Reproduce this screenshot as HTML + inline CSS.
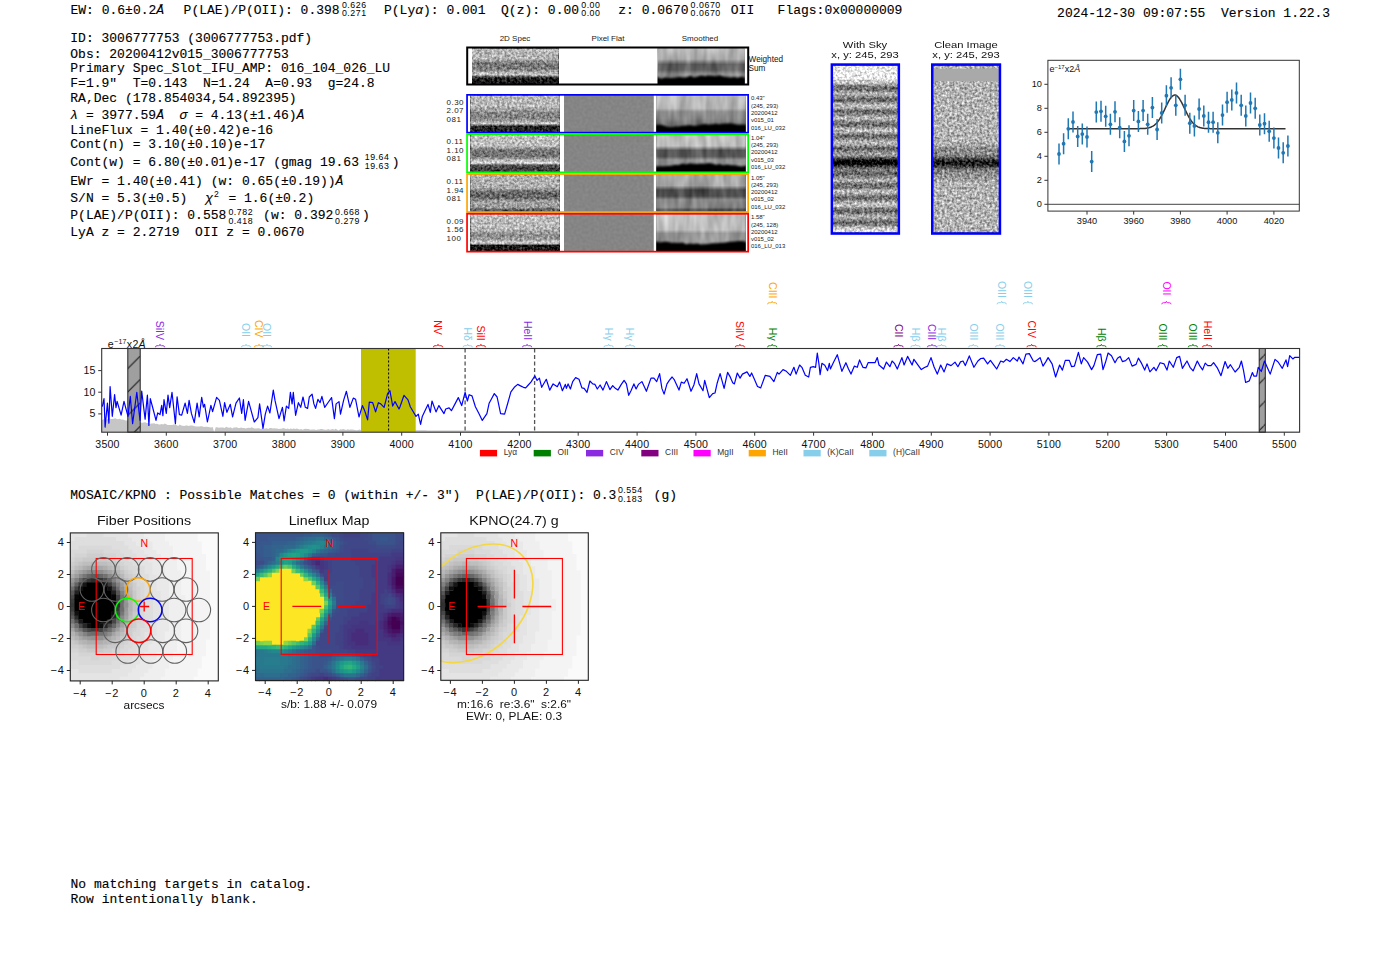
<!DOCTYPE html>
<html><head><meta charset="utf-8"><style>
html,body{margin:0;padding:0;background:#fff;}
body{width:1400px;height:953px;position:relative;overflow:hidden;}
.t{position:absolute;white-space:pre;font-family:'Liberation Mono', monospace;color:#000;-webkit-text-stroke:0.12px #000;}
.s{position:absolute;white-space:pre;font-family:'Liberation Sans', sans-serif;color:#000;}
svg{position:absolute;left:0;top:0;}
</style></head><body>
<svg width="1400" height="953"><defs><filter id="nz1" x="0" y="0" width="100%" height="100%" color-interpolation-filters="sRGB"><feTurbulence type="fractalNoise" baseFrequency="0.4" numOctaves="2" seed="3" result="t"/><feColorMatrix in="t" type="matrix" values="1 0 0 0 0 1 0 0 0 0 1 0 0 0 0 0 0 0 0 1" result="g"/><feComposite in="SourceGraphic" in2="g" operator="arithmetic" k1="0" k2="1" k3="0.72" k4="-0.36"/></filter><filter id="nz2" x="0" y="0" width="100%" height="100%" color-interpolation-filters="sRGB"><feTurbulence type="fractalNoise" baseFrequency="0.4" numOctaves="2" seed="7" result="t"/><feColorMatrix in="t" type="matrix" values="1 0 0 0 0 1 0 0 0 0 1 0 0 0 0 0 0 0 0 1" result="g"/><feComposite in="SourceGraphic" in2="g" operator="arithmetic" k1="0" k2="1" k3="0.72" k4="-0.36"/></filter><filter id="nz3" x="0" y="0" width="100%" height="100%" color-interpolation-filters="sRGB"><feTurbulence type="fractalNoise" baseFrequency="0.4" numOctaves="2" seed="11" result="t"/><feColorMatrix in="t" type="matrix" values="1 0 0 0 0 1 0 0 0 0 1 0 0 0 0 0 0 0 0 1" result="g"/><feComposite in="SourceGraphic" in2="g" operator="arithmetic" k1="0" k2="1" k3="0.72" k4="-0.36"/></filter><filter id="nz4" x="0" y="0" width="100%" height="100%" color-interpolation-filters="sRGB"><feTurbulence type="fractalNoise" baseFrequency="0.4" numOctaves="2" seed="17" result="t"/><feColorMatrix in="t" type="matrix" values="1 0 0 0 0 1 0 0 0 0 1 0 0 0 0 0 0 0 0 1" result="g"/><feComposite in="SourceGraphic" in2="g" operator="arithmetic" k1="0" k2="1" k3="0.72" k4="-0.36"/></filter><filter id="nz5" x="0" y="0" width="100%" height="100%" color-interpolation-filters="sRGB"><feTurbulence type="fractalNoise" baseFrequency="0.4" numOctaves="2" seed="23" result="t"/><feColorMatrix in="t" type="matrix" values="1 0 0 0 0 1 0 0 0 0 1 0 0 0 0 0 0 0 0 1" result="g"/><feComposite in="SourceGraphic" in2="g" operator="arithmetic" k1="0" k2="1" k3="0.72" k4="-0.36"/></filter><filter id="nzs" x="0" y="0" width="100%" height="100%" color-interpolation-filters="sRGB"><feTurbulence type="fractalNoise" baseFrequency="0.4" numOctaves="2" seed="31" result="t"/><feColorMatrix in="t" type="matrix" values="1 0 0 0 0 1 0 0 0 0 1 0 0 0 0 0 0 0 0 1" result="g"/><feComposite in="SourceGraphic" in2="g" operator="arithmetic" k1="0" k2="1" k3="0.85" k4="-0.425"/></filter><filter id="nzc" x="0" y="0" width="100%" height="100%" color-interpolation-filters="sRGB"><feTurbulence type="fractalNoise" baseFrequency="0.4" numOctaves="2" seed="41" result="t"/><feColorMatrix in="t" type="matrix" values="1 0 0 0 0 1 0 0 0 0 1 0 0 0 0 0 0 0 0 1" result="g"/><feComposite in="SourceGraphic" in2="g" operator="arithmetic" k1="0" k2="1" k3="0.85" k4="-0.425"/></filter><filter id="nzp" x="0" y="0" width="100%" height="100%" color-interpolation-filters="sRGB"><feTurbulence type="fractalNoise" baseFrequency="0.35" numOctaves="1" seed="53" result="t"/><feColorMatrix in="t" type="matrix" values="1 0 0 0 0 1 0 0 0 0 1 0 0 0 0 0 0 0 0 1" result="g"/><feComposite in="SourceGraphic" in2="g" operator="arithmetic" k1="0" k2="1" k3="0.07" k4="-0.035"/></filter><filter id="streak" x="0" y="0" width="100%" height="100%" color-interpolation-filters="sRGB"><feTurbulence type="fractalNoise" baseFrequency="0.14 0.035" numOctaves="2" seed="5" result="t"/><feColorMatrix in="t" type="matrix" values="1 0 0 0 0 1 0 0 0 0 1 0 0 0 0 0 0 0 0 1" result="g"/><feComposite in="SourceGraphic" in2="g" operator="arithmetic" k1="0" k2="1" k3="0.32" k4="-0.16"/></filter><filter id="soft" x="-5%" y="-30%" width="110%" height="160%"><feGaussianBlur stdDeviation="1.1"/></filter><linearGradient id="g1" x1="0" y1="0" x2="0" y2="1"><stop offset="0.000" stop-color="#b8b8b8"/><stop offset="0.300" stop-color="#b2b2b2"/><stop offset="0.420" stop-color="#737373"/><stop offset="0.580" stop-color="#7a7a7a"/><stop offset="0.680" stop-color="#b2b2b2"/><stop offset="0.740" stop-color="#c7c7c7"/><stop offset="0.800" stop-color="#4c4c4c"/><stop offset="0.860" stop-color="#1a1a1a"/><stop offset="1.000" stop-color="#141414"/></linearGradient><linearGradient id="g2" x1="0" y1="0" x2="0" y2="1"><stop offset="0.000" stop-color="#b8b8b8"/><stop offset="0.300" stop-color="#a8a8a8"/><stop offset="0.450" stop-color="#5c5c5c"/><stop offset="0.600" stop-color="#616161"/><stop offset="0.720" stop-color="#8c8c8c"/><stop offset="1.000" stop-color="#808080"/></linearGradient><clipPath id="cb1"><rect x="657.7" y="66.9" width="87.2" height="17.1"/></clipPath><linearGradient id="g3" x1="0" y1="0" x2="0" y2="1"><stop offset="0.000" stop-color="#b8b8b8"/><stop offset="0.300" stop-color="#b8b8b8"/><stop offset="0.450" stop-color="#8c8c8c"/><stop offset="0.600" stop-color="#808080"/><stop offset="0.700" stop-color="#9e9e9e"/><stop offset="0.760" stop-color="#cccccc"/><stop offset="0.800" stop-color="#808080"/><stop offset="0.840" stop-color="#262626"/><stop offset="1.000" stop-color="#1f1f1f"/></linearGradient><linearGradient id="g4" x1="0" y1="0" x2="0" y2="1"><stop offset="0.000" stop-color="#bdbdbd"/><stop offset="0.350" stop-color="#b8b8b8"/><stop offset="0.450" stop-color="#8f8f8f"/><stop offset="0.620" stop-color="#858585"/><stop offset="0.750" stop-color="#757575"/><stop offset="1.000" stop-color="#666666"/></linearGradient><clipPath id="cb2"><rect x="656.3" y="114.9" width="89.4" height="17.4"/></clipPath><linearGradient id="g5" x1="0" y1="0" x2="0" y2="1"><stop offset="0.000" stop-color="#c2c2c2"/><stop offset="0.300" stop-color="#bdbdbd"/><stop offset="0.420" stop-color="#737373"/><stop offset="0.580" stop-color="#737373"/><stop offset="0.680" stop-color="#b8b8b8"/><stop offset="0.760" stop-color="#d9d9d9"/><stop offset="0.820" stop-color="#4c4c4c"/><stop offset="1.000" stop-color="#383838"/></linearGradient><linearGradient id="g6" x1="0" y1="0" x2="0" y2="1"><stop offset="0.000" stop-color="#c2c2c2"/><stop offset="0.300" stop-color="#bdbdbd"/><stop offset="0.420" stop-color="#545454"/><stop offset="0.580" stop-color="#595959"/><stop offset="0.680" stop-color="#949494"/><stop offset="0.780" stop-color="#949494"/><stop offset="1.000" stop-color="#808080"/></linearGradient><clipPath id="cb3"><rect x="656.3" y="154.9" width="89.4" height="17.1"/></clipPath><linearGradient id="g7" x1="0" y1="0" x2="0" y2="1"><stop offset="0.000" stop-color="#b2b2b2"/><stop offset="0.350" stop-color="#adadad"/><stop offset="0.500" stop-color="#616161"/><stop offset="0.620" stop-color="#666666"/><stop offset="0.720" stop-color="#9e9e9e"/><stop offset="0.880" stop-color="#9e9e9e"/><stop offset="0.950" stop-color="#595959"/><stop offset="1.000" stop-color="#4c4c4c"/></linearGradient><linearGradient id="g8" x1="0" y1="0" x2="0" y2="1"><stop offset="0.000" stop-color="#adadad"/><stop offset="0.300" stop-color="#a3a3a3"/><stop offset="0.420" stop-color="#474747"/><stop offset="0.580" stop-color="#4c4c4c"/><stop offset="0.680" stop-color="#878787"/><stop offset="0.880" stop-color="#858585"/><stop offset="0.950" stop-color="#545454"/><stop offset="1.000" stop-color="#545454"/></linearGradient><linearGradient id="g9" x1="0" y1="0" x2="0" y2="1"><stop offset="0.000" stop-color="#bdbdbd"/><stop offset="0.400" stop-color="#b8b8b8"/><stop offset="0.550" stop-color="#8c8c8c"/><stop offset="0.680" stop-color="#999999"/><stop offset="0.750" stop-color="#cccccc"/><stop offset="0.800" stop-color="#b2b2b2"/><stop offset="0.840" stop-color="#1a1a1a"/><stop offset="1.000" stop-color="#141414"/></linearGradient><linearGradient id="g10" x1="0" y1="0" x2="0" y2="1"><stop offset="0.000" stop-color="#c2c2c2"/><stop offset="0.420" stop-color="#bdbdbd"/><stop offset="0.520" stop-color="#949494"/><stop offset="0.700" stop-color="#949494"/><stop offset="1.000" stop-color="#808080"/></linearGradient><clipPath id="cb4"><rect x="656.3" y="232.7" width="89.4" height="18.6"/></clipPath><linearGradient id="g11" x1="0" y1="0" x2="0" y2="1"><stop offset="0.000" stop-color="#ebebeb"/><stop offset="0.006" stop-color="#ebebeb"/><stop offset="0.013" stop-color="#ebebeb"/><stop offset="0.019" stop-color="#ebebeb"/><stop offset="0.025" stop-color="#ebebeb"/><stop offset="0.031" stop-color="#ebebeb"/><stop offset="0.038" stop-color="#ebebeb"/><stop offset="0.044" stop-color="#ebebeb"/><stop offset="0.050" stop-color="#ebebeb"/><stop offset="0.057" stop-color="#ebebeb"/><stop offset="0.063" stop-color="#ebebeb"/><stop offset="0.069" stop-color="#eaeaea"/><stop offset="0.075" stop-color="#eaeaea"/><stop offset="0.082" stop-color="#e9e9e9"/><stop offset="0.088" stop-color="#d8d8d8"/><stop offset="0.094" stop-color="#d3d3d3"/><stop offset="0.101" stop-color="#cbcbcb"/><stop offset="0.107" stop-color="#bdbdbd"/><stop offset="0.113" stop-color="#a9a9a9"/><stop offset="0.119" stop-color="#929292"/><stop offset="0.126" stop-color="#7b7b7b"/><stop offset="0.132" stop-color="#6b6b6b"/><stop offset="0.138" stop-color="#666666"/><stop offset="0.145" stop-color="#6e6e6e"/><stop offset="0.151" stop-color="#808080"/><stop offset="0.157" stop-color="#959595"/><stop offset="0.164" stop-color="#a7a7a7"/><stop offset="0.170" stop-color="#b0b0b0"/><stop offset="0.176" stop-color="#adadad"/><stop offset="0.182" stop-color="#9f9f9f"/><stop offset="0.189" stop-color="#8b8b8b"/><stop offset="0.195" stop-color="#777777"/><stop offset="0.201" stop-color="#696969"/><stop offset="0.208" stop-color="#676767"/><stop offset="0.214" stop-color="#717171"/><stop offset="0.220" stop-color="#858585"/><stop offset="0.226" stop-color="#9b9b9b"/><stop offset="0.233" stop-color="#aeaeae"/><stop offset="0.239" stop-color="#b9b9b9"/><stop offset="0.245" stop-color="#b9b9b9"/><stop offset="0.252" stop-color="#afafaf"/><stop offset="0.258" stop-color="#9c9c9c"/><stop offset="0.264" stop-color="#858585"/><stop offset="0.270" stop-color="#727272"/><stop offset="0.277" stop-color="#676767"/><stop offset="0.283" stop-color="#696969"/><stop offset="0.289" stop-color="#777777"/><stop offset="0.296" stop-color="#8c8c8c"/><stop offset="0.302" stop-color="#a2a2a2"/><stop offset="0.308" stop-color="#b2b2b2"/><stop offset="0.314" stop-color="#b9b9b9"/><stop offset="0.321" stop-color="#b5b5b5"/><stop offset="0.327" stop-color="#a7a7a7"/><stop offset="0.333" stop-color="#939393"/><stop offset="0.340" stop-color="#7c7c7c"/><stop offset="0.346" stop-color="#6c6c6c"/><stop offset="0.352" stop-color="#666666"/><stop offset="0.358" stop-color="#6d6d6d"/><stop offset="0.365" stop-color="#7f7f7f"/><stop offset="0.371" stop-color="#959595"/><stop offset="0.377" stop-color="#aaaaaa"/><stop offset="0.384" stop-color="#b7b7b7"/><stop offset="0.390" stop-color="#bababa"/><stop offset="0.396" stop-color="#b3b3b3"/><stop offset="0.403" stop-color="#a2a2a2"/><stop offset="0.409" stop-color="#8b8b8b"/><stop offset="0.415" stop-color="#767676"/><stop offset="0.421" stop-color="#696969"/><stop offset="0.428" stop-color="#676767"/><stop offset="0.434" stop-color="#727272"/><stop offset="0.440" stop-color="#868686"/><stop offset="0.447" stop-color="#9c9c9c"/><stop offset="0.453" stop-color="#afafaf"/><stop offset="0.459" stop-color="#b9b9b9"/><stop offset="0.465" stop-color="#b9b9b9"/><stop offset="0.472" stop-color="#aeaeae"/><stop offset="0.478" stop-color="#9b9b9b"/><stop offset="0.484" stop-color="#848484"/><stop offset="0.491" stop-color="#707070"/><stop offset="0.497" stop-color="#656565"/><stop offset="0.503" stop-color="#676767"/><stop offset="0.509" stop-color="#737373"/><stop offset="0.516" stop-color="#858585"/><stop offset="0.522" stop-color="#959595"/><stop offset="0.528" stop-color="#9e9e9e"/><stop offset="0.535" stop-color="#9b9b9b"/><stop offset="0.541" stop-color="#8d8d8d"/><stop offset="0.547" stop-color="#757575"/><stop offset="0.553" stop-color="#575757"/><stop offset="0.560" stop-color="#363636"/><stop offset="0.566" stop-color="#181818"/><stop offset="0.572" stop-color="#010101"/><stop offset="0.579" stop-color="#000000"/><stop offset="0.585" stop-color="#000000"/><stop offset="0.591" stop-color="#080808"/><stop offset="0.597" stop-color="#202020"/><stop offset="0.604" stop-color="#3e3e3e"/><stop offset="0.610" stop-color="#5a5a5a"/><stop offset="0.616" stop-color="#707070"/><stop offset="0.623" stop-color="#7b7b7b"/><stop offset="0.629" stop-color="#7b7b7b"/><stop offset="0.635" stop-color="#727272"/><stop offset="0.642" stop-color="#676767"/><stop offset="0.648" stop-color="#606060"/><stop offset="0.654" stop-color="#636363"/><stop offset="0.660" stop-color="#717171"/><stop offset="0.667" stop-color="#868686"/><stop offset="0.673" stop-color="#9b9b9b"/><stop offset="0.679" stop-color="#aaaaaa"/><stop offset="0.686" stop-color="#afafaf"/><stop offset="0.692" stop-color="#a8a8a8"/><stop offset="0.698" stop-color="#979797"/><stop offset="0.704" stop-color="#828282"/><stop offset="0.711" stop-color="#707070"/><stop offset="0.717" stop-color="#666666"/><stop offset="0.723" stop-color="#696969"/><stop offset="0.730" stop-color="#787878"/><stop offset="0.736" stop-color="#8e8e8e"/><stop offset="0.742" stop-color="#a4a4a4"/><stop offset="0.748" stop-color="#b4b4b4"/><stop offset="0.755" stop-color="#bababa"/><stop offset="0.761" stop-color="#b6b6b6"/><stop offset="0.767" stop-color="#a8a8a8"/><stop offset="0.774" stop-color="#939393"/><stop offset="0.780" stop-color="#7d7d7d"/><stop offset="0.786" stop-color="#6c6c6c"/><stop offset="0.792" stop-color="#666666"/><stop offset="0.799" stop-color="#6d6d6d"/><stop offset="0.805" stop-color="#7f7f7f"/><stop offset="0.811" stop-color="#969696"/><stop offset="0.818" stop-color="#acacac"/><stop offset="0.824" stop-color="#bcbcbc"/><stop offset="0.830" stop-color="#c3c3c3"/><stop offset="0.836" stop-color="#c0c0c0"/><stop offset="0.843" stop-color="#b4b4b4"/><stop offset="0.849" stop-color="#a0a0a0"/><stop offset="0.855" stop-color="#898989"/><stop offset="0.862" stop-color="#747474"/><stop offset="0.868" stop-color="#676767"/><stop offset="0.874" stop-color="#676767"/><stop offset="0.881" stop-color="#747474"/><stop offset="0.887" stop-color="#878787"/><stop offset="0.893" stop-color="#9c9c9c"/><stop offset="0.899" stop-color="#aaaaaa"/><stop offset="0.906" stop-color="#afafaf"/><stop offset="0.912" stop-color="#a7a7a7"/><stop offset="0.918" stop-color="#969696"/><stop offset="0.925" stop-color="#818181"/><stop offset="0.931" stop-color="#6f6f6f"/><stop offset="0.937" stop-color="#666666"/><stop offset="0.943" stop-color="#6a6a6a"/><stop offset="0.950" stop-color="#7a7a7a"/><stop offset="0.956" stop-color="#909090"/><stop offset="0.962" stop-color="#a8a8a8"/><stop offset="0.969" stop-color="#bcbcbc"/><stop offset="0.975" stop-color="#cacaca"/><stop offset="0.981" stop-color="#d3d3d3"/><stop offset="0.987" stop-color="#d8d8d8"/><stop offset="0.994" stop-color="#dadada"/><stop offset="1.000" stop-color="#dbdbdb"/></linearGradient><linearGradient id="g12" x1="0" y1="0" x2="0" y2="1"><stop offset="0.000" stop-color="#b2b2b2"/><stop offset="0.006" stop-color="#b2b2b2"/><stop offset="0.013" stop-color="#b2b2b2"/><stop offset="0.019" stop-color="#b2b2b2"/><stop offset="0.025" stop-color="#b2b2b2"/><stop offset="0.031" stop-color="#b2b2b2"/><stop offset="0.038" stop-color="#b2b2b2"/><stop offset="0.044" stop-color="#b2b2b2"/><stop offset="0.050" stop-color="#b2b2b2"/><stop offset="0.057" stop-color="#b2b2b2"/><stop offset="0.063" stop-color="#b2b2b2"/><stop offset="0.069" stop-color="#b2b2b2"/><stop offset="0.075" stop-color="#b2b2b2"/><stop offset="0.082" stop-color="#b2b2b2"/><stop offset="0.088" stop-color="#b2b2b2"/><stop offset="0.094" stop-color="#b2b2b2"/><stop offset="0.101" stop-color="#b2b2b2"/><stop offset="0.107" stop-color="#b2b2b2"/><stop offset="0.113" stop-color="#b2b2b2"/><stop offset="0.119" stop-color="#b2b2b2"/><stop offset="0.126" stop-color="#b2b2b2"/><stop offset="0.132" stop-color="#b2b2b2"/><stop offset="0.138" stop-color="#b2b2b2"/><stop offset="0.145" stop-color="#b2b2b2"/><stop offset="0.151" stop-color="#b2b2b2"/><stop offset="0.157" stop-color="#b2b2b2"/><stop offset="0.164" stop-color="#b2b2b2"/><stop offset="0.170" stop-color="#b2b2b2"/><stop offset="0.176" stop-color="#b2b2b2"/><stop offset="0.182" stop-color="#b2b2b2"/><stop offset="0.189" stop-color="#b2b2b2"/><stop offset="0.195" stop-color="#b2b2b2"/><stop offset="0.201" stop-color="#b2b2b2"/><stop offset="0.208" stop-color="#b2b2b2"/><stop offset="0.214" stop-color="#b2b2b2"/><stop offset="0.220" stop-color="#b2b2b2"/><stop offset="0.226" stop-color="#b2b2b2"/><stop offset="0.233" stop-color="#b2b2b2"/><stop offset="0.239" stop-color="#b2b2b2"/><stop offset="0.245" stop-color="#b2b2b2"/><stop offset="0.252" stop-color="#b2b2b2"/><stop offset="0.258" stop-color="#b2b2b2"/><stop offset="0.264" stop-color="#b2b2b2"/><stop offset="0.270" stop-color="#b2b2b2"/><stop offset="0.277" stop-color="#b2b2b2"/><stop offset="0.283" stop-color="#b2b2b2"/><stop offset="0.289" stop-color="#b2b2b2"/><stop offset="0.296" stop-color="#b2b2b2"/><stop offset="0.302" stop-color="#b2b2b2"/><stop offset="0.308" stop-color="#b2b2b2"/><stop offset="0.314" stop-color="#b2b2b2"/><stop offset="0.321" stop-color="#b2b2b2"/><stop offset="0.327" stop-color="#b2b2b2"/><stop offset="0.333" stop-color="#b2b2b2"/><stop offset="0.340" stop-color="#b2b2b2"/><stop offset="0.346" stop-color="#b2b2b2"/><stop offset="0.352" stop-color="#b2b2b2"/><stop offset="0.358" stop-color="#b2b2b2"/><stop offset="0.365" stop-color="#b2b2b2"/><stop offset="0.371" stop-color="#b2b2b2"/><stop offset="0.377" stop-color="#b2b2b2"/><stop offset="0.384" stop-color="#b2b2b2"/><stop offset="0.390" stop-color="#b2b2b2"/><stop offset="0.396" stop-color="#b2b2b2"/><stop offset="0.403" stop-color="#b2b2b2"/><stop offset="0.409" stop-color="#b2b2b2"/><stop offset="0.415" stop-color="#b2b2b2"/><stop offset="0.421" stop-color="#b2b2b2"/><stop offset="0.428" stop-color="#b2b2b2"/><stop offset="0.434" stop-color="#b2b2b2"/><stop offset="0.440" stop-color="#b2b2b2"/><stop offset="0.447" stop-color="#b2b2b2"/><stop offset="0.453" stop-color="#b2b2b2"/><stop offset="0.459" stop-color="#b1b1b1"/><stop offset="0.465" stop-color="#afafaf"/><stop offset="0.472" stop-color="#acacac"/><stop offset="0.478" stop-color="#a6a6a6"/><stop offset="0.484" stop-color="#9f9f9f"/><stop offset="0.491" stop-color="#969696"/><stop offset="0.497" stop-color="#8e8e8e"/><stop offset="0.503" stop-color="#898989"/><stop offset="0.509" stop-color="#878787"/><stop offset="0.516" stop-color="#898989"/><stop offset="0.522" stop-color="#8c8c8c"/><stop offset="0.528" stop-color="#8d8d8d"/><stop offset="0.535" stop-color="#898989"/><stop offset="0.541" stop-color="#7f7f7f"/><stop offset="0.547" stop-color="#6f6f6f"/><stop offset="0.553" stop-color="#5b5b5b"/><stop offset="0.560" stop-color="#454545"/><stop offset="0.566" stop-color="#303030"/><stop offset="0.572" stop-color="#202020"/><stop offset="0.579" stop-color="#161616"/><stop offset="0.585" stop-color="#151515"/><stop offset="0.591" stop-color="#1c1c1c"/><stop offset="0.597" stop-color="#2b2b2b"/><stop offset="0.604" stop-color="#3e3e3e"/><stop offset="0.610" stop-color="#525252"/><stop offset="0.616" stop-color="#666666"/><stop offset="0.623" stop-color="#757575"/><stop offset="0.629" stop-color="#818181"/><stop offset="0.635" stop-color="#888888"/><stop offset="0.642" stop-color="#8c8c8c"/><stop offset="0.648" stop-color="#8e8e8e"/><stop offset="0.654" stop-color="#909090"/><stop offset="0.660" stop-color="#939393"/><stop offset="0.667" stop-color="#969696"/><stop offset="0.673" stop-color="#9b9b9b"/><stop offset="0.679" stop-color="#a0a0a0"/><stop offset="0.686" stop-color="#a5a5a5"/><stop offset="0.692" stop-color="#a9a9a9"/><stop offset="0.698" stop-color="#acacac"/><stop offset="0.704" stop-color="#afafaf"/><stop offset="0.711" stop-color="#b0b0b0"/><stop offset="0.717" stop-color="#b1b1b1"/><stop offset="0.723" stop-color="#b2b2b2"/><stop offset="0.730" stop-color="#b2b2b2"/><stop offset="0.736" stop-color="#b2b2b2"/><stop offset="0.742" stop-color="#b2b2b2"/><stop offset="0.748" stop-color="#b2b2b2"/><stop offset="0.755" stop-color="#b2b2b2"/><stop offset="0.761" stop-color="#b2b2b2"/><stop offset="0.767" stop-color="#b2b2b2"/><stop offset="0.774" stop-color="#b2b2b2"/><stop offset="0.780" stop-color="#b2b2b2"/><stop offset="0.786" stop-color="#b2b2b2"/><stop offset="0.792" stop-color="#b2b2b2"/><stop offset="0.799" stop-color="#b2b2b2"/><stop offset="0.805" stop-color="#b2b2b2"/><stop offset="0.811" stop-color="#b2b2b2"/><stop offset="0.818" stop-color="#b2b2b2"/><stop offset="0.824" stop-color="#b2b2b2"/><stop offset="0.830" stop-color="#b2b2b2"/><stop offset="0.836" stop-color="#b2b2b2"/><stop offset="0.843" stop-color="#b2b2b2"/><stop offset="0.849" stop-color="#b2b2b2"/><stop offset="0.855" stop-color="#b2b2b2"/><stop offset="0.862" stop-color="#b2b2b2"/><stop offset="0.868" stop-color="#b2b2b2"/><stop offset="0.874" stop-color="#b2b2b2"/><stop offset="0.881" stop-color="#b2b2b2"/><stop offset="0.887" stop-color="#b2b2b2"/><stop offset="0.893" stop-color="#b2b2b2"/><stop offset="0.899" stop-color="#b2b2b2"/><stop offset="0.906" stop-color="#b2b2b2"/><stop offset="0.912" stop-color="#b2b2b2"/><stop offset="0.918" stop-color="#b2b2b2"/><stop offset="0.925" stop-color="#b2b2b2"/><stop offset="0.931" stop-color="#b2b2b2"/><stop offset="0.937" stop-color="#b2b2b2"/><stop offset="0.943" stop-color="#b2b2b2"/><stop offset="0.950" stop-color="#b2b2b2"/><stop offset="0.956" stop-color="#b2b2b2"/><stop offset="0.962" stop-color="#b2b2b2"/><stop offset="0.969" stop-color="#b2b2b2"/><stop offset="0.975" stop-color="#b2b2b2"/><stop offset="0.981" stop-color="#b2b2b2"/><stop offset="0.987" stop-color="#b2b2b2"/><stop offset="0.994" stop-color="#b2b2b2"/><stop offset="1.000" stop-color="#b2b2b2"/></linearGradient><pattern id="hatch" patternUnits="userSpaceOnUse" width="23.4" height="23.4" patternTransform="translate(0,4.9)"><rect width="23.4" height="23.4" fill="#9f9f9f"/><path d="M-1,24.4 L24.4,-1" stroke="#111" stroke-width="1"/></pattern></defs><rect x="472" y="48.4" width="86.6" height="35.6" fill="url(#g1)" filter="url(#nz5)"/>
<rect x="657.7" y="48.4" width="87.2" height="35.6" fill="url(#g2)" filter="url(#streak)"/>
<g clip-path="url(#cb1)"><polygon filter="url(#soft)" fill="#000" points="654.7,87.0 654.7,76.9 657.7,77.2 661.3,78.7 665.0,77.6 668.6,77.9 672.2,77.9 675.9,77.4 679.5,76.9 683.1,77.6 686.8,77.2 690.4,75.7 694.0,77.5 697.7,76.6 701.3,75.5 704.9,76.2 708.6,75.5 712.2,75.7 715.8,76.2 719.5,75.3 723.1,76.5 726.7,77.1 730.4,77.4 734.0,76.9 737.6,77.8 741.3,76.8 744.9,77.8 747.9,76.9 747.9,87.0"/></g>
<rect x="744.9" y="48" width="2.3" height="36" fill="#fff"/>
<rect x="467.2" y="47.5" width="281" height="37" fill="none" stroke="#000" stroke-width="2"/>
<rect x="470.5" y="95.2" width="89.3" height="37.1" fill="url(#g3)" filter="url(#nz1)"/>
<rect x="564" y="95.0" width="89.7" height="37.5" fill="#858585" filter="url(#nzp)"/>
<rect x="656.3" y="95.2" width="89.4" height="37.1" fill="url(#g4)" filter="url(#streak)"/>
<g clip-path="url(#cb2)"><polygon filter="url(#soft)" fill="#000" points="653.3,135.3 653.3,124.9 656.3,125.1 660.0,124.5 663.8,125.5 667.5,126.7 671.2,127.3 674.9,126.5 678.6,126.6 682.4,125.7 686.1,125.4 689.8,125.1 693.5,125.8 697.3,125.6 701.0,124.6 704.7,124.0 708.4,124.4 712.2,124.2 715.9,123.7 719.6,124.3 723.3,123.5 727.1,123.6 730.8,123.2 734.5,124.0 738.2,124.8 742.0,124.5 745.7,124.8 748.7,124.9 748.7,135.3"/></g>
<rect x="470.5" y="134.7" width="89.3" height="37.3" fill="url(#g5)" filter="url(#nz2)"/>
<rect x="564" y="134.5" width="89.7" height="37.7" fill="#858585" filter="url(#nzp)"/>
<rect x="656.3" y="134.7" width="89.4" height="37.3" fill="url(#g6)" filter="url(#streak)"/>
<g clip-path="url(#cb3)"><polygon filter="url(#soft)" fill="#000" points="653.3,175.0 653.3,164.9 656.3,166.4 660.0,166.3 663.8,166.2 667.5,166.0 671.2,165.7 674.9,164.7 678.6,164.9 682.4,163.6 686.1,164.3 689.8,163.3 693.5,163.7 697.3,163.9 701.0,163.4 704.7,163.7 708.4,163.0 712.2,163.6 715.9,164.7 719.6,164.1 723.3,165.3 727.1,164.6 730.8,165.2 734.5,165.3 738.2,166.1 742.0,166.5 745.7,165.7 748.7,164.9 748.7,175.0"/></g>
<rect x="470.5" y="174.4" width="89.3" height="37.3" fill="url(#g7)" filter="url(#nz3)"/>
<rect x="564" y="174.2" width="89.7" height="37.7" fill="#858585" filter="url(#nzp)"/>
<rect x="656.3" y="174.4" width="89.4" height="37.3" fill="url(#g8)" filter="url(#streak)"/>
<rect x="470.5" y="214.1" width="89.3" height="37.2" fill="url(#g9)" filter="url(#nz4)"/>
<rect x="564" y="213.9" width="89.7" height="37.6" fill="#858585" filter="url(#nzp)"/>
<rect x="656.3" y="214.1" width="89.4" height="37.2" fill="url(#g10)" filter="url(#streak)"/>
<g clip-path="url(#cb4)"><polygon filter="url(#soft)" fill="#000" points="653.3,254.3 653.3,242.7 656.3,241.4 660.0,242.5 663.8,241.8 667.5,241.8 671.2,242.7 674.9,242.8 678.6,242.9 682.4,242.6 686.1,244.2 689.8,243.6 693.5,244.0 697.3,243.5 701.0,244.6 704.7,244.2 708.4,244.1 712.2,243.3 715.9,243.2 719.6,243.1 723.3,242.8 727.1,242.2 730.8,241.7 734.5,241.4 738.2,241.1 742.0,241.0 745.7,241.7 748.7,242.7 748.7,254.3"/></g>
<rect x="467.05" y="94.85" width="281.1" height="37.80" fill="none" stroke="#0000ff" stroke-width="1.7"/>
<rect x="467.05" y="134.35" width="281.1" height="38.00" fill="none" stroke="#00ff00" stroke-width="1.7"/>
<rect x="467.05" y="174.05" width="281.1" height="38.00" fill="none" stroke="#ffa500" stroke-width="1.7"/>
<rect x="467.05" y="213.75" width="281.1" height="37.90" fill="none" stroke="#ff0000" stroke-width="1.7"/>
<rect x="832.6" y="65.3" width="65.5" height="167.4" fill="url(#g11)" filter="url(#nzs)"/>
<rect x="933.0" y="65.3" width="66.2" height="167.4" fill="url(#g12)" filter="url(#nzc)"/>
<rect x="933.0" y="68.6" width="66.2" height="12.6" fill="#a9a9a9"/>
<rect x="831.85" y="64.55" width="67" height="169" fill="none" stroke="#0000ff" stroke-width="2.5"/>
<rect x="932.25" y="64.55" width="67.7" height="169" fill="none" stroke="#0000ff" stroke-width="2.5"/>
<rect x="1047.9" y="60.3" width="251.4" height="150.8" fill="#fff" stroke="#333" stroke-width="1"/>
<line x1="1047.9" y1="204.3" x2="1299.3" y2="204.3" stroke="#444" stroke-width="1"/>
<polyline fill="none" stroke="#333" stroke-width="1.5" points="1068.3,128.7 1068.9,128.7 1069.5,128.7 1070.1,128.7 1070.7,128.7 1071.2,128.7 1071.8,128.7 1072.4,128.7 1073.0,128.7 1073.6,128.7 1074.2,128.7 1074.7,128.7 1075.3,128.7 1075.9,128.7 1076.5,128.7 1077.1,128.7 1077.7,128.7 1078.2,128.7 1078.8,128.7 1079.4,128.7 1080.0,128.7 1080.6,128.7 1081.2,128.7 1081.7,128.7 1082.3,128.7 1082.9,128.7 1083.5,128.7 1084.1,128.7 1084.7,128.7 1085.2,128.7 1085.8,128.7 1086.4,128.7 1087.0,128.7 1087.6,128.7 1088.2,128.7 1088.8,128.7 1089.3,128.7 1089.9,128.7 1090.5,128.7 1091.1,128.7 1091.7,128.7 1092.3,128.7 1092.8,128.7 1093.4,128.7 1094.0,128.7 1094.6,128.7 1095.2,128.7 1095.8,128.7 1096.3,128.7 1096.9,128.7 1097.5,128.7 1098.1,128.7 1098.7,128.7 1099.3,128.7 1099.8,128.7 1100.4,128.7 1101.0,128.7 1101.6,128.7 1102.2,128.7 1102.8,128.7 1103.3,128.7 1103.9,128.7 1104.5,128.7 1105.1,128.7 1105.7,128.7 1106.3,128.7 1106.9,128.7 1107.4,128.7 1108.0,128.7 1108.6,128.7 1109.2,128.7 1109.8,128.7 1110.4,128.7 1110.9,128.7 1111.5,128.7 1112.1,128.7 1112.7,128.7 1113.3,128.7 1113.9,128.7 1114.4,128.7 1115.0,128.7 1115.6,128.7 1116.2,128.7 1116.8,128.7 1117.4,128.7 1117.9,128.7 1118.5,128.7 1119.1,128.7 1119.7,128.7 1120.3,128.7 1120.9,128.7 1121.5,128.7 1122.0,128.7 1122.6,128.7 1123.2,128.7 1123.8,128.7 1124.4,128.7 1125.0,128.7 1125.5,128.7 1126.1,128.7 1126.7,128.7 1127.3,128.7 1127.9,128.7 1128.5,128.7 1129.0,128.7 1129.6,128.7 1130.2,128.7 1130.8,128.7 1131.4,128.7 1132.0,128.7 1132.5,128.7 1133.1,128.7 1133.7,128.7 1134.3,128.7 1134.9,128.7 1135.5,128.7 1136.0,128.7 1136.6,128.7 1137.2,128.7 1137.8,128.7 1138.4,128.7 1139.0,128.7 1139.6,128.7 1140.1,128.6 1140.7,128.6 1141.3,128.6 1141.9,128.6 1142.5,128.6 1143.1,128.6 1143.6,128.5 1144.2,128.5 1144.8,128.4 1145.4,128.4 1146.0,128.3 1146.6,128.2 1147.1,128.2 1147.7,128.0 1148.3,127.9 1148.9,127.8 1149.5,127.6 1150.1,127.5 1150.6,127.2 1151.2,127.0 1151.8,126.7 1152.4,126.4 1153.0,126.1 1153.6,125.7 1154.2,125.3 1154.7,124.9 1155.3,124.3 1155.9,123.8 1156.5,123.2 1157.1,122.5 1157.7,121.8 1158.2,121.0 1158.8,120.2 1159.4,119.3 1160.0,118.4 1160.6,117.4 1161.2,116.4 1161.7,115.3 1162.3,114.2 1162.9,113.0 1163.5,111.8 1164.1,110.6 1164.7,109.4 1165.2,108.2 1165.8,106.9 1166.4,105.7 1167.0,104.5 1167.6,103.3 1168.2,102.2 1168.7,101.1 1169.3,100.1 1169.9,99.2 1170.5,98.3 1171.1,97.5 1171.7,96.8 1172.3,96.3 1172.8,95.8 1173.4,95.5 1174.0,95.2 1174.6,95.1 1175.2,95.1 1175.8,95.3 1176.3,95.5 1176.9,95.9 1177.5,96.4 1178.1,97.0 1178.7,97.7 1179.3,98.5 1179.8,99.4 1180.4,100.3 1181.0,101.4 1181.6,102.4 1182.2,103.6 1182.8,104.8 1183.3,106.0 1183.9,107.2 1184.5,108.4 1185.1,109.7 1185.7,110.9 1186.3,112.1 1186.9,113.3 1187.4,114.4 1188.0,115.5 1188.6,116.6 1189.2,117.6 1189.8,118.6 1190.4,119.5 1190.9,120.4 1191.5,121.2 1192.1,122.0 1192.7,122.7 1193.3,123.3 1193.9,123.9 1194.4,124.5 1195.0,125.0 1195.6,125.4 1196.2,125.8 1196.8,126.2 1197.4,126.5 1197.9,126.8 1198.5,127.1 1199.1,127.3 1199.7,127.5 1200.3,127.7 1200.9,127.8 1201.4,128.0 1202.0,128.1 1202.6,128.2 1203.2,128.3 1203.8,128.3 1204.4,128.4 1205.0,128.4 1205.5,128.5 1206.1,128.5 1206.7,128.6 1207.3,128.6 1207.9,128.6 1208.5,128.6 1209.0,128.6 1209.6,128.6 1210.2,128.7 1210.8,128.7 1211.4,128.7 1212.0,128.7 1212.5,128.7 1213.1,128.7 1213.7,128.7 1214.3,128.7 1214.9,128.7 1215.5,128.7 1216.0,128.7 1216.6,128.7 1217.2,128.7 1217.8,128.7 1218.4,128.7 1219.0,128.7 1219.6,128.7 1220.1,128.7 1220.7,128.7 1221.3,128.7 1221.9,128.7 1222.5,128.7 1223.1,128.7 1223.6,128.7 1224.2,128.7 1224.8,128.7 1225.4,128.7 1226.0,128.7 1226.6,128.7 1227.1,128.7 1227.7,128.7 1228.3,128.7 1228.9,128.7 1229.5,128.7 1230.1,128.7 1230.6,128.7 1231.2,128.7 1231.8,128.7 1232.4,128.7 1233.0,128.7 1233.6,128.7 1234.1,128.7 1234.7,128.7 1235.3,128.7 1235.9,128.7 1236.5,128.7 1237.1,128.7 1237.7,128.7 1238.2,128.7 1238.8,128.7 1239.4,128.7 1240.0,128.7 1240.6,128.7 1241.2,128.7 1241.7,128.7 1242.3,128.7 1242.9,128.7 1243.5,128.7 1244.1,128.7 1244.7,128.7 1245.2,128.7 1245.8,128.7 1246.4,128.7 1247.0,128.7 1247.6,128.7 1248.2,128.7 1248.7,128.7 1249.3,128.7 1249.9,128.7 1250.5,128.7 1251.1,128.7 1251.7,128.7 1252.3,128.7 1252.8,128.7 1253.4,128.7 1254.0,128.7 1254.6,128.7 1255.2,128.7 1255.8,128.7 1256.3,128.7 1256.9,128.7 1257.5,128.7 1258.1,128.7 1258.7,128.7 1259.3,128.7 1259.8,128.7 1260.4,128.7 1261.0,128.7 1261.6,128.7 1262.2,128.7 1262.8,128.7 1263.3,128.7 1263.9,128.7 1264.5,128.7 1265.1,128.7 1265.7,128.7 1266.3,128.7 1266.8,128.7 1267.4,128.7 1268.0,128.7 1268.6,128.7 1269.2,128.7 1269.8,128.7 1270.4,128.7 1270.9,128.7 1271.5,128.7 1272.1,128.7 1272.7,128.7 1273.3,128.7 1273.9,128.7 1274.4,128.7 1275.0,128.7 1275.6,128.7 1276.2,128.7 1276.8,128.7 1277.4,128.7 1277.9,128.7 1278.5,128.7 1279.1,128.7 1279.7,128.7 1280.3,128.7 1280.9,128.7 1281.4,128.7 1282.0,128.7 1282.6,128.7 1283.2,128.7 1283.8,128.7 1284.4,128.7 1285.0,128.7 1285.5,128.7"/>
<path d="M1059.0 143.5V164.5M1063.6 133.2V154.2M1068.3 118.3V139.3M1073.0 111.5V132.5M1077.7 125.9V146.9M1082.3 123.6V144.6M1087.0 126.4V147.4M1091.7 151.1V172.1M1096.3 101.6V122.6M1101.0 100.8V121.8M1105.7 105.8V126.8M1110.4 113.8V134.8M1115.0 101.3V122.3M1119.7 117.2V138.2M1124.4 130.9V151.9M1129.0 125.3V146.3M1133.7 100.1V121.1M1138.4 110.9V131.9M1143.1 100.1V121.1M1147.7 113.8V134.8M1152.4 97.1V118.1M1157.1 119.0V140.0M1161.7 102.4V123.4M1166.4 85.2V106.2M1171.1 77.3V98.3M1175.8 94.8V115.8M1180.4 68.8V89.8M1185.1 94.8V115.8M1189.8 112.7V133.7M1194.4 115.4V136.4M1199.1 98.5V119.5M1203.8 105.4V126.4M1208.5 111.7V132.7M1213.1 111.7V132.7M1217.8 122.3V143.3M1222.5 104.6V125.6M1227.1 91.7V112.7M1231.8 89.4V110.4M1236.5 82.4V103.4M1241.2 94.8V115.8M1245.8 105.4V126.4M1250.5 92.5V113.5M1255.2 97.8V118.8M1259.8 114.5V135.5M1264.5 113.2V134.2M1269.2 120.8V141.8M1273.9 127.6V148.6M1278.5 137.4V158.4M1283.2 142.3V163.3M1287.9 135.5V156.5" stroke="#1f77b4" stroke-width="1.5" fill="none"/>
<circle cx="1059.0" cy="154.0" r="1.9" fill="#1f77b4"/>
<circle cx="1063.6" cy="143.7" r="1.9" fill="#1f77b4"/>
<circle cx="1068.3" cy="128.8" r="1.9" fill="#1f77b4"/>
<circle cx="1073.0" cy="122.0" r="1.9" fill="#1f77b4"/>
<circle cx="1077.7" cy="136.4" r="1.9" fill="#1f77b4"/>
<circle cx="1082.3" cy="134.1" r="1.9" fill="#1f77b4"/>
<circle cx="1087.0" cy="136.9" r="1.9" fill="#1f77b4"/>
<circle cx="1091.7" cy="161.6" r="1.9" fill="#1f77b4"/>
<circle cx="1096.3" cy="112.1" r="1.9" fill="#1f77b4"/>
<circle cx="1101.0" cy="111.3" r="1.9" fill="#1f77b4"/>
<circle cx="1105.7" cy="116.3" r="1.9" fill="#1f77b4"/>
<circle cx="1110.4" cy="124.3" r="1.9" fill="#1f77b4"/>
<circle cx="1115.0" cy="111.8" r="1.9" fill="#1f77b4"/>
<circle cx="1119.7" cy="127.7" r="1.9" fill="#1f77b4"/>
<circle cx="1124.4" cy="141.4" r="1.9" fill="#1f77b4"/>
<circle cx="1129.0" cy="135.8" r="1.9" fill="#1f77b4"/>
<circle cx="1133.7" cy="110.6" r="1.9" fill="#1f77b4"/>
<circle cx="1138.4" cy="121.4" r="1.9" fill="#1f77b4"/>
<circle cx="1143.1" cy="110.6" r="1.9" fill="#1f77b4"/>
<circle cx="1147.7" cy="124.3" r="1.9" fill="#1f77b4"/>
<circle cx="1152.4" cy="107.6" r="1.9" fill="#1f77b4"/>
<circle cx="1157.1" cy="129.5" r="1.9" fill="#1f77b4"/>
<circle cx="1161.7" cy="112.9" r="1.9" fill="#1f77b4"/>
<circle cx="1166.4" cy="95.7" r="1.9" fill="#1f77b4"/>
<circle cx="1171.1" cy="87.8" r="1.9" fill="#1f77b4"/>
<circle cx="1175.8" cy="105.3" r="1.9" fill="#1f77b4"/>
<circle cx="1180.4" cy="79.3" r="1.9" fill="#1f77b4"/>
<circle cx="1185.1" cy="105.3" r="1.9" fill="#1f77b4"/>
<circle cx="1189.8" cy="123.2" r="1.9" fill="#1f77b4"/>
<circle cx="1194.4" cy="125.9" r="1.9" fill="#1f77b4"/>
<circle cx="1199.1" cy="109.0" r="1.9" fill="#1f77b4"/>
<circle cx="1203.8" cy="115.9" r="1.9" fill="#1f77b4"/>
<circle cx="1208.5" cy="122.2" r="1.9" fill="#1f77b4"/>
<circle cx="1213.1" cy="122.2" r="1.9" fill="#1f77b4"/>
<circle cx="1217.8" cy="132.8" r="1.9" fill="#1f77b4"/>
<circle cx="1222.5" cy="115.1" r="1.9" fill="#1f77b4"/>
<circle cx="1227.1" cy="102.2" r="1.9" fill="#1f77b4"/>
<circle cx="1231.8" cy="99.9" r="1.9" fill="#1f77b4"/>
<circle cx="1236.5" cy="92.9" r="1.9" fill="#1f77b4"/>
<circle cx="1241.2" cy="105.3" r="1.9" fill="#1f77b4"/>
<circle cx="1245.8" cy="115.9" r="1.9" fill="#1f77b4"/>
<circle cx="1250.5" cy="103.0" r="1.9" fill="#1f77b4"/>
<circle cx="1255.2" cy="108.3" r="1.9" fill="#1f77b4"/>
<circle cx="1259.8" cy="125.0" r="1.9" fill="#1f77b4"/>
<circle cx="1264.5" cy="123.7" r="1.9" fill="#1f77b4"/>
<circle cx="1269.2" cy="131.3" r="1.9" fill="#1f77b4"/>
<circle cx="1273.9" cy="138.1" r="1.9" fill="#1f77b4"/>
<circle cx="1278.5" cy="147.9" r="1.9" fill="#1f77b4"/>
<circle cx="1283.2" cy="152.8" r="1.9" fill="#1f77b4"/>
<circle cx="1287.9" cy="146.0" r="1.9" fill="#1f77b4"/>
<line x1="1044.4" y1="204.3" x2="1047.9" y2="204.3" stroke="#333" stroke-width="1"/>
<line x1="1044.4" y1="180.3" x2="1047.9" y2="180.3" stroke="#333" stroke-width="1"/>
<line x1="1044.4" y1="156.3" x2="1047.9" y2="156.3" stroke="#333" stroke-width="1"/>
<line x1="1044.4" y1="132.3" x2="1047.9" y2="132.3" stroke="#333" stroke-width="1"/>
<line x1="1044.4" y1="108.3" x2="1047.9" y2="108.3" stroke="#333" stroke-width="1"/>
<line x1="1044.4" y1="84.3" x2="1047.9" y2="84.3" stroke="#333" stroke-width="1"/>
<line x1="1087.0" y1="211.1" x2="1087.0" y2="214.6" stroke="#333" stroke-width="1"/>
<line x1="1133.7" y1="211.1" x2="1133.7" y2="214.6" stroke="#333" stroke-width="1"/>
<line x1="1180.4" y1="211.1" x2="1180.4" y2="214.6" stroke="#333" stroke-width="1"/>
<line x1="1227.1" y1="211.1" x2="1227.1" y2="214.6" stroke="#333" stroke-width="1"/>
<line x1="1273.9" y1="211.1" x2="1273.9" y2="214.6" stroke="#333" stroke-width="1"/>
<rect x="101.7" y="348.5" width="1197.9" height="83.7" fill="#fff"/>
<polygon fill="#c6c6c6" points="101.7,432.2 101.7,420.4 103.2,419.3 104.7,419.5 106.2,419.8 107.7,419.1 109.2,418.4 110.7,418.9 112.2,419.1 113.7,418.7 115.2,418.3 116.7,419.0 118.2,419.2 119.7,418.8 121.2,419.4 122.7,419.6 124.2,420.0 125.7,420.5 127.2,420.6 128.7,420.6 130.2,420.6 131.7,420.8 133.2,421.3 134.7,421.9 136.2,421.8 137.7,421.9 139.2,422.2 140.7,422.4 142.2,422.8 143.7,422.4 145.2,422.3 146.7,423.0 148.2,422.9 149.7,423.9 151.2,423.4 152.7,423.5 154.2,423.2 155.7,424.0 157.2,423.8 158.7,424.5 160.2,424.5 161.7,424.0 163.2,424.5 164.7,423.5 166.2,424.3 167.7,425.1 169.2,425.0 170.7,424.9 172.2,424.9 173.7,424.5 175.2,424.6 176.7,425.2 178.2,425.9 179.7,424.6 181.2,425.6 182.7,425.7 184.2,425.9 185.7,425.4 187.2,425.6 188.7,425.9 190.2,425.6 191.7,425.6 193.2,425.8 194.7,426.2 196.2,426.4 197.7,426.4 199.2,426.5 200.7,426.3 202.2,426.3 203.7,427.0 205.2,426.7 206.7,426.7 208.2,427.1 209.7,427.3 211.2,427.4 212.7,427.1 214.2,432.2 215.7,427.3 217.2,427.3 218.7,427.8 220.2,427.4 221.7,427.6 223.2,427.4 224.7,427.9 226.2,426.7 227.7,427.6 229.2,427.8 230.7,427.2 232.2,428.4 233.7,427.6 235.2,427.6 236.7,427.3 238.2,428.1 239.7,427.9 241.2,427.6 242.7,427.9 244.2,428.1 245.7,428.4 247.2,428.1 248.7,427.7 250.2,427.9 251.7,427.3 253.2,427.9 254.7,428.4 256.2,428.4 257.7,428.2 259.2,428.2 260.7,428.9 262.2,428.4 263.7,428.7 265.2,428.5 266.7,428.2 268.2,429.0 269.7,428.0 271.2,428.1 272.7,428.4 274.2,428.3 275.7,428.4 277.2,428.4 278.7,429.0 280.2,428.7 281.7,428.8 283.2,428.1 284.7,428.4 286.2,429.1 287.7,428.4 289.2,429.2 290.7,428.5 292.2,429.0 293.7,428.6 295.2,429.0 296.7,428.6 298.2,428.9 299.7,429.6 301.2,428.9 302.7,429.7 304.2,428.9 305.7,428.7 307.2,429.1 308.7,429.0 310.2,429.8 311.7,429.5 313.2,429.6 314.7,429.5 316.2,430.1 317.7,429.6 319.2,429.5 320.7,429.1 322.2,429.0 323.7,429.5 325.2,429.8 326.7,429.8 328.2,429.1 329.7,429.7 331.2,429.6 332.7,429.1 334.2,429.7 335.7,428.8 337.2,429.7 338.7,430.4 340.2,429.2 341.7,429.6 343.2,429.0 344.7,429.4 346.2,429.9 347.7,429.3 349.2,429.7 350.7,429.6 352.2,429.6 353.7,429.8 355.2,429.9 356.7,430.2 358.2,430.0 359.7,429.6 361.2,430.3 362.7,430.2 364.2,429.3 365.7,430.1 367.2,430.1 368.7,430.2 370.2,430.0 371.7,429.4 373.2,429.8 374.7,429.2 376.2,429.9 377.7,430.6 379.2,430.2 380.7,430.2 382.2,429.8 383.7,429.6 385.2,429.6 386.7,430.0 388.2,429.7 389.7,429.8 391.2,430.4 392.7,429.5 394.2,429.6 395.7,429.9 397.2,430.1 398.7,430.1 400.2,430.1 401.7,430.1 403.2,430.2 404.7,430.2 406.2,430.2 407.7,430.2 409.2,430.2 410.7,430.2 412.2,430.2 413.7,430.2 415.2,430.3 416.7,430.3 418.2,430.3 419.7,430.3 421.2,430.3 422.7,430.3 424.2,430.3 425.7,430.3 427.2,430.4 428.7,430.4 430.2,430.4 431.7,430.4 433.2,430.4 434.7,430.4 436.2,430.4 437.7,430.4 439.2,430.4 440.7,430.4 442.2,430.5 443.7,430.5 445.2,430.5 446.7,430.5 448.2,430.5 449.7,430.5 451.2,430.5 452.7,430.5 454.2,430.5 455.7,430.5 457.2,430.6 458.7,430.6 460.2,430.6 461.7,430.6 463.2,430.6 464.7,430.6 466.2,430.6 467.7,430.6 469.2,430.6 470.7,430.7 472.2,430.7 473.7,430.7 475.2,430.7 476.7,430.7 478.2,430.7 479.7,430.7 481.2,430.7 482.7,430.7 484.2,430.7 485.7,430.8 487.2,430.8 488.7,430.8 490.2,430.8 491.7,430.8 493.2,430.8 494.7,430.8 496.2,430.8 497.7,430.8 499.2,430.9 500.7,430.9 502.2,430.9 503.7,430.9 505.2,430.9 506.7,430.9 508.2,430.9 509.7,430.9 511.2,430.9 512.7,430.9 514.2,431.0 515.7,431.0 517.2,431.0 518.7,431.0 520.2,431.0 521.7,431.0 523.2,431.0 524.7,431.0 526.2,431.0 527.7,431.0 529.2,431.0 530.7,431.0 532.2,431.0 533.7,431.0 535.2,431.0 536.7,431.0 538.2,431.1 539.7,431.1 541.2,431.1 542.7,431.1 544.2,431.1 545.7,431.1 547.2,431.1 548.7,431.1 550.2,431.1 551.7,431.1 553.2,431.1 554.7,431.1 556.2,431.1 557.7,431.1 559.2,431.1 560.7,431.1 562.2,431.1 563.7,431.1 565.2,431.1 566.7,431.1 568.2,431.1 569.7,431.1 571.2,431.1 572.7,431.1 574.2,431.2 575.7,431.2 577.2,431.2 578.7,431.2 580.2,431.2 581.7,431.2 583.2,431.2 584.7,431.2 586.2,431.2 587.7,431.2 589.2,431.2 590.7,431.2 592.2,431.2 593.7,431.2 595.2,431.2 596.7,431.2 598.2,431.2 599.7,431.2 601.2,431.2 602.7,431.2 604.2,431.2 605.7,431.2 607.2,431.2 608.7,431.2 610.2,431.3 611.7,431.3 613.2,431.3 614.7,431.3 616.2,431.3 617.7,431.3 619.2,431.3 620.7,431.3 622.2,431.3 623.7,431.3 625.2,431.3 626.7,431.3 628.2,431.3 629.7,431.3 631.2,431.3 632.7,431.3 634.2,431.3 635.7,431.3 637.2,431.3 638.7,431.3 640.2,431.3 641.7,431.3 643.2,431.3 644.7,431.3 646.2,431.4 647.7,431.4 649.2,431.4 650.7,431.4 652.2,431.4 653.7,431.4 655.2,431.4 656.7,431.4 658.2,431.4 659.7,431.4 661.2,431.4 662.7,431.4 664.2,431.4 665.7,431.4 667.2,431.4 668.7,431.4 670.2,431.4 671.7,431.4 673.2,431.4 674.7,431.4 676.2,431.4 677.7,431.4 679.2,431.4 680.7,431.4 682.2,431.5 683.7,431.5 685.2,431.5 686.7,431.5 688.2,431.5 689.7,431.5 691.2,431.5 692.7,431.5 694.2,431.5 695.7,431.5 697.2,431.5 698.7,431.5 700.2,431.5 701.7,431.5 703.2,431.5 704.7,431.5 706.2,431.5 707.7,431.5 709.2,431.5 710.7,431.5 712.2,431.5 713.7,431.5 715.2,431.5 716.7,431.5 718.2,431.5 719.7,431.5 721.2,431.5 722.7,431.5 724.2,431.5 725.7,431.5 727.2,431.5 728.7,431.5 730.2,431.5 731.7,431.5 733.2,431.5 734.7,431.5 736.2,431.5 737.7,431.5 739.2,431.5 740.7,431.5 742.2,431.5 743.7,431.5 745.2,431.5 746.7,431.5 748.2,431.5 749.7,431.5 751.2,431.5 752.7,431.5 754.2,431.5 755.7,431.5 757.2,431.5 758.7,431.5 760.2,431.5 761.7,431.5 763.2,431.5 764.7,431.5 766.2,431.5 767.7,431.5 769.2,431.5 770.7,431.5 772.2,431.5 773.7,431.5 775.2,431.5 776.7,431.5 778.2,431.5 779.7,431.5 781.2,431.5 782.7,431.5 784.2,431.5 785.7,431.5 787.2,431.5 788.7,431.5 790.2,431.5 791.7,431.5 793.2,431.5 794.7,431.5 796.2,431.5 797.7,431.5 799.2,431.5 800.7,431.6 802.2,431.6 803.7,431.6 805.2,431.6 806.7,431.6 808.2,431.6 809.7,431.6 811.2,431.6 812.7,431.6 814.2,431.6 815.7,431.6 817.2,431.6 818.7,431.6 820.2,431.6 821.7,431.6 823.2,431.6 824.7,431.6 826.2,431.6 827.7,431.6 829.2,431.6 830.7,431.6 832.2,431.6 833.7,431.6 835.2,431.6 836.7,431.6 838.2,431.6 839.7,431.6 841.2,431.6 842.7,431.6 844.2,431.6 845.7,431.6 847.2,431.6 848.7,431.6 850.2,431.6 851.7,431.6 853.2,431.6 854.7,431.6 856.2,431.6 857.7,431.6 859.2,431.6 860.7,431.6 862.2,431.6 863.7,431.6 865.2,431.6 866.7,431.6 868.2,431.6 869.7,431.6 871.2,431.6 872.7,431.6 874.2,431.6 875.7,431.6 877.2,431.6 878.7,431.6 880.2,431.6 881.7,431.6 883.2,431.6 884.7,431.6 886.2,431.6 887.7,431.6 889.2,431.6 890.7,431.6 892.2,431.6 893.7,431.6 895.2,431.6 896.7,431.6 898.2,431.6 899.7,431.6 901.2,431.6 902.7,431.6 904.2,431.6 905.7,431.6 907.2,431.6 908.7,431.6 910.2,431.6 911.7,431.6 913.2,431.6 914.7,431.6 916.2,431.6 917.7,431.6 919.2,431.6 920.7,431.6 922.2,431.6 923.7,431.6 925.2,431.6 926.7,431.6 928.2,431.6 929.7,431.6 931.2,431.6 932.7,431.6 934.2,431.6 935.7,431.6 937.2,431.6 938.7,431.6 940.2,431.6 941.7,431.6 943.2,431.6 944.7,431.6 946.2,431.6 947.7,431.6 949.2,431.6 950.7,431.6 952.2,431.6 953.7,431.6 955.2,431.6 956.7,431.6 958.2,431.6 959.7,431.6 961.2,431.6 962.7,431.6 964.2,431.6 965.7,431.6 967.2,431.6 968.7,431.6 970.2,431.6 971.7,431.6 973.2,431.6 974.7,431.6 976.2,431.6 977.7,431.6 979.2,431.6 980.7,431.6 982.2,431.6 983.7,431.6 985.2,431.6 986.7,431.6 988.2,431.6 989.7,431.6 991.2,431.6 992.7,431.6 994.2,431.6 995.7,431.6 997.2,431.6 998.7,431.6 1000.2,431.7 1001.7,431.7 1003.2,431.7 1004.7,431.7 1006.2,431.7 1007.7,431.7 1009.2,431.7 1010.7,431.7 1012.2,431.7 1013.7,431.7 1015.2,431.7 1016.7,431.7 1018.2,431.7 1019.7,431.7 1021.2,431.7 1022.7,431.7 1024.2,431.7 1025.7,431.7 1027.2,431.7 1028.7,431.7 1030.2,431.7 1031.7,431.7 1033.2,431.7 1034.7,431.7 1036.2,431.7 1037.7,431.7 1039.2,431.7 1040.7,431.7 1042.2,431.7 1043.7,431.7 1045.2,431.7 1046.7,431.7 1048.2,431.7 1049.7,431.7 1051.2,431.7 1052.7,431.7 1054.2,431.7 1055.7,431.7 1057.2,431.7 1058.7,431.7 1060.2,431.7 1061.7,431.7 1063.2,431.7 1064.7,431.7 1066.2,431.7 1067.7,431.7 1069.2,431.7 1070.7,431.7 1072.2,431.7 1073.7,431.7 1075.2,431.7 1076.7,431.7 1078.2,431.7 1079.7,431.7 1081.2,431.7 1082.7,431.7 1084.2,431.7 1085.7,431.7 1087.2,431.7 1088.7,431.7 1090.2,431.7 1091.7,431.7 1093.2,431.7 1094.7,431.7 1096.2,431.7 1097.7,431.7 1099.2,431.7 1100.7,431.7 1102.2,431.7 1103.7,431.7 1105.2,431.7 1106.7,431.7 1108.2,431.7 1109.7,431.7 1111.2,431.7 1112.7,431.7 1114.2,431.7 1115.7,431.7 1117.2,431.7 1118.7,431.7 1120.2,431.7 1121.7,431.7 1123.2,431.7 1124.7,431.7 1126.2,431.7 1127.7,431.7 1129.2,431.7 1130.7,431.7 1132.2,431.7 1133.7,431.7 1135.2,431.7 1136.7,431.7 1138.2,431.7 1139.7,431.7 1141.2,431.7 1142.7,431.7 1144.2,431.7 1145.7,431.7 1147.2,431.7 1148.7,431.7 1150.2,431.7 1151.7,431.7 1153.2,431.7 1154.7,431.7 1156.2,431.7 1157.7,431.7 1159.2,431.7 1160.7,431.7 1162.2,431.7 1163.7,431.7 1165.2,431.7 1166.7,431.7 1168.2,431.7 1169.7,431.7 1171.2,431.7 1172.7,431.7 1174.2,431.7 1175.7,431.7 1177.2,431.7 1178.7,431.7 1180.2,431.7 1181.7,431.7 1183.2,431.7 1184.7,431.7 1186.2,431.7 1187.7,431.7 1189.2,431.7 1190.7,431.7 1192.2,431.7 1193.7,431.7 1195.2,431.7 1196.7,431.7 1198.2,431.7 1199.7,431.8 1201.2,431.8 1202.7,431.8 1204.2,431.8 1205.7,431.8 1207.2,431.8 1208.7,431.8 1210.2,431.8 1211.7,431.8 1213.2,431.8 1214.7,431.8 1216.2,431.8 1217.7,431.8 1219.2,431.8 1220.7,431.8 1222.2,431.8 1223.7,431.8 1225.2,431.8 1226.7,431.8 1228.2,431.8 1229.7,431.8 1231.2,431.8 1232.7,431.8 1234.2,431.8 1235.7,431.8 1237.2,431.8 1238.7,431.8 1240.2,431.8 1241.7,431.8 1243.2,431.8 1244.7,431.8 1246.2,431.8 1247.7,431.8 1249.2,431.8 1250.7,431.8 1252.2,431.8 1253.7,431.8 1255.2,431.8 1256.7,431.8 1258.2,431.8 1259.7,431.8 1261.2,431.8 1262.7,431.8 1264.2,431.8 1265.7,431.8 1267.2,431.8 1268.7,431.8 1270.2,431.8 1271.7,431.8 1273.2,431.8 1274.7,431.8 1276.2,431.8 1277.7,431.8 1279.2,431.8 1280.7,431.8 1282.2,431.8 1283.7,431.8 1285.2,431.8 1286.7,431.8 1288.2,431.8 1289.7,431.8 1291.2,431.8 1292.7,431.8 1294.2,431.8 1295.7,431.8 1297.2,431.8 1298.7,431.8 1299.6,432.2"/>
<rect x="361" y="348.5" width="54.7" height="83.7" fill="#bfbf00"/>
<rect x="127.8" y="348.5" width="12.4" height="83.7" fill="url(#hatch)" stroke="#222" stroke-width="1"/>
<rect x="1259.2" y="348.5" width="6.1" height="83.7" fill="url(#hatch)" stroke="#222" stroke-width="1"/>
<line x1="388.6" y1="348.5" x2="388.6" y2="432.2" stroke="#000" stroke-width="1" stroke-dasharray="2,2"/>
<line x1="465.1" y1="348.5" x2="465.1" y2="432.2" stroke="#555" stroke-width="1.3" stroke-dasharray="4,2.5"/>
<line x1="534.6" y1="348.5" x2="534.6" y2="432.2" stroke="#555" stroke-width="1.3" stroke-dasharray="4,2.5"/>
<polyline fill="none" stroke="#0000ff" stroke-width="1.2" stroke-linejoin="round" points="102.3,406.6 104.0,398.6 105.1,427.1 107.4,403.1 108.9,423.1 110.1,386.6 112.3,416.3 114.6,394.6 116.0,407.7 117.1,401.4 121.1,415.1 124.0,401.4 128.0,416.3 130.3,396.3 132.6,423.7 136.8,392.3 140.0,420.3 141.7,391.1 145.1,419.1 147.4,395.1 148.9,425.4 150.3,398.6 153.2,409.5 156.0,420.3 157.7,412.9 160.0,414.6 161.7,405.4 162.9,415.7 164.0,399.7 166.3,413.4 168.0,395.1 169.7,407.7 172.0,392.3 175.4,423.7 177.1,396.9 179.4,414.6 181.7,415.1 185.1,403.1 187.4,413.4 189.1,400.3 191.4,413.4 194.3,422.6 197.1,403.1 199.2,416.9 201.7,397.4 203.4,407.1 204.6,404.3 207.4,422.0 210.9,405.4 212.6,411.6 216.6,397.4 219.4,400.3 222.9,416.3 224.6,402.6 226.9,412.3 230.3,404.3 232.6,416.9 236.0,403.1 239.4,398.0 241.7,413.4 243.4,399.7 245.1,420.3 248.6,401.4 251.4,411.7 254.3,422.0 257.9,417.6 259.6,403.9 263.0,428.4 265.3,414.1 267.6,406.1 269.9,413.0 273.3,390.1 275.0,400.4 279.0,418.7 282.4,407.3 284.1,421.0 286.4,406.1 288.7,408.4 290.4,392.4 292.1,403.9 293.3,392.4 295.6,415.3 298.4,402.7 300.7,407.3 303.0,397.0 305.3,407.3 307.6,408.4 309.3,397.0 312.1,394.1 313.9,403.9 315.6,408.4 317.9,399.3 320.1,402.7 321.9,396.4 324.7,407.3 328.1,402.5 331.6,397.6 334.4,418.6 336.1,403.9 339.0,401.6 340.5,414.1 343.6,400.4 346.4,391.3 349.9,407.3 353.3,398.1 355.6,399.3 359.0,417.0 362.4,405.6 364.7,410.7 367.6,419.9 369.3,402.1 372.7,402.7 375.6,411.9 378.4,402.7 380.7,403.9 384.1,407.3 387.6,393.6 389.9,390.7 392.7,406.1 395.0,401.6 399.0,409.0 400.0,406.7 404.0,395.3 408.0,399.9 410.3,406.7 413.1,411.5 416.0,416.4 418.3,414.1 420.6,424.4 422.3,416.4 425.1,410.4 428.0,404.4 430.3,412.4 432.0,401.0 436.0,411.9 438.9,405.6 441.4,409.6 444.0,413.6 445.7,409.0 449.1,407.9 451.4,410.7 454.9,404.1 458.3,397.6 461.7,405.6 465.1,392.4 467.4,401.0 469.1,394.7 472.0,395.9 475.4,406.7 478.9,413.5 482.3,420.4 486.9,413.6 489.1,403.3 491.7,398.5 494.3,393.6 497.1,397.0 500.6,413.6 504.6,414.1 507.8,403.0 510.9,391.9 514.3,387.3 517.7,384.4 520.5,385.9 523.4,387.3 525.7,387.9 528.3,385.0 530.9,382.1 534.9,375.9 537.1,380.4 539.4,378.1 541.7,387.3 546.3,379.3 549.7,390.1 553.1,383.9 557.3,386.7 559.6,382.1 562.4,390.7 565.3,384.4 566.4,388.4 568.1,383.9 570.4,389.0 572.7,381.6 575.6,377.6 579.0,379.3 581.9,387.9 584.1,388.4 587.0,392.4 589.9,381.0 592.7,383.9 595.0,384.4 597.3,389.0 600.1,385.0 603.0,390.1 606.4,381.6 609.9,389.6 612.7,385.6 615.3,388.3 617.9,390.1 621.3,384.4 624.1,380.4 626.4,383.9 628.7,395.3 631.0,390.7 633.9,383.9 636.1,389.0 638.4,384.4 641.9,381.6 646.4,391.3 651.0,378.1 653.9,378.1 656.7,381.6 659.6,373.6 661.9,388.4 664.1,394.1 667.0,383.9 669.3,380.4 672.1,377.0 674.4,379.9 679.0,390.1 681.3,382.1 684.1,383.3 687.0,378.7 691.0,391.3 693.9,385.0 696.7,373.6 699.0,383.9 703.0,390.7 704.7,380.4 709.3,397.6 712.7,393.6 715.0,393.0 717.3,382.7 720.1,373.6 724.1,388.4 727.6,372.4 730.2,376.9 732.7,382.7 734.4,383.9 737.3,373.0 740.1,378.1 742.4,374.1 747.0,371.9 749.9,376.4 751.6,373.0 754.4,379.3 757.5,386.5 760.7,387.9 765.3,375.3 769.9,376.4 773.9,381.6 777.3,372.4 779.0,374.1 783.0,369.6 786.4,371.3 790.4,375.3 793.9,367.3 796.1,374.1 799.6,365.0 801.9,367.3 805.3,375.3 808.7,377.0 810.4,367.3 813.3,366.7 815.6,367.3 817.3,353.0 819.0,364.4 820.1,374.7 821.9,363.3 824.8,365.2 827.6,370.7 829.3,363.3 830.4,369.0 833.3,362.7 837.3,354.7 841.9,371.3 845.9,362.7 848.5,369.1 851.0,374.1 854.4,366.1 857.3,367.3 859.6,359.9 862.9,367.3 865.9,367.9 868.1,362.7 871.5,362.5 875.0,362.7 877.3,357.6 879.0,365.0 883.6,369.0 886.4,362.1 889.9,366.7 892.1,361.0 894.4,363.3 897.3,369.0 901.9,357.6 904.1,365.0 907.6,356.4 912.1,365.0 913.9,359.3 918.4,365.6 921.3,369.6 924.5,367.5 927.6,366.1 931.0,357.6 934.1,367.0 937.3,374.1 940.7,365.0 944.1,371.9 947.0,363.9 951.0,365.6 955.0,362.1 957.9,366.7 960.5,361.9 963.0,361.0 965.3,365.6 969.3,355.9 973.9,367.3 977.9,361.0 980.8,358.5 983.6,358.1 987.6,363.9 990.4,360.4 993.5,364.6 996.7,369.0 1000.7,361.0 1003.5,362.1 1006.4,359.3 1009.9,361.6 1013.3,357.6 1017.3,361.0 1019.0,357.0 1023.0,363.9 1025.9,354.1 1029.3,353.6 1033.3,361.0 1035.0,361.6 1037.5,359.7 1040.1,357.6 1043.0,366.1 1045.9,361.6 1048.1,357.6 1052.1,363.9 1055.6,377.0 1059.6,365.0 1062.4,370.1 1065.3,360.4 1069.3,360.4 1071.6,366.7 1074.4,366.1 1078.4,352.4 1081.3,363.9 1083.6,357.6 1087.6,362.1 1091.6,369.6 1093.9,365.6 1097.3,354.7 1100.7,354.1 1103.0,369.6 1105.5,362.3 1108.1,353.0 1111.5,355.8 1115.0,362.7 1117.5,358.2 1120.1,356.4 1122.4,361.6 1125.6,360.7 1128.7,357.6 1132.1,366.1 1136.1,364.4 1138.4,358.1 1141.6,363.4 1144.7,370.1 1147.0,363.9 1149.9,371.9 1153.9,367.3 1156.1,370.7 1160.1,362.7 1164.1,363.9 1167.0,370.1 1169.3,361.0 1173.3,367.3 1176.7,357.6 1179.6,356.4 1182.4,368.4 1187.0,361.0 1190.0,367.3 1193.1,370.9 1197.3,361.0 1200.0,366.2 1202.6,369.9 1205.2,363.1 1207.8,365.7 1211.0,365.7 1213.6,362.6 1217.3,367.8 1221.0,375.7 1225.1,361.5 1227.8,368.3 1230.4,364.7 1235.1,372.0 1239.3,367.3 1241.4,361.0 1243.5,370.4 1245.6,382.5 1249.3,380.9 1252.4,372.5 1254.0,376.2 1256.6,376.2 1258.2,367.3 1261.3,371.5 1264.5,361.0 1267.3,367.5 1270.2,374.1 1275.0,359.4 1278.1,362.0 1282.3,368.3 1286.0,359.9 1287.6,366.7 1289.7,355.7 1292.8,358.9 1294.9,357.3 1299.6,357.3"/>
<rect x="101.7" y="348.5" width="1197.9" height="83.7" fill="none" stroke="#333" stroke-width="1.1"/>
<line x1="98.2" y1="413.9" x2="101.7" y2="413.9" stroke="#333" stroke-width="1"/>
<line x1="98.2" y1="392.2" x2="101.7" y2="392.2" stroke="#333" stroke-width="1"/>
<line x1="98.2" y1="370.6" x2="101.7" y2="370.6" stroke="#333" stroke-width="1"/>
<line x1="107.5" y1="432.2" x2="107.5" y2="435.7" stroke="#333" stroke-width="1"/>
<line x1="166.3" y1="432.2" x2="166.3" y2="435.7" stroke="#333" stroke-width="1"/>
<line x1="225.2" y1="432.2" x2="225.2" y2="435.7" stroke="#333" stroke-width="1"/>
<line x1="284.0" y1="432.2" x2="284.0" y2="435.7" stroke="#333" stroke-width="1"/>
<line x1="342.9" y1="432.2" x2="342.9" y2="435.7" stroke="#333" stroke-width="1"/>
<line x1="401.7" y1="432.2" x2="401.7" y2="435.7" stroke="#333" stroke-width="1"/>
<line x1="460.5" y1="432.2" x2="460.5" y2="435.7" stroke="#333" stroke-width="1"/>
<line x1="519.4" y1="432.2" x2="519.4" y2="435.7" stroke="#333" stroke-width="1"/>
<line x1="578.2" y1="432.2" x2="578.2" y2="435.7" stroke="#333" stroke-width="1"/>
<line x1="637.1" y1="432.2" x2="637.1" y2="435.7" stroke="#333" stroke-width="1"/>
<line x1="695.9" y1="432.2" x2="695.9" y2="435.7" stroke="#333" stroke-width="1"/>
<line x1="754.7" y1="432.2" x2="754.7" y2="435.7" stroke="#333" stroke-width="1"/>
<line x1="813.6" y1="432.2" x2="813.6" y2="435.7" stroke="#333" stroke-width="1"/>
<line x1="872.4" y1="432.2" x2="872.4" y2="435.7" stroke="#333" stroke-width="1"/>
<line x1="931.3" y1="432.2" x2="931.3" y2="435.7" stroke="#333" stroke-width="1"/>
<line x1="990.1" y1="432.2" x2="990.1" y2="435.7" stroke="#333" stroke-width="1"/>
<line x1="1048.9" y1="432.2" x2="1048.9" y2="435.7" stroke="#333" stroke-width="1"/>
<line x1="1107.8" y1="432.2" x2="1107.8" y2="435.7" stroke="#333" stroke-width="1"/>
<line x1="1166.6" y1="432.2" x2="1166.6" y2="435.7" stroke="#333" stroke-width="1"/>
<line x1="1225.5" y1="432.2" x2="1225.5" y2="435.7" stroke="#333" stroke-width="1"/>
<line x1="1284.3" y1="432.2" x2="1284.3" y2="435.7" stroke="#333" stroke-width="1"/>
<rect x="479.9" y="449.9" width="17.2" height="6.5" fill="#ff0000"/>
<rect x="533.7" y="449.9" width="17.2" height="6.5" fill="#008000"/>
<rect x="586.0" y="449.9" width="17.2" height="6.5" fill="#8a2be2"/>
<rect x="641.3" y="449.9" width="17.2" height="6.5" fill="#800080"/>
<rect x="693.5" y="449.9" width="17.2" height="6.5" fill="#ff00ff"/>
<rect x="748.7" y="449.9" width="17.2" height="6.5" fill="#ffa500"/>
<rect x="803.5" y="449.9" width="17.2" height="6.5" fill="#87ceeb"/>
<rect x="869.3" y="449.9" width="17.2" height="6.5" fill="#87ceeb"/>
<text x="320.7" y="-156.4" transform="rotate(90)" font-family="Liberation Sans" font-size="10.5" fill="#8a2be2">SiIV</text>
<path d="M155.4 347.3q0 -1.6 1.6 -1.6h1.6q1.4 0 1.4 -1.4q0 1.4 1.4 1.4h1.6q1.6 0 1.6 1.6" fill="none" stroke="#8a2be2" stroke-width="0.9"/>
<text x="323.0" y="-242.4" transform="rotate(90)" font-family="Liberation Sans" font-size="10.5" fill="#87ceeb">OII</text>
<path d="M241.4 347.3q0 -1.6 1.6 -1.6h1.6q1.4 0 1.4 -1.4q0 1.4 1.4 1.4h1.6q1.6 0 1.6 1.6" fill="none" stroke="#87ceeb" stroke-width="0.9"/>
<text x="320.0" y="-255.4" transform="rotate(90)" font-family="Liberation Sans" font-size="10.5" fill="#ffa500">CIV</text>
<path d="M254.4 347.3q0 -1.6 1.6 -1.6h1.6q1.4 0 1.4 -1.4q0 1.4 1.4 1.4h1.6q1.6 0 1.6 1.6" fill="none" stroke="#ffa500" stroke-width="0.9"/>
<text x="323.0" y="-263.4" transform="rotate(90)" font-family="Liberation Sans" font-size="10.5" fill="#87ceeb">OII</text>
<path d="M262.4 347.3q0 -1.6 1.6 -1.6h1.6q1.4 0 1.4 -1.4q0 1.4 1.4 1.4h1.6q1.6 0 1.6 1.6" fill="none" stroke="#87ceeb" stroke-width="0.9"/>
<text x="320.2" y="-434.4" transform="rotate(90)" font-family="Liberation Sans" font-size="10.5" fill="#ff0000">NV</text>
<path d="M433.4 347.3q0 -1.6 1.6 -1.6h1.6q1.4 0 1.4 -1.4q0 1.4 1.4 1.4h1.6q1.6 0 1.6 1.6" fill="none" stroke="#ff0000" stroke-width="0.9"/>
<text x="327.4" y="-464.1" transform="rotate(90)" font-family="Liberation Sans" font-size="10.5" fill="#87ceeb">Hδ</text>
<path d="M463.1 347.3q0 -1.6 1.6 -1.6h1.6q1.4 0 1.4 -1.4q0 1.4 1.4 1.4h1.6q1.6 0 1.6 1.6" fill="none" stroke="#87ceeb" stroke-width="0.9"/>
<text x="325.4" y="-477.3" transform="rotate(90)" font-family="Liberation Sans" font-size="10.5" fill="#ff0000">SiII</text>
<path d="M476.3 347.3q0 -1.6 1.6 -1.6h1.6q1.4 0 1.4 -1.4q0 1.4 1.4 1.4h1.6q1.6 0 1.6 1.6" fill="none" stroke="#ff0000" stroke-width="0.9"/>
<text x="320.9" y="-523.5" transform="rotate(90)" font-family="Liberation Sans" font-size="10.5" fill="#8a2be2">HeII</text>
<path d="M522.5 347.3q0 -1.6 1.6 -1.6h1.6q1.4 0 1.4 -1.4q0 1.4 1.4 1.4h1.6q1.6 0 1.6 1.6" fill="none" stroke="#8a2be2" stroke-width="0.9"/>
<text x="327.8" y="-605.0" transform="rotate(90)" font-family="Liberation Sans" font-size="10.5" fill="#87ceeb">Hγ</text>
<path d="M604.0 347.3q0 -1.6 1.6 -1.6h1.6q1.4 0 1.4 -1.4q0 1.4 1.4 1.4h1.6q1.6 0 1.6 1.6" fill="none" stroke="#87ceeb" stroke-width="0.9"/>
<text x="327.8" y="-626.4" transform="rotate(90)" font-family="Liberation Sans" font-size="10.5" fill="#87ceeb">Hγ</text>
<path d="M625.4 347.3q0 -1.6 1.6 -1.6h1.6q1.4 0 1.4 -1.4q0 1.4 1.4 1.4h1.6q1.6 0 1.6 1.6" fill="none" stroke="#87ceeb" stroke-width="0.9"/>
<text x="321.0" y="-736.3" transform="rotate(90)" font-family="Liberation Sans" font-size="10.5" fill="#ff0000">SiIV</text>
<path d="M735.3 347.3q0 -1.6 1.6 -1.6h1.6q1.4 0 1.4 -1.4q0 1.4 1.4 1.4h1.6q1.6 0 1.6 1.6" fill="none" stroke="#ff0000" stroke-width="0.9"/>
<text x="282.1" y="-768.6" transform="rotate(90)" font-family="Liberation Sans" font-size="10.5" fill="#ffa500">CIII</text>
<path d="M767.6 304.3q0 -1.6 1.6 -1.6h1.6q1.4 0 1.4 -1.4q0 1.4 1.4 1.4h1.6q1.6 0 1.6 1.6" fill="none" stroke="#ffa500" stroke-width="0.9"/>
<text x="327.8" y="-768.6" transform="rotate(90)" font-family="Liberation Sans" font-size="10.5" fill="#008000">Hγ</text>
<path d="M767.6 347.3q0 -1.6 1.6 -1.6h1.6q1.4 0 1.4 -1.4q0 1.4 1.4 1.4h1.6q1.6 0 1.6 1.6" fill="none" stroke="#008000" stroke-width="0.9"/>
<text x="324.0" y="-894.9" transform="rotate(90)" font-family="Liberation Sans" font-size="10.5" fill="#800080">CII</text>
<path d="M893.9 347.3q0 -1.6 1.6 -1.6h1.6q1.4 0 1.4 -1.4q0 1.4 1.4 1.4h1.6q1.6 0 1.6 1.6" fill="none" stroke="#800080" stroke-width="0.9"/>
<text x="327.8" y="-911.9" transform="rotate(90)" font-family="Liberation Sans" font-size="10.5" fill="#87ceeb">Hβ</text>
<path d="M910.9 347.3q0 -1.6 1.6 -1.6h1.6q1.4 0 1.4 -1.4q0 1.4 1.4 1.4h1.6q1.6 0 1.6 1.6" fill="none" stroke="#87ceeb" stroke-width="0.9"/>
<text x="323.9" y="-928.4" transform="rotate(90)" font-family="Liberation Sans" font-size="10.5" fill="#8a2be2">CIII</text>
<path d="M927.4 347.3q0 -1.6 1.6 -1.6h1.6q1.4 0 1.4 -1.4q0 1.4 1.4 1.4h1.6q1.6 0 1.6 1.6" fill="none" stroke="#8a2be2" stroke-width="0.9"/>
<text x="327.8" y="-937.9" transform="rotate(90)" font-family="Liberation Sans" font-size="10.5" fill="#87ceeb">Hβ</text>
<path d="M936.9 347.3q0 -1.6 1.6 -1.6h1.6q1.4 0 1.4 -1.4q0 1.4 1.4 1.4h1.6q1.6 0 1.6 1.6" fill="none" stroke="#87ceeb" stroke-width="0.9"/>
<text x="323.4" y="-969.7" transform="rotate(90)" font-family="Liberation Sans" font-size="10.5" fill="#87ceeb">OIII</text>
<path d="M968.7 347.3q0 -1.6 1.6 -1.6h1.6q1.4 0 1.4 -1.4q0 1.4 1.4 1.4h1.6q1.6 0 1.6 1.6" fill="none" stroke="#87ceeb" stroke-width="0.9"/>
<text x="281.0" y="-998.1" transform="rotate(90)" font-family="Liberation Sans" font-size="10.5" fill="#87ceeb">OIII</text>
<path d="M997.1 304.3q0 -1.6 1.6 -1.6h1.6q1.4 0 1.4 -1.4q0 1.4 1.4 1.4h1.6q1.6 0 1.6 1.6" fill="none" stroke="#87ceeb" stroke-width="0.9"/>
<text x="323.4" y="-996.4" transform="rotate(90)" font-family="Liberation Sans" font-size="10.5" fill="#87ceeb">OIII</text>
<path d="M995.4 347.3q0 -1.6 1.6 -1.6h1.6q1.4 0 1.4 -1.4q0 1.4 1.4 1.4h1.6q1.6 0 1.6 1.6" fill="none" stroke="#87ceeb" stroke-width="0.9"/>
<text x="281.0" y="-1024.3" transform="rotate(90)" font-family="Liberation Sans" font-size="10.5" fill="#87ceeb">OIII</text>
<path d="M1023.3 304.3q0 -1.6 1.6 -1.6h1.6q1.4 0 1.4 -1.4q0 1.4 1.4 1.4h1.6q1.6 0 1.6 1.6" fill="none" stroke="#87ceeb" stroke-width="0.9"/>
<text x="320.5" y="-1028.0" transform="rotate(90)" font-family="Liberation Sans" font-size="10.5" fill="#ff0000">CIV</text>
<path d="M1027.0 347.3q0 -1.6 1.6 -1.6h1.6q1.4 0 1.4 -1.4q0 1.4 1.4 1.4h1.6q1.6 0 1.6 1.6" fill="none" stroke="#ff0000" stroke-width="0.9"/>
<text x="327.9" y="-1097.8" transform="rotate(90)" font-family="Liberation Sans" font-size="10.5" fill="#008000">Hβ</text>
<path d="M1096.8 347.3q0 -1.6 1.6 -1.6h1.6q1.4 0 1.4 -1.4q0 1.4 1.4 1.4h1.6q1.6 0 1.6 1.6" fill="none" stroke="#008000" stroke-width="0.9"/>
<text x="281.4" y="-1162.8" transform="rotate(90)" font-family="Liberation Sans" font-size="10.5" fill="#ff00ff">OII</text>
<path d="M1161.8 304.3q0 -1.6 1.6 -1.6h1.6q1.4 0 1.4 -1.4q0 1.4 1.4 1.4h1.6q1.6 0 1.6 1.6" fill="none" stroke="#ff00ff" stroke-width="0.9"/>
<text x="323.6" y="-1159.0" transform="rotate(90)" font-family="Liberation Sans" font-size="10.5" fill="#008000">OIII</text>
<path d="M1158.0 347.3q0 -1.6 1.6 -1.6h1.6q1.4 0 1.4 -1.4q0 1.4 1.4 1.4h1.6q1.6 0 1.6 1.6" fill="none" stroke="#008000" stroke-width="0.9"/>
<text x="323.6" y="-1189.3" transform="rotate(90)" font-family="Liberation Sans" font-size="10.5" fill="#008000">OIII</text>
<path d="M1188.3 347.3q0 -1.6 1.6 -1.6h1.6q1.4 0 1.4 -1.4q0 1.4 1.4 1.4h1.6q1.6 0 1.6 1.6" fill="none" stroke="#008000" stroke-width="0.9"/>
<text x="320.7" y="-1203.5" transform="rotate(90)" font-family="Liberation Sans" font-size="10.5" fill="#ff0000">HeII</text>
<path d="M1202.5 347.3q0 -1.6 1.6 -1.6h1.6q1.4 0 1.4 -1.4q0 1.4 1.4 1.4h1.6q1.6 0 1.6 1.6" fill="none" stroke="#ff0000" stroke-width="0.9"/>
<path fill="#e4e4e4" d="M70.3 532.9h16.94v4.611h-16.94zM103.2 532.9h25.17v4.611h-25.17zM70.3 537h4.611v4.611h-4.611zM115.5 537h16.94v4.611h-16.94zM123.7 541.1h12.83v4.611h-12.83zM127.9 545.2h12.83v4.611h-12.83zM132 549.3h12.83v4.611h-12.83zM136.1 553.5h12.83v4.611h-12.83zM140.2 557.6h8.722v4.611h-8.722zM140.2 561.7h12.83v4.611h-12.83zM144.3 565.8h8.722v4.611h-8.722zM144.3 569.9h8.722v4.611h-8.722zM148.4 574h8.722v4.611h-8.722zM148.4 578.1h8.722v4.611h-8.722zM148.4 582.2h8.722v4.611h-8.722zM148.4 586.3h8.722v4.611h-8.722zM152.5 590.5h8.722v4.611h-8.722zM152.5 594.6h8.722v4.611h-8.722zM152.5 598.7h8.722v4.611h-8.722zM152.5 602.8h8.722v4.611h-8.722zM152.5 606.9h8.722v4.611h-8.722zM152.5 611h8.722v4.611h-8.722zM152.5 615.1h8.722v4.611h-8.722zM148.4 619.2h8.722v4.611h-8.722zM148.4 623.3h8.722v4.611h-8.722zM148.4 627.5h8.722v4.611h-8.722zM144.3 631.6h12.83v4.611h-12.83zM144.3 635.7h8.722v4.611h-8.722zM144.3 639.8h8.722v4.611h-8.722zM140.2 643.9h8.722v4.611h-8.722zM136.1 648h12.83v4.611h-12.83zM136.1 652.1h8.722v4.611h-8.722zM132 656.2h12.83v4.611h-12.83zM127.9 660.3h12.83v4.611h-12.83zM119.6 664.5h16.94v4.611h-16.94zM70.3 668.6h8.722v4.611h-8.722zM111.4 668.6h21.06v4.611h-21.06zM70.3 672.7h58.06v4.611h-58.06zM70.3 676.8h49.83v4.611h-49.83z"/>
<path fill="#dedede" d="M86.74 532.9h16.94v4.611h-16.94zM74.41 537h41.61v4.611h-41.61zM70.3 541.1h53.94v4.611h-53.94zM70.3 545.2h8.722v4.611h-8.722zM111.4 545.2h16.94v4.611h-16.94zM119.6 549.3h12.83v4.611h-12.83zM123.7 553.5h12.83v4.611h-12.83zM127.9 557.6h12.83v4.611h-12.83zM132 561.7h8.722v4.611h-8.722zM136.1 565.8h8.722v4.611h-8.722zM136.1 569.9h8.722v4.611h-8.722zM140.2 574h8.722v4.611h-8.722zM140.2 578.1h8.722v4.611h-8.722zM144.3 582.2h4.611v4.611h-4.611zM144.3 586.3h4.611v4.611h-4.611zM144.3 590.5h8.722v4.611h-8.722zM144.3 594.6h8.722v4.611h-8.722zM144.3 598.7h8.722v4.611h-8.722zM144.3 602.8h8.722v4.611h-8.722zM144.3 606.9h8.722v4.611h-8.722zM144.3 611h8.722v4.611h-8.722zM144.3 615.1h8.722v4.611h-8.722zM144.3 619.2h4.611v4.611h-4.611zM144.3 623.3h4.611v4.611h-4.611zM140.2 627.5h8.722v4.611h-8.722zM140.2 631.6h4.611v4.611h-4.611zM136.1 635.7h8.722v4.611h-8.722zM136.1 639.8h8.722v4.611h-8.722zM132 643.9h8.722v4.611h-8.722zM127.9 648h8.722v4.611h-8.722zM123.7 652.1h12.83v4.611h-12.83zM119.6 656.2h12.83v4.611h-12.83zM70.3 660.3h8.722v4.611h-8.722zM111.4 660.3h16.94v4.611h-16.94zM70.3 664.5h49.83v4.611h-49.83zM78.52 668.6h33.39v4.611h-33.39z"/>
<path fill="#e9e9e9" d="M127.9 532.9h16.94v4.611h-16.94zM132 537h16.94v4.611h-16.94zM136.1 541.1h16.94v4.611h-16.94zM140.2 545.2h12.83v4.611h-12.83zM144.3 549.3h12.83v4.611h-12.83zM148.4 553.5h12.83v4.611h-12.83zM148.4 557.6h12.83v4.611h-12.83zM152.5 561.7h8.722v4.611h-8.722zM152.5 565.8h12.83v4.611h-12.83zM152.5 569.9h12.83v4.611h-12.83zM156.6 574h8.722v4.611h-8.722zM156.6 578.1h12.83v4.611h-12.83zM156.6 582.2h12.83v4.611h-12.83zM156.6 586.3h12.83v4.611h-12.83zM160.7 590.5h8.722v4.611h-8.722zM160.7 594.6h8.722v4.611h-8.722zM160.7 598.7h8.722v4.611h-8.722zM160.7 602.8h8.722v4.611h-8.722zM160.7 606.9h8.722v4.611h-8.722zM160.7 611h8.722v4.611h-8.722zM160.7 615.1h8.722v4.611h-8.722zM156.6 619.2h12.83v4.611h-12.83zM156.6 623.3h12.83v4.611h-12.83zM156.6 627.5h12.83v4.611h-12.83zM156.6 631.6h8.722v4.611h-8.722zM152.5 635.7h12.83v4.611h-12.83zM152.5 639.8h12.83v4.611h-12.83zM148.4 643.9h12.83v4.611h-12.83zM148.4 648h12.83v4.611h-12.83zM144.3 652.1h12.83v4.611h-12.83zM144.3 656.2h12.83v4.611h-12.83zM140.2 660.3h12.83v4.611h-12.83zM136.1 664.5h16.94v4.611h-16.94zM132 668.6h16.94v4.611h-16.94zM127.9 672.7h16.94v4.611h-16.94zM119.6 676.8h21.06v4.611h-21.06z"/>
<path fill="#efefef" d="M144.3 532.9h21.06v4.611h-21.06zM148.4 537h16.94v4.611h-16.94zM152.5 541.1h16.94v4.611h-16.94zM152.5 545.2h21.06v4.611h-21.06zM156.6 549.3h16.94v4.611h-16.94zM160.7 553.5h12.83v4.611h-12.83zM160.7 557.6h16.94v4.611h-16.94zM160.7 561.7h16.94v4.611h-16.94zM164.9 565.8h12.83v4.611h-12.83zM164.9 569.9h16.94v4.611h-16.94zM164.9 574h16.94v4.611h-16.94zM169 578.1h12.83v4.611h-12.83zM169 582.2h12.83v4.611h-12.83zM169 586.3h12.83v4.611h-12.83zM169 590.5h12.83v4.611h-12.83zM169 594.6h16.94v4.611h-16.94zM169 598.7h16.94v4.611h-16.94zM169 602.8h16.94v4.611h-16.94zM169 606.9h16.94v4.611h-16.94zM169 611h16.94v4.611h-16.94zM169 615.1h12.83v4.611h-12.83zM169 619.2h12.83v4.611h-12.83zM169 623.3h12.83v4.611h-12.83zM169 627.5h12.83v4.611h-12.83zM164.9 631.6h16.94v4.611h-16.94zM164.9 635.7h16.94v4.611h-16.94zM164.9 639.8h12.83v4.611h-12.83zM160.7 643.9h16.94v4.611h-16.94zM160.7 648h16.94v4.611h-16.94zM156.6 652.1h16.94v4.611h-16.94zM156.6 656.2h16.94v4.611h-16.94zM152.5 660.3h16.94v4.611h-16.94zM152.5 664.5h16.94v4.611h-16.94zM148.4 668.6h16.94v4.611h-16.94zM144.3 672.7h21.06v4.611h-21.06zM140.2 676.8h21.06v4.611h-21.06z"/>
<path fill="#f4f4f4" d="M164.9 532.9h33.39v4.611h-33.39zM164.9 537h33.39v4.611h-33.39zM169 541.1h33.39v4.611h-33.39zM173.1 545.2h29.28v4.611h-29.28zM173.1 549.3h29.28v4.611h-29.28zM173.1 553.5h33.39v4.611h-33.39zM177.2 557.6h29.28v4.611h-29.28zM177.2 561.7h29.28v4.611h-29.28zM177.2 565.8h29.28v4.611h-29.28zM181.3 569.9h29.28v4.611h-29.28zM181.3 574h29.28v4.611h-29.28zM181.3 578.1h29.28v4.611h-29.28zM181.3 582.2h29.28v4.611h-29.28zM181.3 586.3h29.28v4.611h-29.28zM181.3 590.5h29.28v4.611h-29.28zM185.4 594.6h25.17v4.611h-25.17zM185.4 598.7h25.17v4.611h-25.17zM185.4 602.8h25.17v4.611h-25.17zM185.4 606.9h25.17v4.611h-25.17zM185.4 611h25.17v4.611h-25.17zM181.3 615.1h29.28v4.611h-29.28zM181.3 619.2h29.28v4.611h-29.28zM181.3 623.3h29.28v4.611h-29.28zM181.3 627.5h29.28v4.611h-29.28zM181.3 631.6h29.28v4.611h-29.28zM181.3 635.7h29.28v4.611h-29.28zM177.2 639.8h29.28v4.611h-29.28zM177.2 643.9h29.28v4.611h-29.28zM177.2 648h29.28v4.611h-29.28zM173.1 652.1h33.39v4.611h-33.39zM173.1 656.2h29.28v4.611h-29.28zM169 660.3h33.39v4.611h-33.39zM169 664.5h33.39v4.611h-33.39zM164.9 668.6h33.39v4.611h-33.39zM164.9 672.7h33.39v4.611h-33.39zM160.7 676.8h33.39v4.611h-33.39z"/>
<path fill="#fafafa" d="M197.7 532.9h21.06v4.611h-21.06zM197.7 537h21.06v4.611h-21.06zM201.9 541.1h16.94v4.611h-16.94zM201.9 545.2h16.94v4.611h-16.94zM201.9 549.3h16.94v4.611h-16.94zM206 553.5h12.83v4.611h-12.83zM206 557.6h12.83v4.611h-12.83zM206 561.7h12.83v4.611h-12.83zM206 565.8h12.83v4.611h-12.83zM210.1 569.9h8.722v4.611h-8.722zM210.1 574h8.722v4.611h-8.722zM210.1 578.1h8.722v4.611h-8.722zM210.1 582.2h8.722v4.611h-8.722zM210.1 586.3h8.722v4.611h-8.722zM210.1 590.5h8.722v4.611h-8.722zM210.1 594.6h8.722v4.611h-8.722zM210.1 598.7h8.722v4.611h-8.722zM210.1 602.8h8.722v4.611h-8.722zM210.1 606.9h8.722v4.611h-8.722zM210.1 611h8.722v4.611h-8.722zM210.1 615.1h8.722v4.611h-8.722zM210.1 619.2h8.722v4.611h-8.722zM210.1 623.3h8.722v4.611h-8.722zM210.1 627.5h8.722v4.611h-8.722zM210.1 631.6h8.722v4.611h-8.722zM210.1 635.7h8.722v4.611h-8.722zM206 639.8h12.83v4.611h-12.83zM206 643.9h12.83v4.611h-12.83zM206 648h12.83v4.611h-12.83zM206 652.1h12.83v4.611h-12.83zM201.9 656.2h16.94v4.611h-16.94zM201.9 660.3h16.94v4.611h-16.94zM201.9 664.5h16.94v4.611h-16.94zM197.7 668.6h21.06v4.611h-21.06zM197.7 672.7h21.06v4.611h-21.06zM193.6 676.8h25.17v4.611h-25.17z"/>
<path fill="#d9d9d9" d="M78.52 545.2h33.39v4.611h-33.39zM70.3 549.3h16.94v4.611h-16.94zM103.2 549.3h16.94v4.611h-16.94zM70.3 553.5h4.611v4.611h-4.611zM115.5 553.5h8.722v4.611h-8.722zM119.6 557.6h8.722v4.611h-8.722zM123.7 561.7h8.722v4.611h-8.722zM127.9 565.8h8.722v4.611h-8.722zM132 569.9h4.611v4.611h-4.611zM136.1 574h4.611v4.611h-4.611zM136.1 578.1h4.611v4.611h-4.611zM136.1 582.2h8.722v4.611h-8.722zM140.2 586.3h4.611v4.611h-4.611zM140.2 590.5h4.611v4.611h-4.611zM140.2 594.6h4.611v4.611h-4.611zM140.2 598.7h4.611v4.611h-4.611zM140.2 602.8h4.611v4.611h-4.611zM140.2 606.9h4.611v4.611h-4.611zM140.2 611h4.611v4.611h-4.611zM140.2 615.1h4.611v4.611h-4.611zM140.2 619.2h4.611v4.611h-4.611zM136.1 623.3h8.722v4.611h-8.722zM136.1 627.5h4.611v4.611h-4.611zM132 631.6h8.722v4.611h-8.722zM132 635.7h4.611v4.611h-4.611zM127.9 639.8h8.722v4.611h-8.722zM123.7 643.9h8.722v4.611h-8.722zM119.6 648h8.722v4.611h-8.722zM70.3 652.1h8.722v4.611h-8.722zM111.4 652.1h12.83v4.611h-12.83zM70.3 656.2h21.06v4.611h-21.06zM99.08 656.2h21.06v4.611h-21.06zM78.52 660.3h33.39v4.611h-33.39z"/>
<path fill="#d4d4d4" d="M86.74 549.3h16.94v4.611h-16.94zM74.41 553.5h12.83v4.611h-12.83zM103.2 553.5h12.83v4.611h-12.83zM70.3 557.6h4.611v4.611h-4.611zM115.5 557.6h4.611v4.611h-4.611zM119.6 561.7h4.611v4.611h-4.611zM123.7 565.8h4.611v4.611h-4.611zM127.9 569.9h4.611v4.611h-4.611zM132 574h4.611v4.611h-4.611zM132 578.1h4.611v4.611h-4.611zM136.1 586.3h4.611v4.611h-4.611zM136.1 590.5h4.611v4.611h-4.611zM136.1 594.6h4.611v4.611h-4.611zM136.1 611h4.611v4.611h-4.611zM136.1 615.1h4.611v4.611h-4.611zM136.1 619.2h4.611v4.611h-4.611zM132 627.5h4.611v4.611h-4.611zM127.9 635.7h4.611v4.611h-4.611zM123.7 639.8h4.611v4.611h-4.611zM119.6 643.9h4.611v4.611h-4.611zM70.3 648h8.722v4.611h-8.722zM111.4 648h8.722v4.611h-8.722zM78.52 652.1h33.39v4.611h-33.39zM90.86 656.2h8.722v4.611h-8.722z"/>
<path fill="#cecece" d="M86.74 553.5h16.94v4.611h-16.94zM74.41 557.6h8.722v4.611h-8.722zM107.3 557.6h8.722v4.611h-8.722zM70.3 561.7h4.611v4.611h-4.611zM115.5 561.7h4.611v4.611h-4.611zM119.6 565.8h4.611v4.611h-4.611zM123.7 569.9h4.611v4.611h-4.611zM127.9 574h4.611v4.611h-4.611zM132 582.2h4.611v4.611h-4.611zM132 586.3h4.611v4.611h-4.611zM136.1 598.7h4.611v4.611h-4.611zM136.1 602.8h4.611v4.611h-4.611zM136.1 606.9h4.611v4.611h-4.611zM132 619.2h4.611v4.611h-4.611zM132 623.3h4.611v4.611h-4.611zM127.9 627.5h4.611v4.611h-4.611zM127.9 631.6h4.611v4.611h-4.611zM123.7 635.7h4.611v4.611h-4.611zM119.6 639.8h4.611v4.611h-4.611zM70.3 643.9h8.722v4.611h-8.722zM115.5 643.9h4.611v4.611h-4.611zM78.52 648h8.722v4.611h-8.722zM103.2 648h8.722v4.611h-8.722z"/>
<path fill="#c9c9c9" d="M82.63 557.6h25.17v4.611h-25.17zM74.41 561.7h4.611v4.611h-4.611zM111.4 561.7h4.611v4.611h-4.611zM70.3 565.8h4.611v4.611h-4.611zM123.7 574h4.611v4.611h-4.611zM127.9 578.1h4.611v4.611h-4.611zM132 590.5h4.611v4.611h-4.611zM132 594.6h4.611v4.611h-4.611zM132 611h4.611v4.611h-4.611zM132 615.1h4.611v4.611h-4.611zM127.9 623.3h4.611v4.611h-4.611zM123.7 631.6h4.611v4.611h-4.611zM119.6 635.7h4.611v4.611h-4.611zM70.3 639.8h4.611v4.611h-4.611zM115.5 639.8h4.611v4.611h-4.611zM78.52 643.9h4.611v4.611h-4.611zM107.3 643.9h8.722v4.611h-8.722zM86.74 648h16.94v4.611h-16.94z"/>
<path fill="#c3c3c3" d="M78.52 561.7h4.611v4.611h-4.611zM107.3 561.7h4.611v4.611h-4.611zM115.5 565.8h4.611v4.611h-4.611zM119.6 569.9h4.611v4.611h-4.611zM127.9 582.2h4.611v4.611h-4.611zM132 598.7h4.611v4.611h-4.611zM132 602.8h4.611v4.611h-4.611zM132 606.9h4.611v4.611h-4.611zM127.9 619.2h4.611v4.611h-4.611zM123.7 627.5h4.611v4.611h-4.611zM74.41 639.8h4.611v4.611h-4.611zM111.4 639.8h4.611v4.611h-4.611zM82.63 643.9h4.611v4.611h-4.611zM103.2 643.9h4.611v4.611h-4.611z"/>
<path fill="#bebebe" d="M82.63 561.7h8.722v4.611h-8.722zM99.08 561.7h8.722v4.611h-8.722zM74.41 565.8h4.611v4.611h-4.611zM111.4 565.8h4.611v4.611h-4.611zM70.3 569.9h4.611v4.611h-4.611zM123.7 578.1h4.611v4.611h-4.611zM127.9 586.3h4.611v4.611h-4.611zM127.9 615.1h4.611v4.611h-4.611zM119.6 631.6h4.611v4.611h-4.611zM70.3 635.7h4.611v4.611h-4.611zM115.5 635.7h4.611v4.611h-4.611zM86.74 643.9h16.94v4.611h-16.94z"/>
<path fill="#b8b8b8" d="M90.86 561.7h8.722v4.611h-8.722zM78.52 565.8h4.611v4.611h-4.611zM107.3 565.8h4.611v4.611h-4.611zM115.5 569.9h4.611v4.611h-4.611zM119.6 574h4.611v4.611h-4.611zM127.9 590.5h4.611v4.611h-4.611zM127.9 611h4.611v4.611h-4.611zM123.7 623.3h4.611v4.611h-4.611zM78.52 639.8h4.611v4.611h-4.611zM107.3 639.8h4.611v4.611h-4.611z"/>
<path fill="#aeaeae" d="M82.63 565.8h4.611v4.611h-4.611zM103.2 565.8h4.611v4.611h-4.611zM74.41 569.9h4.611v4.611h-4.611zM111.4 569.9h4.611v4.611h-4.611zM70.3 574h4.611v4.611h-4.611zM115.5 574h4.611v4.611h-4.611zM119.6 578.1h4.611v4.611h-4.611zM123.7 586.3h4.611v4.611h-4.611zM123.7 619.2h4.611v4.611h-4.611zM86.74 639.8h16.94v4.611h-16.94z"/>
<path fill="#a8a8a8" d="M86.74 565.8h4.611v4.611h-4.611zM99.08 565.8h4.611v4.611h-4.611zM78.52 635.7h4.611v4.611h-4.611zM107.3 635.7h4.611v4.611h-4.611z"/>
<path fill="#a3a3a3" d="M90.86 565.8h8.722v4.611h-8.722zM78.52 569.9h4.611v4.611h-4.611zM107.3 569.9h4.611v4.611h-4.611zM123.7 590.5h4.611v4.611h-4.611zM123.7 615.1h4.611v4.611h-4.611zM119.6 623.3h4.611v4.611h-4.611zM70.3 627.5h4.611v4.611h-4.611zM74.41 631.6h4.611v4.611h-4.611zM111.4 631.6h4.611v4.611h-4.611z"/>
<path fill="#989898" d="M82.63 569.9h4.611v4.611h-4.611zM103.2 569.9h4.611v4.611h-4.611zM111.4 574h4.611v4.611h-4.611zM70.3 578.1h4.611v4.611h-4.611zM115.5 578.1h4.611v4.611h-4.611zM123.7 598.7h4.611v4.611h-4.611zM123.7 606.9h4.611v4.611h-4.611zM86.74 635.7h4.611v4.611h-4.611z"/>
<path fill="#8d8d8d" d="M86.74 569.9h4.611v4.611h-4.611zM99.08 569.9h4.611v4.611h-4.611zM70.3 623.3h4.611v4.611h-4.611zM107.3 631.6h4.611v4.611h-4.611z"/>
<path fill="#888888" d="M90.86 569.9h8.722v4.611h-8.722zM78.52 574h4.611v4.611h-4.611zM107.3 574h4.611v4.611h-4.611zM70.3 582.2h4.611v4.611h-4.611zM119.6 615.1h4.611v4.611h-4.611zM115.5 623.3h4.611v4.611h-4.611zM74.41 627.5h4.611v4.611h-4.611zM111.4 627.5h4.611v4.611h-4.611z"/>
<path fill="#9d9d9d" d="M74.41 574h4.611v4.611h-4.611zM119.6 582.2h4.611v4.611h-4.611zM123.7 594.6h4.611v4.611h-4.611zM123.7 611h4.611v4.611h-4.611zM115.5 627.5h4.611v4.611h-4.611zM82.63 635.7h4.611v4.611h-4.611zM103.2 635.7h4.611v4.611h-4.611z"/>
<path fill="#777777" d="M82.63 574h4.611v4.611h-4.611zM119.6 594.6h4.611v4.611h-4.611zM119.6 611h4.611v4.611h-4.611z"/>
<path fill="#676767" d="M86.74 574h4.611v4.611h-4.611zM99.08 574h4.611v4.611h-4.611zM78.52 578.1h4.611v4.611h-4.611zM111.4 623.3h4.611v4.611h-4.611z"/>
<path fill="#5c5c5c" d="M90.86 574h8.722v4.611h-8.722zM70.3 615.1h4.611v4.611h-4.611zM115.5 615.1h4.611v4.611h-4.611z"/>
<path fill="#727272" d="M103.2 574h4.611v4.611h-4.611zM70.3 619.2h4.611v4.611h-4.611zM115.5 619.2h4.611v4.611h-4.611zM78.52 627.5h4.611v4.611h-4.611zM86.74 631.6h4.611v4.611h-4.611zM99.08 631.6h4.611v4.611h-4.611z"/>
<path fill="#828282" d="M74.41 578.1h4.611v4.611h-4.611zM111.4 578.1h4.611v4.611h-4.611zM115.5 582.2h4.611v4.611h-4.611zM119.6 590.5h4.611v4.611h-4.611zM82.63 631.6h4.611v4.611h-4.611z"/>
<path fill="#4c4c4c" d="M82.63 578.1h4.611v4.611h-4.611zM70.3 611h4.611v4.611h-4.611zM74.41 619.2h4.611v4.611h-4.611z"/>
<path fill="#363636" d="M86.74 578.1h4.611v4.611h-4.611zM99.08 578.1h4.611v4.611h-4.611zM115.5 598.7h4.611v4.611h-4.611zM70.3 602.8h4.611v4.611h-4.611zM115.5 606.9h4.611v4.611h-4.611z"/>
<path fill="#2b2b2b" d="M90.86 578.1h8.722v4.611h-8.722zM74.41 615.1h4.611v4.611h-4.611z"/>
<path fill="#474747" d="M103.2 578.1h4.611v4.611h-4.611zM70.3 594.6h4.611v4.611h-4.611zM115.5 611h4.611v4.611h-4.611zM111.4 619.2h4.611v4.611h-4.611zM78.52 623.3h4.611v4.611h-4.611zM107.3 623.3h4.611v4.611h-4.611zM86.74 627.5h4.611v4.611h-4.611z"/>
<path fill="#626262" d="M107.3 578.1h4.611v4.611h-4.611zM74.41 582.2h4.611v4.611h-4.611zM111.4 582.2h4.611v4.611h-4.611z"/>
<path fill="#3c3c3c" d="M78.52 582.2h4.611v4.611h-4.611zM107.3 582.2h4.611v4.611h-4.611zM70.3 598.7h4.611v4.611h-4.611zM70.3 606.9h4.611v4.611h-4.611zM90.86 627.5h8.722v4.611h-8.722z"/>
<path fill="#161616" d="M82.63 582.2h4.611v4.611h-4.611zM103.2 582.2h4.611v4.611h-4.611z"/>
<path fill="#000000" d="M86.74 582.2h16.94v4.611h-16.94zM82.63 586.3h25.17v4.611h-25.17zM78.52 590.5h33.39v4.611h-33.39zM78.52 594.6h33.39v4.611h-33.39zM74.41 598.7h41.61v4.611h-41.61zM74.41 602.8h41.61v4.611h-41.61zM74.41 606.9h41.61v4.611h-41.61zM78.52 611h33.39v4.611h-33.39zM78.52 615.1h33.39v4.611h-33.39zM82.63 619.2h25.17v4.611h-25.17zM90.86 623.3h8.722v4.611h-8.722z"/>
<path fill="#b3b3b3" d="M123.7 582.2h4.611v4.611h-4.611zM127.9 594.6h4.611v4.611h-4.611zM127.9 598.7h4.611v4.611h-4.611zM127.9 602.8h4.611v4.611h-4.611zM127.9 606.9h4.611v4.611h-4.611zM119.6 627.5h4.611v4.611h-4.611zM70.3 631.6h4.611v4.611h-4.611zM115.5 631.6h4.611v4.611h-4.611zM74.41 635.7h4.611v4.611h-4.611zM111.4 635.7h4.611v4.611h-4.611zM82.63 639.8h4.611v4.611h-4.611zM103.2 639.8h4.611v4.611h-4.611z"/>
<path fill="#6d6d6d" d="M70.3 586.3h4.611v4.611h-4.611zM115.5 586.3h4.611v4.611h-4.611zM119.6 598.7h4.611v4.611h-4.611zM119.6 602.8h4.611v4.611h-4.611zM119.6 606.9h4.611v4.611h-4.611zM74.41 623.3h4.611v4.611h-4.611zM107.3 627.5h4.611v4.611h-4.611zM90.86 631.6h8.722v4.611h-8.722z"/>
<path fill="#414141" d="M74.41 586.3h4.611v4.611h-4.611zM111.4 586.3h4.611v4.611h-4.611zM115.5 594.6h4.611v4.611h-4.611zM99.08 627.5h4.611v4.611h-4.611z"/>
<path fill="#101010" d="M78.52 586.3h4.611v4.611h-4.611zM107.3 586.3h4.611v4.611h-4.611zM74.41 611h4.611v4.611h-4.611z"/>
<path fill="#929292" d="M119.6 586.3h4.611v4.611h-4.611zM123.7 602.8h4.611v4.611h-4.611zM119.6 619.2h4.611v4.611h-4.611zM78.52 631.6h4.611v4.611h-4.611zM90.86 635.7h12.83v4.611h-12.83z"/>
<path fill="#575757" d="M70.3 590.5h4.611v4.611h-4.611zM115.5 590.5h4.611v4.611h-4.611zM82.63 627.5h4.611v4.611h-4.611zM103.2 627.5h4.611v4.611h-4.611z"/>
<path fill="#212121" d="M74.41 590.5h4.611v4.611h-4.611zM111.4 590.5h4.611v4.611h-4.611z"/>
<path fill="#050505" d="M74.41 594.6h4.611v4.611h-4.611zM111.4 594.6h4.611v4.611h-4.611z"/>
<path fill="#313131" d="M115.5 602.8h4.611v4.611h-4.611z"/>
<path fill="#0b0b0b" d="M111.4 611h4.611v4.611h-4.611zM86.74 623.3h4.611v4.611h-4.611zM99.08 623.3h4.611v4.611h-4.611z"/>
<path fill="#262626" d="M111.4 615.1h4.611v4.611h-4.611zM82.63 623.3h4.611v4.611h-4.611zM103.2 623.3h4.611v4.611h-4.611z"/>
<path fill="#1b1b1b" d="M78.52 619.2h4.611v4.611h-4.611zM107.3 619.2h4.611v4.611h-4.611z"/>
<path fill="#7d7d7d" d="M103.2 631.6h4.611v4.611h-4.611z"/>
<rect x="96.2" y="558.5" width="96" height="96" fill="none" stroke="#ff0000" stroke-width="1.1"/>
<circle cx="103.4" cy="569.4" r="11.8" fill="none" stroke="#606060" stroke-width="1.1"/>
<circle cx="127.2" cy="569.4" r="11.8" fill="none" stroke="#606060" stroke-width="1.1"/>
<circle cx="150.1" cy="569.4" r="11.8" fill="none" stroke="#606060" stroke-width="1.1"/>
<circle cx="174.1" cy="569.4" r="11.8" fill="none" stroke="#606060" stroke-width="1.1"/>
<circle cx="91.9" cy="589.5" r="11.8" fill="none" stroke="#606060" stroke-width="1.1"/>
<circle cx="115.9" cy="589.5" r="11.8" fill="none" stroke="#606060" stroke-width="1.1"/>
<circle cx="162.1" cy="589.5" r="11.8" fill="none" stroke="#606060" stroke-width="1.1"/>
<circle cx="186.0" cy="589.5" r="11.8" fill="none" stroke="#606060" stroke-width="1.1"/>
<circle cx="103.4" cy="610.0" r="11.8" fill="none" stroke="#606060" stroke-width="1.1"/>
<circle cx="174.1" cy="610.0" r="11.8" fill="none" stroke="#606060" stroke-width="1.1"/>
<circle cx="198.8" cy="610.0" r="11.8" fill="none" stroke="#606060" stroke-width="1.1"/>
<circle cx="115.1" cy="630.8" r="11.8" fill="none" stroke="#606060" stroke-width="1.1"/>
<circle cx="162.8" cy="630.8" r="11.8" fill="none" stroke="#606060" stroke-width="1.1"/>
<circle cx="186.0" cy="630.8" r="11.8" fill="none" stroke="#606060" stroke-width="1.1"/>
<circle cx="127.7" cy="651.5" r="11.8" fill="none" stroke="#606060" stroke-width="1.1"/>
<circle cx="150.9" cy="651.5" r="11.8" fill="none" stroke="#606060" stroke-width="1.1"/>
<circle cx="174.8" cy="651.5" r="11.8" fill="none" stroke="#606060" stroke-width="1.1"/>
<circle cx="138.1" cy="589.5" r="11.8" fill="none" stroke="#ffa500" stroke-width="1.5"/>
<circle cx="127.2" cy="610.0" r="11.8" fill="none" stroke="#00ff00" stroke-width="1.5"/>
<circle cx="150.1" cy="610.0" r="11.8" fill="none" stroke="#0000ff" stroke-width="1.5"/>
<circle cx="138.9" cy="630.8" r="11.8" fill="none" stroke="#ff0000" stroke-width="1.5"/>
<path d="M139.2 606.5h10M144.2 601.5v10" stroke="#ff0000" stroke-width="1.3"/>
<rect x="70.3" y="532.9" width="148.0" height="148.0" fill="none" stroke="#222" stroke-width="1.1"/>
<line x1="80.2" y1="680.9" x2="80.2" y2="684.4" stroke="#222" stroke-width="1"/>
<line x1="66.8" y1="670.5" x2="70.3" y2="670.5" stroke="#222" stroke-width="1"/>
<line x1="112.2" y1="680.9" x2="112.2" y2="684.4" stroke="#222" stroke-width="1"/>
<line x1="66.8" y1="638.5" x2="70.3" y2="638.5" stroke="#222" stroke-width="1"/>
<line x1="144.2" y1="680.9" x2="144.2" y2="684.4" stroke="#222" stroke-width="1"/>
<line x1="66.8" y1="606.5" x2="70.3" y2="606.5" stroke="#222" stroke-width="1"/>
<line x1="176.2" y1="680.9" x2="176.2" y2="684.4" stroke="#222" stroke-width="1"/>
<line x1="66.8" y1="574.5" x2="70.3" y2="574.5" stroke="#222" stroke-width="1"/>
<line x1="208.2" y1="680.9" x2="208.2" y2="684.4" stroke="#222" stroke-width="1"/>
<line x1="66.8" y1="542.5" x2="70.3" y2="542.5" stroke="#222" stroke-width="1"/>
<path fill="#3a538b" d="M255.5 532.7h48.53v4.503h-48.53zM327.5 532.7h4.503v4.503h-4.503zM371.6 532.7h24.52v4.503h-24.52zM255.5 536.7h12.51v4.503h-12.51zM335.6 536.7h4.503v4.503h-4.503zM371.6 536.7h8.505v4.503h-8.505zM387.6 536.7h8.505v4.503h-8.505zM255.5 540.7h4.503v4.503h-4.503zM339.6 540.7h4.503v4.503h-4.503zM375.6 540.7h20.51v4.503h-20.51zM335.6 548.7h4.503v4.503h-4.503zM255.5 552.7h4.503v4.503h-4.503zM319.5 552.7h8.505v4.503h-8.505zM255.5 556.7h8.505v4.503h-8.505zM315.5 568.7h4.503v4.503h-4.503zM331.6 592.7h4.503v4.503h-4.503zM331.6 608.8h4.503v4.503h-4.503zM327.5 616.8h4.503v4.503h-4.503zM311.5 644.8h4.503v4.503h-4.503zM307.5 648.8h8.505v4.503h-8.505zM311.5 652.8h8.505v4.503h-8.505zM331.6 652.8h8.505v4.503h-8.505zM351.6 652.8h4.503v4.503h-4.503zM311.5 656.8h16.51v4.503h-16.51zM363.6 656.8h4.503v4.503h-4.503zM311.5 660.8h12.51v4.503h-12.51zM367.6 660.8h4.503v4.503h-4.503zM311.5 664.8h12.51v4.503h-12.51zM307.5 668.8h8.505v4.503h-8.505zM319.5 668.8h8.505v4.503h-8.505zM367.6 668.8h4.503v4.503h-4.503zM303.5 672.8h4.503v4.503h-4.503zM331.6 672.8h4.503v4.503h-4.503zM363.6 672.8h4.503v4.503h-4.503zM295.5 676.8h4.503v4.503h-4.503zM347.6 676.8h8.505v4.503h-8.505z"/>
<path fill="#37588c" d="M303.5 532.7h8.505v4.503h-8.505zM323.5 532.7h4.503v4.503h-4.503zM267.5 536.7h28.52v4.503h-28.52zM331.6 536.7h4.503v4.503h-4.503zM379.6 536.7h8.505v4.503h-8.505zM259.5 540.7h12.51v4.503h-12.51zM335.6 540.7h4.503v4.503h-4.503zM255.5 544.7h8.505v4.503h-8.505zM335.6 544.7h4.503v4.503h-4.503zM255.5 548.7h8.505v4.503h-8.505zM331.6 548.7h4.503v4.503h-4.503zM259.5 552.7h4.503v4.503h-4.503zM315.5 552.7h4.503v4.503h-4.503zM263.5 556.7h8.505v4.503h-8.505zM303.5 556.7h4.503v4.503h-4.503zM263.5 560.7h4.503v4.503h-4.503zM255.5 564.7h4.503v4.503h-4.503zM307.5 564.7h4.503v4.503h-4.503zM303.5 648.8h4.503v4.503h-4.503zM307.5 652.8h4.503v4.503h-4.503zM339.6 652.8h12.51v4.503h-12.51zM307.5 656.8h4.503v4.503h-4.503zM327.5 656.8h4.503v4.503h-4.503zM307.5 660.8h4.503v4.503h-4.503zM323.5 660.8h4.503v4.503h-4.503zM307.5 664.8h4.503v4.503h-4.503zM367.6 664.8h4.503v4.503h-4.503zM303.5 668.8h4.503v4.503h-4.503zM299.5 672.8h4.503v4.503h-4.503zM291.5 676.8h4.503v4.503h-4.503z"/>
<path fill="#345e8d" d="M311.5 532.7h12.51v4.503h-12.51zM295.5 536.7h4.503v4.503h-4.503zM271.5 540.7h16.51v4.503h-16.51zM263.5 544.7h8.505v4.503h-8.505zM331.6 544.7h4.503v4.503h-4.503zM263.5 548.7h8.505v4.503h-8.505zM327.5 548.7h4.503v4.503h-4.503zM263.5 552.7h8.505v4.503h-8.505zM311.5 552.7h4.503v4.503h-4.503zM271.5 556.7h4.503v4.503h-4.503zM299.5 560.7h4.503v4.503h-4.503zM311.5 568.7h4.503v4.503h-4.503zM323.5 580.7h4.503v4.503h-4.503zM319.5 628.8h4.503v4.503h-4.503zM315.5 636.8h4.503v4.503h-4.503zM299.5 648.8h4.503v4.503h-4.503zM303.5 652.8h4.503v4.503h-4.503zM303.5 656.8h4.503v4.503h-4.503zM359.6 656.8h4.503v4.503h-4.503zM303.5 660.8h4.503v4.503h-4.503zM303.5 664.8h4.503v4.503h-4.503zM323.5 664.8h4.503v4.503h-4.503zM299.5 668.8h4.503v4.503h-4.503zM327.5 668.8h4.503v4.503h-4.503zM295.5 672.8h4.503v4.503h-4.503zM335.6 672.8h4.503v4.503h-4.503zM359.6 672.8h4.503v4.503h-4.503zM255.5 676.8h4.503v4.503h-4.503zM283.5 676.8h8.505v4.503h-8.505z"/>
<path fill="#3d4c89" d="M331.6 532.7h8.505v4.503h-8.505zM367.6 532.7h4.503v4.503h-4.503zM395.6 532.7h8.505v4.503h-8.505zM339.6 536.7h4.503v4.503h-4.503zM363.6 536.7h8.505v4.503h-8.505zM395.6 536.7h8.505v4.503h-8.505zM343.6 540.7h4.503v4.503h-4.503zM367.6 540.7h8.505v4.503h-8.505zM395.6 540.7h4.503v4.503h-4.503zM339.6 544.7h4.503v4.503h-4.503zM375.6 544.7h20.51v4.503h-20.51zM339.6 548.7h4.503v4.503h-4.503zM327.5 552.7h8.505v4.503h-8.505zM255.5 560.7h8.505v4.503h-8.505zM303.5 560.7h4.503v4.503h-4.503zM311.5 564.7h4.503v4.503h-4.503zM319.5 572.7h4.503v4.503h-4.503zM335.6 580.7h8.505v4.503h-8.505zM327.5 584.7h16.51v4.503h-16.51zM331.6 588.7h12.51v4.503h-12.51zM335.6 592.7h8.505v4.503h-8.505zM335.6 596.7h8.505v4.503h-8.505zM387.6 596.7h4.503v4.503h-4.503zM335.6 600.7h8.505v4.503h-8.505zM387.6 600.7h4.503v4.503h-4.503zM335.6 604.7h4.503v4.503h-4.503zM335.6 608.8h4.503v4.503h-4.503zM331.6 612.8h4.503v4.503h-4.503zM323.5 624.8h4.503v4.503h-4.503zM315.5 644.8h4.503v4.503h-4.503zM315.5 648.8h16.51v4.503h-16.51zM319.5 652.8h12.51v4.503h-12.51zM355.6 652.8h4.503v4.503h-4.503zM367.6 656.8h4.503v4.503h-4.503zM371.6 664.8h4.503v4.503h-4.503zM315.5 668.8h4.503v4.503h-4.503zM307.5 672.8h4.503v4.503h-4.503zM327.5 672.8h4.503v4.503h-4.503zM299.5 676.8h4.503v4.503h-4.503zM343.6 676.8h4.503v4.503h-4.503zM355.6 676.8h4.503v4.503h-4.503z"/>
<path fill="#3f4788" d="M339.6 532.7h4.503v4.503h-4.503zM359.6 532.7h8.505v4.503h-8.505zM343.6 536.7h20.51v4.503h-20.51zM347.6 540.7h20.51v4.503h-20.51zM399.6 540.7h4.503v4.503h-4.503zM343.6 544.7h32.52v4.503h-32.52zM395.6 544.7h8.505v4.503h-8.505zM343.6 548.7h8.505v4.503h-8.505zM367.6 548.7h24.52v4.503h-24.52zM335.6 552.7h16.51v4.503h-16.51zM323.5 556.7h28.52v4.503h-28.52zM331.6 560.7h24.52v4.503h-24.52zM331.6 564.7h28.52v4.503h-28.52zM331.6 568.7h28.52v4.503h-28.52zM327.5 572.7h32.52v4.503h-32.52zM327.5 576.7h36.52v4.503h-36.52zM327.5 580.7h8.505v4.503h-8.505zM343.6 580.7h20.51v4.503h-20.51zM343.6 584.7h20.51v4.503h-20.51zM343.6 588.7h16.51v4.503h-16.51zM343.6 592.7h16.51v4.503h-16.51zM387.6 592.7h4.503v4.503h-4.503zM343.6 596.7h16.51v4.503h-16.51zM383.6 596.7h4.503v4.503h-4.503zM391.6 596.7h4.503v4.503h-4.503zM343.6 600.7h12.51v4.503h-12.51zM383.6 600.7h4.503v4.503h-4.503zM391.6 600.7h4.503v4.503h-4.503zM339.6 604.7h12.51v4.503h-12.51zM339.6 608.8h8.505v4.503h-8.505zM335.6 612.8h12.51v4.503h-12.51zM331.6 616.8h12.51v4.503h-12.51zM327.5 620.8h16.51v4.503h-16.51zM327.5 624.8h12.51v4.503h-12.51zM323.5 628.8h16.51v4.503h-16.51zM319.5 632.8h16.51v4.503h-16.51zM319.5 636.8h16.51v4.503h-16.51zM315.5 640.8h20.51v4.503h-20.51zM319.5 644.8h20.51v4.503h-20.51zM331.6 648.8h16.51v4.503h-16.51zM359.6 652.8h4.503v4.503h-4.503zM371.6 660.8h4.503v4.503h-4.503zM371.6 668.8h4.503v4.503h-4.503zM311.5 672.8h8.505v4.503h-8.505zM323.5 672.8h4.503v4.503h-4.503zM367.6 672.8h4.503v4.503h-4.503zM303.5 676.8h4.503v4.503h-4.503zM339.6 676.8h4.503v4.503h-4.503zM359.6 676.8h8.505v4.503h-8.505z"/>
<path fill="#414186" d="M343.6 532.7h16.51v4.503h-16.51zM351.6 548.7h16.51v4.503h-16.51zM391.6 548.7h12.51v4.503h-12.51zM351.6 552.7h40.53v4.503h-40.53zM307.5 556.7h4.503v4.503h-4.503zM319.5 556.7h4.503v4.503h-4.503zM351.6 556.7h28.52v4.503h-28.52zM307.5 560.7h4.503v4.503h-4.503zM327.5 560.7h4.503v4.503h-4.503zM355.6 560.7h20.51v4.503h-20.51zM327.5 564.7h4.503v4.503h-4.503zM359.6 564.7h12.51v4.503h-12.51zM323.5 568.7h8.505v4.503h-8.505zM359.6 568.7h12.51v4.503h-12.51zM323.5 572.7h4.503v4.503h-4.503zM359.6 572.7h12.51v4.503h-12.51zM323.5 576.7h4.503v4.503h-4.503zM363.6 576.7h12.51v4.503h-12.51zM363.6 580.7h12.51v4.503h-12.51zM363.6 584.7h12.51v4.503h-12.51zM359.6 588.7h16.51v4.503h-16.51zM383.6 588.7h4.503v4.503h-4.503zM359.6 592.7h12.51v4.503h-12.51zM379.6 592.7h8.505v4.503h-8.505zM359.6 596.7h12.51v4.503h-12.51zM379.6 596.7h4.503v4.503h-4.503zM355.6 600.7h16.51v4.503h-16.51zM379.6 600.7h4.503v4.503h-4.503zM351.6 604.7h16.51v4.503h-16.51zM383.6 604.7h12.51v4.503h-12.51zM347.6 608.8h20.51v4.503h-20.51zM347.6 612.8h12.51v4.503h-12.51zM343.6 616.8h8.505v4.503h-8.505zM343.6 620.8h4.503v4.503h-4.503zM339.6 624.8h4.503v4.503h-4.503zM339.6 628.8h4.503v4.503h-4.503zM335.6 632.8h8.505v4.503h-8.505zM335.6 636.8h8.505v4.503h-8.505zM335.6 640.8h8.505v4.503h-8.505zM339.6 644.8h4.503v4.503h-4.503zM347.6 648.8h8.505v4.503h-8.505zM363.6 652.8h8.505v4.503h-8.505zM371.6 656.8h8.505v4.503h-8.505zM375.6 660.8h4.503v4.503h-4.503zM375.6 664.8h8.505v4.503h-8.505zM375.6 668.8h4.503v4.503h-4.503zM319.5 672.8h4.503v4.503h-4.503zM371.6 672.8h8.505v4.503h-8.505zM307.5 676.8h4.503v4.503h-4.503zM335.6 676.8h4.503v4.503h-4.503zM367.6 676.8h8.505v4.503h-8.505z"/>
<path fill="#32638d" d="M299.5 536.7h4.503v4.503h-4.503zM327.5 536.7h4.503v4.503h-4.503zM287.5 540.7h8.505v4.503h-8.505zM331.6 540.7h4.503v4.503h-4.503zM271.5 544.7h12.51v4.503h-12.51zM271.5 548.7h4.503v4.503h-4.503zM323.5 548.7h4.503v4.503h-4.503zM271.5 552.7h4.503v4.503h-4.503zM267.5 560.7h4.503v4.503h-4.503zM259.5 564.7h4.503v4.503h-4.503zM303.5 564.7h4.503v4.503h-4.503zM327.5 588.7h4.503v4.503h-4.503zM323.5 620.8h4.503v4.503h-4.503zM295.5 648.8h4.503v4.503h-4.503zM299.5 652.8h4.503v4.503h-4.503zM299.5 656.8h4.503v4.503h-4.503zM331.6 656.8h4.503v4.503h-4.503zM299.5 660.8h4.503v4.503h-4.503zM327.5 660.8h4.503v4.503h-4.503zM363.6 660.8h4.503v4.503h-4.503zM299.5 664.8h4.503v4.503h-4.503zM295.5 668.8h4.503v4.503h-4.503zM363.6 668.8h4.503v4.503h-4.503zM287.5 672.8h8.505v4.503h-8.505zM259.5 676.8h24.52v4.503h-24.52z"/>
<path fill="#2f698d" d="M303.5 536.7h4.503v4.503h-4.503zM323.5 536.7h4.503v4.503h-4.503zM295.5 540.7h4.503v4.503h-4.503zM327.5 540.7h4.503v4.503h-4.503zM283.5 544.7h12.51v4.503h-12.51zM327.5 544.7h4.503v4.503h-4.503zM275.5 548.7h8.505v4.503h-8.505zM319.5 548.7h4.503v4.503h-4.503zM295.5 560.7h4.503v4.503h-4.503zM315.5 572.7h4.503v4.503h-4.503zM327.5 612.8h4.503v4.503h-4.503zM295.5 652.8h4.503v4.503h-4.503zM295.5 656.8h4.503v4.503h-4.503zM295.5 660.8h4.503v4.503h-4.503zM295.5 664.8h4.503v4.503h-4.503zM327.5 664.8h4.503v4.503h-4.503zM291.5 668.8h4.503v4.503h-4.503zM255.5 672.8h8.505v4.503h-8.505zM279.5 672.8h8.505v4.503h-8.505zM339.6 672.8h4.503v4.503h-4.503zM355.6 672.8h4.503v4.503h-4.503z"/>
<path fill="#2d6e8e" d="M307.5 536.7h8.505v4.503h-8.505zM299.5 540.7h4.503v4.503h-4.503zM275.5 552.7h4.503v4.503h-4.503zM271.5 560.7h4.503v4.503h-4.503zM319.5 576.7h4.503v4.503h-4.503zM331.6 596.7h4.503v4.503h-4.503zM331.6 604.7h4.503v4.503h-4.503zM311.5 640.8h4.503v4.503h-4.503zM307.5 644.8h4.503v4.503h-4.503zM291.5 648.8h4.503v4.503h-4.503zM287.5 652.8h8.505v4.503h-8.505zM291.5 656.8h4.503v4.503h-4.503zM335.6 656.8h4.503v4.503h-4.503zM355.6 656.8h4.503v4.503h-4.503zM291.5 660.8h4.503v4.503h-4.503zM287.5 664.8h8.505v4.503h-8.505zM363.6 664.8h4.503v4.503h-4.503zM255.5 668.8h4.503v4.503h-4.503zM283.5 668.8h8.505v4.503h-8.505zM331.6 668.8h4.503v4.503h-4.503zM263.5 672.8h16.51v4.503h-16.51z"/>
<path fill="#2b748e" d="M315.5 536.7h8.505v4.503h-8.505zM303.5 540.7h4.503v4.503h-4.503zM295.5 544.7h4.503v4.503h-4.503zM323.5 544.7h4.503v4.503h-4.503zM283.5 548.7h4.503v4.503h-4.503zM315.5 548.7h4.503v4.503h-4.503zM307.5 552.7h4.503v4.503h-4.503zM299.5 556.7h4.503v4.503h-4.503zM263.5 564.7h4.503v4.503h-4.503zM307.5 568.7h4.503v4.503h-4.503zM315.5 632.8h4.503v4.503h-4.503zM255.5 648.8h4.503v4.503h-4.503zM255.5 652.8h4.503v4.503h-4.503zM283.5 652.8h4.503v4.503h-4.503zM287.5 656.8h4.503v4.503h-4.503zM339.6 656.8h4.503v4.503h-4.503zM287.5 660.8h4.503v4.503h-4.503zM331.6 660.8h4.503v4.503h-4.503zM255.5 664.8h4.503v4.503h-4.503zM283.5 664.8h4.503v4.503h-4.503zM259.5 668.8h24.52v4.503h-24.52zM343.6 672.8h12.51v4.503h-12.51z"/>
<path fill="#29798e" d="M307.5 540.7h4.503v4.503h-4.503zM299.5 564.7h4.503v4.503h-4.503zM255.5 568.7h4.503v4.503h-4.503zM323.5 584.7h4.503v4.503h-4.503zM331.6 600.7h4.503v4.503h-4.503zM319.5 624.8h4.503v4.503h-4.503zM259.5 648.8h4.503v4.503h-4.503zM287.5 648.8h4.503v4.503h-4.503zM259.5 652.8h24.52v4.503h-24.52zM255.5 656.8h8.505v4.503h-8.505zM279.5 656.8h8.505v4.503h-8.505zM351.6 656.8h4.503v4.503h-4.503zM255.5 660.8h8.505v4.503h-8.505zM279.5 660.8h8.505v4.503h-8.505zM359.6 660.8h4.503v4.503h-4.503zM259.5 664.8h24.52v4.503h-24.52zM331.6 664.8h4.503v4.503h-4.503zM359.6 668.8h4.503v4.503h-4.503z"/>
<path fill="#277d8e" d="M311.5 540.7h4.503v4.503h-4.503zM299.5 544.7h4.503v4.503h-4.503zM275.5 560.7h4.503v4.503h-4.503zM327.5 592.7h4.503v4.503h-4.503zM323.5 616.8h4.503v4.503h-4.503zM303.5 644.8h4.503v4.503h-4.503zM263.5 648.8h4.503v4.503h-4.503zM263.5 656.8h16.51v4.503h-16.51zM343.6 656.8h8.505v4.503h-8.505zM263.5 660.8h16.51v4.503h-16.51z"/>
<path fill="#25838d" d="M315.5 540.7h4.503v4.503h-4.503zM323.5 540.7h4.503v4.503h-4.503zM319.5 544.7h4.503v4.503h-4.503zM287.5 548.7h4.503v4.503h-4.503zM275.5 556.7h4.503v4.503h-4.503zM291.5 560.7h4.503v4.503h-4.503zM311.5 572.7h4.503v4.503h-4.503zM327.5 608.8h4.503v4.503h-4.503zM267.5 648.8h4.503v4.503h-4.503zM283.5 648.8h4.503v4.503h-4.503zM359.6 664.8h4.503v4.503h-4.503zM335.6 668.8h4.503v4.503h-4.503z"/>
<path fill="#23888d" d="M319.5 540.7h4.503v4.503h-4.503zM303.5 544.7h4.503v4.503h-4.503zM311.5 548.7h4.503v4.503h-4.503zM279.5 552.7h4.503v4.503h-4.503zM303.5 552.7h4.503v4.503h-4.503zM295.5 556.7h4.503v4.503h-4.503zM267.5 564.7h4.503v4.503h-4.503zM319.5 580.7h4.503v4.503h-4.503zM311.5 636.8h4.503v4.503h-4.503zM299.5 644.8h4.503v4.503h-4.503zM271.5 648.8h8.505v4.503h-8.505zM335.6 660.8h4.503v4.503h-4.503zM355.6 668.8h4.503v4.503h-4.503z"/>
<path fill="#218d8c" d="M307.5 544.7h4.503v4.503h-4.503zM315.5 544.7h4.503v4.503h-4.503zM291.5 548.7h4.503v4.503h-4.503zM259.5 568.7h4.503v4.503h-4.503zM303.5 568.7h4.503v4.503h-4.503zM315.5 628.8h4.503v4.503h-4.503zM279.5 648.8h4.503v4.503h-4.503zM355.6 660.8h4.503v4.503h-4.503zM335.6 664.8h4.503v4.503h-4.503z"/>
<path fill="#1f928c" d="M311.5 544.7h4.503v4.503h-4.503zM307.5 548.7h4.503v4.503h-4.503zM279.5 560.7h4.503v4.503h-4.503zM295.5 564.7h4.503v4.503h-4.503zM315.5 576.7h4.503v4.503h-4.503zM323.5 588.7h4.503v4.503h-4.503zM323.5 612.8h4.503v4.503h-4.503zM319.5 620.8h4.503v4.503h-4.503zM295.5 644.8h4.503v4.503h-4.503zM339.6 668.8h4.503v4.503h-4.503z"/>
<path fill="#1e988a" d="M295.5 548.7h4.503v4.503h-4.503zM283.5 552.7h4.503v4.503h-4.503zM299.5 552.7h4.503v4.503h-4.503zM291.5 556.7h4.503v4.503h-4.503zM271.5 564.7h4.503v4.503h-4.503zM327.5 596.7h4.503v4.503h-4.503zM327.5 604.7h4.503v4.503h-4.503zM307.5 640.8h4.503v4.503h-4.503zM339.6 660.8h4.503v4.503h-4.503zM351.6 668.8h4.503v4.503h-4.503z"/>
<path fill="#1e9c89" d="M299.5 548.7h8.505v4.503h-8.505zM279.5 556.7h4.503v4.503h-4.503zM287.5 560.7h4.503v4.503h-4.503zM307.5 572.7h4.503v4.503h-4.503zM311.5 632.8h4.503v4.503h-4.503zM291.5 644.8h4.503v4.503h-4.503zM351.6 660.8h4.503v4.503h-4.503zM355.6 664.8h4.503v4.503h-4.503zM343.6 668.8h4.503v4.503h-4.503z"/>
<path fill="#1fa286" d="M287.5 552.7h4.503v4.503h-4.503zM295.5 552.7h4.503v4.503h-4.503zM283.5 556.7h8.505v4.503h-8.505zM283.5 560.7h4.503v4.503h-4.503zM263.5 568.7h4.503v4.503h-4.503zM319.5 584.7h4.503v4.503h-4.503zM315.5 624.8h4.503v4.503h-4.503zM343.6 660.8h4.503v4.503h-4.503zM339.6 664.8h4.503v4.503h-4.503zM347.6 668.8h4.503v4.503h-4.503z"/>
<path fill="#21a784" d="M291.5 552.7h4.503v4.503h-4.503zM299.5 568.7h4.503v4.503h-4.503zM255.5 572.7h4.503v4.503h-4.503zM323.5 592.7h4.503v4.503h-4.503zM327.5 600.7h4.503v4.503h-4.503zM319.5 616.8h4.503v4.503h-4.503zM255.5 644.8h4.503v4.503h-4.503zM287.5 644.8h4.503v4.503h-4.503zM347.6 660.8h4.503v4.503h-4.503z"/>
<path fill="#433a83" d="M391.6 552.7h12.51v4.503h-12.51zM311.5 556.7h8.505v4.503h-8.505zM379.6 556.7h16.51v4.503h-16.51zM323.5 560.7h4.503v4.503h-4.503zM375.6 560.7h16.51v4.503h-16.51zM315.5 564.7h4.503v4.503h-4.503zM323.5 564.7h4.503v4.503h-4.503zM371.6 564.7h16.51v4.503h-16.51zM319.5 568.7h4.503v4.503h-4.503zM371.6 568.7h16.51v4.503h-16.51zM371.6 572.7h16.51v4.503h-16.51zM375.6 576.7h12.51v4.503h-12.51zM375.6 580.7h12.51v4.503h-12.51zM375.6 584.7h12.51v4.503h-12.51zM375.6 588.7h8.505v4.503h-8.505zM387.6 588.7h4.503v4.503h-4.503zM371.6 592.7h8.505v4.503h-8.505zM391.6 592.7h4.503v4.503h-4.503zM371.6 596.7h8.505v4.503h-8.505zM395.6 596.7h4.503v4.503h-4.503zM371.6 600.7h8.505v4.503h-8.505zM395.6 600.7h4.503v4.503h-4.503zM367.6 604.7h16.51v4.503h-16.51zM395.6 604.7h4.503v4.503h-4.503zM367.6 608.8h20.51v4.503h-20.51zM359.6 612.8h20.51v4.503h-20.51zM351.6 616.8h28.52v4.503h-28.52zM347.6 620.8h12.51v4.503h-12.51zM367.6 620.8h8.505v4.503h-8.505zM343.6 624.8h8.505v4.503h-8.505zM343.6 628.8h4.503v4.503h-4.503zM343.6 632.8h4.503v4.503h-4.503zM343.6 636.8h4.503v4.503h-4.503zM343.6 640.8h4.503v4.503h-4.503zM375.6 640.8h12.51v4.503h-12.51zM399.6 640.8h4.503v4.503h-4.503zM343.6 644.8h8.505v4.503h-8.505zM375.6 644.8h28.52v4.503h-28.52zM355.6 648.8h48.53v4.503h-48.53zM371.6 652.8h32.52v4.503h-32.52zM379.6 656.8h24.52v4.503h-24.52zM379.6 660.8h24.52v4.503h-24.52zM383.6 664.8h20.51v4.503h-20.51zM379.6 668.8h24.52v4.503h-24.52zM379.6 672.8h24.52v4.503h-24.52zM311.5 676.8h4.503v4.503h-4.503zM331.6 676.8h4.503v4.503h-4.503zM375.6 676.8h28.52v4.503h-28.52z"/>
<path fill="#45347f" d="M395.6 556.7h8.505v4.503h-8.505zM311.5 560.7h4.503v4.503h-4.503zM319.5 560.7h4.503v4.503h-4.503zM391.6 560.7h4.503v4.503h-4.503zM319.5 564.7h4.503v4.503h-4.503zM387.6 564.7h4.503v4.503h-4.503zM387.6 568.7h4.503v4.503h-4.503zM387.6 584.7h4.503v4.503h-4.503zM399.6 600.7h4.503v4.503h-4.503zM399.6 604.7h4.503v4.503h-4.503zM387.6 608.8h4.503v4.503h-4.503zM379.6 612.8h4.503v4.503h-4.503zM379.6 616.8h4.503v4.503h-4.503zM359.6 620.8h8.505v4.503h-8.505zM375.6 620.8h4.503v4.503h-4.503zM351.6 624.8h28.52v4.503h-28.52zM347.6 628.8h8.505v4.503h-8.505zM363.6 628.8h20.51v4.503h-20.51zM347.6 632.8h4.503v4.503h-4.503zM367.6 632.8h16.51v4.503h-16.51zM347.6 636.8h4.503v4.503h-4.503zM367.6 636.8h24.52v4.503h-24.52zM399.6 636.8h4.503v4.503h-4.503zM347.6 640.8h8.505v4.503h-8.505zM367.6 640.8h8.505v4.503h-8.505zM387.6 640.8h12.51v4.503h-12.51zM351.6 644.8h24.52v4.503h-24.52zM315.5 676.8h8.505v4.503h-8.505zM327.5 676.8h4.503v4.503h-4.503z"/>
<path fill="#472676" d="M315.5 560.7h4.503v4.503h-4.503zM399.6 592.7h4.503v4.503h-4.503zM383.6 616.8h4.503v4.503h-4.503zM383.6 628.8h4.503v4.503h-4.503zM387.6 632.8h4.503v4.503h-4.503zM395.6 632.8h4.503v4.503h-4.503z"/>
<path fill="#472c7b" d="M395.6 560.7h8.505v4.503h-8.505zM391.6 564.7h4.503v4.503h-4.503zM387.6 572.7h4.503v4.503h-4.503zM387.6 576.7h4.503v4.503h-4.503zM387.6 580.7h4.503v4.503h-4.503zM391.6 588.7h4.503v4.503h-4.503zM395.6 592.7h4.503v4.503h-4.503zM399.6 596.7h4.503v4.503h-4.503zM391.6 608.8h12.51v4.503h-12.51zM383.6 612.8h4.503v4.503h-4.503zM379.6 620.8h4.503v4.503h-4.503zM379.6 624.8h4.503v4.503h-4.503zM355.6 628.8h8.505v4.503h-8.505zM351.6 632.8h16.51v4.503h-16.51zM383.6 632.8h4.503v4.503h-4.503zM399.6 632.8h4.503v4.503h-4.503zM351.6 636.8h16.51v4.503h-16.51zM391.6 636.8h8.505v4.503h-8.505zM355.6 640.8h12.51v4.503h-12.51zM323.5 676.8h4.503v4.503h-4.503z"/>
<path fill="#25ab81" d="M275.5 564.7h4.503v4.503h-4.503zM291.5 564.7h4.503v4.503h-4.503zM311.5 576.7h4.503v4.503h-4.503zM323.5 608.8h4.503v4.503h-4.503zM303.5 640.8h4.503v4.503h-4.503zM259.5 644.8h8.505v4.503h-8.505zM351.6 664.8h4.503v4.503h-4.503z"/>
<path fill="#44be70" d="M279.5 564.7h4.503v4.503h-4.503zM323.5 596.7h4.503v4.503h-4.503zM323.5 604.7h4.503v4.503h-4.503zM319.5 612.8h4.503v4.503h-4.503zM295.5 640.8h4.503v4.503h-4.503z"/>
<path fill="#67cc5c" d="M283.5 564.7h4.503v4.503h-4.503zM299.5 572.7h4.503v4.503h-4.503zM319.5 592.7h4.503v4.503h-4.503zM315.5 616.8h4.503v4.503h-4.503z"/>
<path fill="#4fc369" d="M287.5 564.7h4.503v4.503h-4.503zM271.5 568.7h4.503v4.503h-4.503zM307.5 576.7h4.503v4.503h-4.503z"/>
<path fill="#481e70" d="M395.6 564.7h8.505v4.503h-8.505zM391.6 568.7h4.503v4.503h-4.503zM391.6 572.7h4.503v4.503h-4.503zM391.6 584.7h4.503v4.503h-4.503zM387.6 612.8h4.503v4.503h-4.503zM399.6 612.8h4.503v4.503h-4.503zM383.6 620.8h4.503v4.503h-4.503zM383.6 624.8h4.503v4.503h-4.503zM399.6 628.8h4.503v4.503h-4.503zM391.6 632.8h4.503v4.503h-4.503z"/>
<path fill="#2bb17d" d="M267.5 568.7h4.503v4.503h-4.503zM315.5 580.7h4.503v4.503h-4.503zM307.5 636.8h4.503v4.503h-4.503zM267.5 644.8h4.503v4.503h-4.503zM283.5 644.8h4.503v4.503h-4.503zM343.6 664.8h4.503v4.503h-4.503z"/>
<path fill="#7ed24e" d="M275.5 568.7h4.503v4.503h-4.503zM323.5 600.7h4.503v4.503h-4.503zM303.5 636.8h4.503v4.503h-4.503zM259.5 640.8h4.503v4.503h-4.503z"/>
<path fill="#fde724" d="M279.5 568.7h12.51v4.503h-12.51zM271.5 572.7h28.52v4.503h-28.52zM259.5 576.7h44.53v4.503h-44.53zM255.5 580.7h56.54v4.503h-56.54zM255.5 584.7h60.54v4.503h-60.54zM255.5 588.7h64.54v4.503h-64.54zM255.5 592.7h64.54v4.503h-64.54zM255.5 596.7h68.55v4.503h-68.55zM255.5 600.7h68.55v4.503h-68.55zM255.5 604.7h68.55v4.503h-68.55zM255.5 608.8h64.54v4.503h-64.54zM255.5 612.8h64.54v4.503h-64.54zM255.5 616.8h60.54v4.503h-60.54zM255.5 620.8h60.54v4.503h-60.54zM255.5 624.8h56.54v4.503h-56.54zM255.5 628.8h52.54v4.503h-52.54zM255.5 632.8h52.54v4.503h-52.54zM255.5 636.8h48.53v4.503h-48.53zM271.5 640.8h12.51v4.503h-12.51z"/>
<path fill="#72cf55" d="M291.5 568.7h4.503v4.503h-4.503zM255.5 576.7h4.503v4.503h-4.503zM311.5 580.7h4.503v4.503h-4.503zM319.5 608.8h4.503v4.503h-4.503zM255.5 640.8h4.503v4.503h-4.503zM287.5 640.8h4.503v4.503h-4.503z"/>
<path fill="#3bba75" d="M295.5 568.7h4.503v4.503h-4.503zM259.5 572.7h4.503v4.503h-4.503zM319.5 588.7h4.503v4.503h-4.503zM315.5 620.8h4.503v4.503h-4.503zM275.5 644.8h8.505v4.503h-8.505z"/>
<path fill="#470f62" d="M395.6 568.7h8.505v4.503h-8.505zM387.6 616.8h4.503v4.503h-4.503zM399.6 620.8h4.503v4.503h-4.503zM387.6 624.8h4.503v4.503h-4.503zM391.6 628.8h8.505v4.503h-8.505z"/>
<path fill="#59c764" d="M263.5 572.7h4.503v4.503h-4.503zM315.5 584.7h4.503v4.503h-4.503zM311.5 624.8h4.503v4.503h-4.503zM307.5 632.8h4.503v4.503h-4.503zM291.5 640.8h4.503v4.503h-4.503z"/>
<path fill="#8dd644" d="M267.5 572.7h4.503v4.503h-4.503zM303.5 576.7h4.503v4.503h-4.503zM307.5 628.8h4.503v4.503h-4.503zM263.5 640.8h8.505v4.503h-8.505zM283.5 640.8h4.503v4.503h-4.503z"/>
<path fill="#32b57a" d="M303.5 572.7h4.503v4.503h-4.503zM311.5 628.8h4.503v4.503h-4.503zM299.5 640.8h4.503v4.503h-4.503zM271.5 644.8h4.503v4.503h-4.503zM347.6 664.8h4.503v4.503h-4.503z"/>
<path fill="#45085b" d="M395.6 572.7h8.505v4.503h-8.505zM395.6 584.7h8.505v4.503h-8.505zM395.6 616.8h4.503v4.503h-4.503zM387.6 620.8h4.503v4.503h-4.503z"/>
<path fill="#47186a" d="M391.6 576.7h4.503v4.503h-4.503zM391.6 580.7h4.503v4.503h-4.503zM395.6 588.7h8.505v4.503h-8.505zM391.6 612.8h8.505v4.503h-8.505zM399.6 616.8h4.503v4.503h-4.503zM399.6 624.8h4.503v4.503h-4.503zM387.6 628.8h4.503v4.503h-4.503z"/>
<path fill="#440154" d="M395.6 576.7h8.505v4.503h-8.505zM395.6 580.7h8.505v4.503h-8.505zM391.6 616.8h4.503v4.503h-4.503zM391.6 620.8h8.505v4.503h-8.505zM391.6 624.8h8.505v4.503h-8.505z"/>
<rect x="281.2" y="558.4" width="96" height="96" fill="none" stroke="#ff0000" stroke-width="1.1"/>
<path d="M292.4 606.4H321.2M337.2 606.4H366.0M329.2 569.6V598.4M329.2 614.4V643.2" stroke="#ff0000" stroke-width="1.3"/>
<rect x="255.5" y="532.7" width="148.1" height="147.8" fill="none" stroke="#222" stroke-width="1.1"/>
<line x1="265.2" y1="680.5" x2="265.2" y2="684.0" stroke="#222" stroke-width="1"/>
<line x1="252.0" y1="670.4" x2="255.5" y2="670.4" stroke="#222" stroke-width="1"/>
<line x1="297.2" y1="680.5" x2="297.2" y2="684.0" stroke="#222" stroke-width="1"/>
<line x1="252.0" y1="638.4" x2="255.5" y2="638.4" stroke="#222" stroke-width="1"/>
<line x1="329.2" y1="680.5" x2="329.2" y2="684.0" stroke="#222" stroke-width="1"/>
<line x1="252.0" y1="606.4" x2="255.5" y2="606.4" stroke="#222" stroke-width="1"/>
<line x1="361.2" y1="680.5" x2="361.2" y2="684.0" stroke="#222" stroke-width="1"/>
<line x1="252.0" y1="574.4" x2="255.5" y2="574.4" stroke="#222" stroke-width="1"/>
<line x1="393.2" y1="680.5" x2="393.2" y2="684.0" stroke="#222" stroke-width="1"/>
<line x1="252.0" y1="542.4" x2="255.5" y2="542.4" stroke="#222" stroke-width="1"/>
<path fill="#e4e4e4" d="M440.8 532.8h16.94v4.611h-16.94zM473.7 532.8h25.17v4.611h-25.17zM440.8 536.9h4.611v4.611h-4.611zM486 536.9h16.94v4.611h-16.94zM494.2 541h12.83v4.611h-12.83zM498.4 545.1h12.83v4.611h-12.83zM502.5 549.2h12.83v4.611h-12.83zM506.6 553.4h8.722v4.611h-8.722zM506.6 557.5h12.83v4.611h-12.83zM510.7 561.6h12.83v4.611h-12.83zM514.8 565.7h8.722v4.611h-8.722zM514.8 569.8h8.722v4.611h-8.722zM518.9 573.9h8.722v4.611h-8.722zM518.9 578h8.722v4.611h-8.722zM518.9 582.1h8.722v4.611h-8.722zM518.9 586.2h8.722v4.611h-8.722zM523 590.4h8.722v4.611h-8.722zM523 594.5h8.722v4.611h-8.722zM523 598.6h8.722v4.611h-8.722zM523 602.7h8.722v4.611h-8.722zM523 606.8h8.722v4.611h-8.722zM523 610.9h8.722v4.611h-8.722zM518.9 615h8.722v4.611h-8.722zM518.9 619.1h8.722v4.611h-8.722zM518.9 623.2h8.722v4.611h-8.722zM518.9 627.4h8.722v4.611h-8.722zM514.8 631.5h12.83v4.611h-12.83zM514.8 635.6h8.722v4.611h-8.722zM514.8 639.7h8.722v4.611h-8.722zM510.7 643.8h8.722v4.611h-8.722zM506.6 647.9h12.83v4.611h-12.83zM506.6 652h8.722v4.611h-8.722zM502.5 656.1h12.83v4.611h-12.83zM498.4 660.2h12.83v4.611h-12.83zM490.1 664.4h16.94v4.611h-16.94zM440.8 668.5h8.722v4.611h-8.722zM481.9 668.5h21.06v4.611h-21.06zM440.8 672.6h58.06v4.611h-58.06zM440.8 676.7h49.83v4.611h-49.83z"/>
<path fill="#dedede" d="M457.2 532.8h16.94v4.611h-16.94zM444.9 536.9h41.61v4.611h-41.61zM440.8 541h53.94v4.611h-53.94zM440.8 545.1h8.722v4.611h-8.722zM481.9 545.1h16.94v4.611h-16.94zM490.1 549.2h12.83v4.611h-12.83zM494.2 553.4h12.83v4.611h-12.83zM498.4 557.5h8.722v4.611h-8.722zM502.5 561.6h8.722v4.611h-8.722zM506.6 565.7h8.722v4.611h-8.722zM506.6 569.8h8.722v4.611h-8.722zM510.7 573.9h8.722v4.611h-8.722zM510.7 578h8.722v4.611h-8.722zM514.8 582.1h4.611v4.611h-4.611zM514.8 586.2h4.611v4.611h-4.611zM514.8 590.4h8.722v4.611h-8.722zM514.8 594.5h8.722v4.611h-8.722zM514.8 598.6h8.722v4.611h-8.722zM514.8 602.7h8.722v4.611h-8.722zM514.8 606.8h8.722v4.611h-8.722zM514.8 610.9h8.722v4.611h-8.722zM514.8 615h4.611v4.611h-4.611zM514.8 619.1h4.611v4.611h-4.611zM510.7 623.2h8.722v4.611h-8.722zM510.7 627.4h8.722v4.611h-8.722zM510.7 631.5h4.611v4.611h-4.611zM506.6 635.6h8.722v4.611h-8.722zM506.6 639.7h8.722v4.611h-8.722zM502.5 643.8h8.722v4.611h-8.722zM498.4 647.9h8.722v4.611h-8.722zM494.2 652h12.83v4.611h-12.83zM490.1 656.1h12.83v4.611h-12.83zM440.8 660.2h8.722v4.611h-8.722zM481.9 660.2h16.94v4.611h-16.94zM440.8 664.4h49.83v4.611h-49.83zM449 668.5h33.39v4.611h-33.39z"/>
<path fill="#e9e9e9" d="M498.4 532.8h16.94v4.611h-16.94zM502.5 536.9h16.94v4.611h-16.94zM506.6 541h16.94v4.611h-16.94zM510.7 545.1h12.83v4.611h-12.83zM514.8 549.2h12.83v4.611h-12.83zM514.8 553.4h12.83v4.611h-12.83zM518.9 557.5h12.83v4.611h-12.83zM523 561.6h8.722v4.611h-8.722zM523 565.7h12.83v4.611h-12.83zM523 569.8h12.83v4.611h-12.83zM527.1 573.9h8.722v4.611h-8.722zM527.1 578h12.83v4.611h-12.83zM527.1 582.1h12.83v4.611h-12.83zM527.1 586.2h12.83v4.611h-12.83zM531.2 590.4h8.722v4.611h-8.722zM531.2 594.5h8.722v4.611h-8.722zM531.2 598.6h8.722v4.611h-8.722zM531.2 602.7h8.722v4.611h-8.722zM531.2 606.8h8.722v4.611h-8.722zM531.2 610.9h8.722v4.611h-8.722zM527.1 615h12.83v4.611h-12.83zM527.1 619.1h12.83v4.611h-12.83zM527.1 623.2h12.83v4.611h-12.83zM527.1 627.4h12.83v4.611h-12.83zM527.1 631.5h8.722v4.611h-8.722zM523 635.6h12.83v4.611h-12.83zM523 639.7h12.83v4.611h-12.83zM518.9 643.8h12.83v4.611h-12.83zM518.9 647.9h12.83v4.611h-12.83zM514.8 652h12.83v4.611h-12.83zM514.8 656.1h12.83v4.611h-12.83zM510.7 660.2h12.83v4.611h-12.83zM506.6 664.4h16.94v4.611h-16.94zM502.5 668.5h16.94v4.611h-16.94zM498.4 672.6h16.94v4.611h-16.94zM490.1 676.7h21.06v4.611h-21.06z"/>
<path fill="#efefef" d="M514.8 532.8h21.06v4.611h-21.06zM518.9 536.9h16.94v4.611h-16.94zM523 541h16.94v4.611h-16.94zM523 545.1h16.94v4.611h-16.94zM527.1 549.2h16.94v4.611h-16.94zM527.1 553.4h16.94v4.611h-16.94zM531.2 557.5h16.94v4.611h-16.94zM531.2 561.6h16.94v4.611h-16.94zM535.4 565.7h12.83v4.611h-12.83zM535.4 569.8h16.94v4.611h-16.94zM535.4 573.9h16.94v4.611h-16.94zM539.5 578h12.83v4.611h-12.83zM539.5 582.1h12.83v4.611h-12.83zM539.5 586.2h12.83v4.611h-12.83zM539.5 590.4h12.83v4.611h-12.83zM539.5 594.5h12.83v4.611h-12.83zM539.5 598.6h16.94v4.611h-16.94zM539.5 602.7h16.94v4.611h-16.94zM539.5 606.8h16.94v4.611h-16.94zM539.5 610.9h12.83v4.611h-12.83zM539.5 615h12.83v4.611h-12.83zM539.5 619.1h12.83v4.611h-12.83zM539.5 623.2h12.83v4.611h-12.83zM539.5 627.4h12.83v4.611h-12.83zM535.4 631.5h16.94v4.611h-16.94zM535.4 635.6h16.94v4.611h-16.94zM535.4 639.7h12.83v4.611h-12.83zM531.2 643.8h16.94v4.611h-16.94zM531.2 647.9h16.94v4.611h-16.94zM527.1 652h16.94v4.611h-16.94zM527.1 656.1h16.94v4.611h-16.94zM523 660.2h16.94v4.611h-16.94zM523 664.4h16.94v4.611h-16.94zM518.9 668.5h16.94v4.611h-16.94zM514.8 672.6h21.06v4.611h-21.06zM510.7 676.7h21.06v4.611h-21.06z"/>
<path fill="#f4f4f4" d="M535.4 532.8h33.39v4.611h-33.39zM535.4 536.9h33.39v4.611h-33.39zM539.5 541h33.39v4.611h-33.39zM539.5 545.1h33.39v4.611h-33.39zM543.6 549.2h29.28v4.611h-29.28zM543.6 553.4h33.39v4.611h-33.39zM547.7 557.5h29.28v4.611h-29.28zM547.7 561.6h29.28v4.611h-29.28zM547.7 565.7h29.28v4.611h-29.28zM551.8 569.8h29.28v4.611h-29.28zM551.8 573.9h29.28v4.611h-29.28zM551.8 578h29.28v4.611h-29.28zM551.8 582.1h29.28v4.611h-29.28zM551.8 586.2h29.28v4.611h-29.28zM551.8 590.4h29.28v4.611h-29.28zM551.8 594.5h29.28v4.611h-29.28zM555.9 598.6h25.17v4.611h-25.17zM555.9 602.7h25.17v4.611h-25.17zM555.9 606.8h25.17v4.611h-25.17zM551.8 610.9h29.28v4.611h-29.28zM551.8 615h29.28v4.611h-29.28zM551.8 619.1h29.28v4.611h-29.28zM551.8 623.2h29.28v4.611h-29.28zM551.8 627.4h29.28v4.611h-29.28zM551.8 631.5h29.28v4.611h-29.28zM551.8 635.6h25.17v4.611h-25.17zM547.7 639.7h29.28v4.611h-29.28zM547.7 643.8h29.28v4.611h-29.28zM547.7 647.9h29.28v4.611h-29.28zM543.6 652h33.39v4.611h-33.39zM543.6 656.1h29.28v4.611h-29.28zM539.5 660.2h33.39v4.611h-33.39zM539.5 664.4h33.39v4.611h-33.39zM535.4 668.5h33.39v4.611h-33.39zM535.4 672.6h33.39v4.611h-33.39zM531.2 676.7h33.39v4.611h-33.39z"/>
<path fill="#fafafa" d="M568.2 532.8h21.06v4.611h-21.06zM568.2 536.9h21.06v4.611h-21.06zM572.4 541h16.94v4.611h-16.94zM572.4 545.1h16.94v4.611h-16.94zM572.4 549.2h16.94v4.611h-16.94zM576.5 553.4h12.83v4.611h-12.83zM576.5 557.5h12.83v4.611h-12.83zM576.5 561.6h12.83v4.611h-12.83zM576.5 565.7h12.83v4.611h-12.83zM580.6 569.8h8.722v4.611h-8.722zM580.6 573.9h8.722v4.611h-8.722zM580.6 578h8.722v4.611h-8.722zM580.6 582.1h8.722v4.611h-8.722zM580.6 586.2h8.722v4.611h-8.722zM580.6 590.4h8.722v4.611h-8.722zM580.6 594.5h8.722v4.611h-8.722zM580.6 598.6h8.722v4.611h-8.722zM580.6 602.7h8.722v4.611h-8.722zM580.6 606.8h8.722v4.611h-8.722zM580.6 610.9h8.722v4.611h-8.722zM580.6 615h8.722v4.611h-8.722zM580.6 619.1h8.722v4.611h-8.722zM580.6 623.2h8.722v4.611h-8.722zM580.6 627.4h8.722v4.611h-8.722zM580.6 631.5h8.722v4.611h-8.722zM576.5 635.6h12.83v4.611h-12.83zM576.5 639.7h12.83v4.611h-12.83zM576.5 643.8h12.83v4.611h-12.83zM576.5 647.9h12.83v4.611h-12.83zM576.5 652h12.83v4.611h-12.83zM572.4 656.1h16.94v4.611h-16.94zM572.4 660.2h16.94v4.611h-16.94zM572.4 664.4h16.94v4.611h-16.94zM568.2 668.5h21.06v4.611h-21.06zM568.2 672.6h21.06v4.611h-21.06zM564.1 676.7h25.17v4.611h-25.17z"/>
<path fill="#d9d9d9" d="M449 545.1h33.39v4.611h-33.39zM440.8 549.2h16.94v4.611h-16.94zM473.7 549.2h16.94v4.611h-16.94zM440.8 553.4h4.611v4.611h-4.611zM486 553.4h8.722v4.611h-8.722zM490.1 557.5h8.722v4.611h-8.722zM494.2 561.6h8.722v4.611h-8.722zM498.4 565.7h8.722v4.611h-8.722zM502.5 569.8h4.611v4.611h-4.611zM506.6 573.9h4.611v4.611h-4.611zM506.6 578h4.611v4.611h-4.611zM506.6 582.1h8.722v4.611h-8.722zM510.7 586.2h4.611v4.611h-4.611zM510.7 590.4h4.611v4.611h-4.611zM510.7 594.5h4.611v4.611h-4.611zM510.7 598.6h4.611v4.611h-4.611zM510.7 602.7h4.611v4.611h-4.611zM510.7 606.8h4.611v4.611h-4.611zM510.7 610.9h4.611v4.611h-4.611zM510.7 615h4.611v4.611h-4.611zM510.7 619.1h4.611v4.611h-4.611zM506.6 623.2h4.611v4.611h-4.611zM506.6 627.4h4.611v4.611h-4.611zM502.5 631.5h8.722v4.611h-8.722zM502.5 635.6h4.611v4.611h-4.611zM498.4 639.7h8.722v4.611h-8.722zM494.2 643.8h8.722v4.611h-8.722zM490.1 647.9h8.722v4.611h-8.722zM440.8 652h8.722v4.611h-8.722zM481.9 652h12.83v4.611h-12.83zM440.8 656.1h21.06v4.611h-21.06zM469.6 656.1h21.06v4.611h-21.06zM449 660.2h33.39v4.611h-33.39z"/>
<path fill="#d4d4d4" d="M457.2 549.2h16.94v4.611h-16.94zM444.9 553.4h12.83v4.611h-12.83zM473.7 553.4h12.83v4.611h-12.83zM440.8 557.5h4.611v4.611h-4.611zM486 557.5h4.611v4.611h-4.611zM490.1 561.6h4.611v4.611h-4.611zM494.2 565.7h4.611v4.611h-4.611zM498.4 569.8h4.611v4.611h-4.611zM502.5 573.9h4.611v4.611h-4.611zM502.5 578h4.611v4.611h-4.611zM506.6 586.2h4.611v4.611h-4.611zM506.6 590.4h4.611v4.611h-4.611zM506.6 594.5h4.611v4.611h-4.611zM506.6 598.6h4.611v4.611h-4.611zM506.6 606.8h4.611v4.611h-4.611zM506.6 610.9h4.611v4.611h-4.611zM506.6 615h4.611v4.611h-4.611zM506.6 619.1h4.611v4.611h-4.611zM502.5 627.4h4.611v4.611h-4.611zM498.4 631.5h4.611v4.611h-4.611zM498.4 635.6h4.611v4.611h-4.611zM494.2 639.7h4.611v4.611h-4.611zM490.1 643.8h4.611v4.611h-4.611zM440.8 647.9h8.722v4.611h-8.722zM481.9 647.9h8.722v4.611h-8.722zM449 652h33.39v4.611h-33.39zM461.4 656.1h8.722v4.611h-8.722z"/>
<path fill="#cecece" d="M457.2 553.4h16.94v4.611h-16.94zM444.9 557.5h8.722v4.611h-8.722zM477.8 557.5h8.722v4.611h-8.722zM440.8 561.6h4.611v4.611h-4.611zM486 561.6h4.611v4.611h-4.611zM490.1 565.7h4.611v4.611h-4.611zM494.2 569.8h4.611v4.611h-4.611zM498.4 573.9h4.611v4.611h-4.611zM502.5 582.1h4.611v4.611h-4.611zM502.5 586.2h4.611v4.611h-4.611zM506.6 602.7h4.611v4.611h-4.611zM502.5 619.1h4.611v4.611h-4.611zM502.5 623.2h4.611v4.611h-4.611zM498.4 627.4h4.611v4.611h-4.611zM494.2 635.6h4.611v4.611h-4.611zM490.1 639.7h4.611v4.611h-4.611zM440.8 643.8h4.611v4.611h-4.611zM486 643.8h4.611v4.611h-4.611zM449 647.9h8.722v4.611h-8.722zM473.7 647.9h8.722v4.611h-8.722z"/>
<path fill="#c9c9c9" d="M453.1 557.5h25.17v4.611h-25.17zM444.9 561.6h4.611v4.611h-4.611zM481.9 561.6h4.611v4.611h-4.611zM486 565.7h4.611v4.611h-4.611zM494.2 573.9h4.611v4.611h-4.611zM498.4 578h4.611v4.611h-4.611zM502.5 590.4h4.611v4.611h-4.611zM502.5 594.5h4.611v4.611h-4.611zM502.5 606.8h4.611v4.611h-4.611zM502.5 610.9h4.611v4.611h-4.611zM502.5 615h4.611v4.611h-4.611zM498.4 623.2h4.611v4.611h-4.611zM494.2 631.5h4.611v4.611h-4.611zM490.1 635.6h4.611v4.611h-4.611zM440.8 639.7h4.611v4.611h-4.611zM486 639.7h4.611v4.611h-4.611zM444.9 643.8h8.722v4.611h-8.722zM477.8 643.8h8.722v4.611h-8.722zM457.2 647.9h16.94v4.611h-16.94z"/>
<path fill="#c3c3c3" d="M449 561.6h4.611v4.611h-4.611zM477.8 561.6h4.611v4.611h-4.611zM440.8 565.7h4.611v4.611h-4.611zM490.1 569.8h4.611v4.611h-4.611zM498.4 582.1h4.611v4.611h-4.611zM502.5 598.6h4.611v4.611h-4.611zM502.5 602.7h4.611v4.611h-4.611zM498.4 619.1h4.611v4.611h-4.611zM494.2 627.4h4.611v4.611h-4.611zM444.9 639.7h4.611v4.611h-4.611zM481.9 639.7h4.611v4.611h-4.611zM453.1 643.8h4.611v4.611h-4.611zM473.7 643.8h4.611v4.611h-4.611z"/>
<path fill="#bebebe" d="M453.1 561.6h8.722v4.611h-8.722zM469.6 561.6h8.722v4.611h-8.722zM444.9 565.7h4.611v4.611h-4.611zM481.9 565.7h4.611v4.611h-4.611zM486 569.8h4.611v4.611h-4.611zM490.1 573.9h4.611v4.611h-4.611zM494.2 578h4.611v4.611h-4.611zM498.4 586.2h4.611v4.611h-4.611zM498.4 590.4h4.611v4.611h-4.611zM498.4 615h4.611v4.611h-4.611zM490.1 631.5h4.611v4.611h-4.611zM440.8 635.6h4.611v4.611h-4.611zM486 635.6h4.611v4.611h-4.611zM457.2 643.8h16.94v4.611h-16.94z"/>
<path fill="#b8b8b8" d="M461.4 561.6h8.722v4.611h-8.722zM449 565.7h4.611v4.611h-4.611zM477.8 565.7h4.611v4.611h-4.611zM440.8 569.8h4.611v4.611h-4.611zM494.2 582.1h4.611v4.611h-4.611zM498.4 594.5h4.611v4.611h-4.611zM498.4 610.9h4.611v4.611h-4.611zM494.2 623.2h4.611v4.611h-4.611zM449 639.7h4.611v4.611h-4.611zM477.8 639.7h4.611v4.611h-4.611z"/>
<path fill="#aeaeae" d="M453.1 565.7h4.611v4.611h-4.611zM473.7 565.7h4.611v4.611h-4.611zM444.9 569.8h4.611v4.611h-4.611zM481.9 569.8h4.611v4.611h-4.611zM440.8 573.9h4.611v4.611h-4.611zM486 573.9h4.611v4.611h-4.611zM490.1 578h4.611v4.611h-4.611zM494.2 586.2h4.611v4.611h-4.611zM494.2 619.1h4.611v4.611h-4.611zM440.8 631.5h4.611v4.611h-4.611zM457.2 639.7h16.94v4.611h-16.94z"/>
<path fill="#a8a8a8" d="M457.2 565.7h4.611v4.611h-4.611zM465.5 565.7h8.722v4.611h-8.722zM494.2 615h4.611v4.611h-4.611zM490.1 623.2h4.611v4.611h-4.611zM449 635.6h4.611v4.611h-4.611zM477.8 635.6h4.611v4.611h-4.611z"/>
<path fill="#a3a3a3" d="M461.4 565.7h4.611v4.611h-4.611zM449 569.8h4.611v4.611h-4.611zM477.8 569.8h4.611v4.611h-4.611zM490.1 582.1h4.611v4.611h-4.611zM494.2 590.4h4.611v4.611h-4.611zM481.9 631.5h4.611v4.611h-4.611z"/>
<path fill="#989898" d="M453.1 569.8h4.611v4.611h-4.611zM473.7 569.8h4.611v4.611h-4.611zM444.9 573.9h4.611v4.611h-4.611zM440.8 578h4.611v4.611h-4.611zM494.2 598.6h4.611v4.611h-4.611zM494.2 602.7h4.611v4.611h-4.611zM494.2 606.8h4.611v4.611h-4.611zM490.1 619.1h4.611v4.611h-4.611z"/>
<path fill="#8d8d8d" d="M457.2 569.8h4.611v4.611h-4.611zM469.6 569.8h4.611v4.611h-4.611zM486 623.2h4.611v4.611h-4.611zM449 631.5h4.611v4.611h-4.611zM477.8 631.5h4.611v4.611h-4.611z"/>
<path fill="#888888" d="M461.4 569.8h8.722v4.611h-8.722zM449 573.9h4.611v4.611h-4.611zM477.8 573.9h4.611v4.611h-4.611zM486 582.1h4.611v4.611h-4.611zM490.1 615h4.611v4.611h-4.611zM440.8 623.2h4.611v4.611h-4.611zM444.9 627.4h4.611v4.611h-4.611zM481.9 627.4h4.611v4.611h-4.611z"/>
<path fill="#777777" d="M453.1 573.9h4.611v4.611h-4.611zM473.7 573.9h4.611v4.611h-4.611zM490.1 594.5h4.611v4.611h-4.611z"/>
<path fill="#676767" d="M457.2 573.9h4.611v4.611h-4.611zM469.6 573.9h4.611v4.611h-4.611zM477.8 578h4.611v4.611h-4.611zM444.9 623.2h4.611v4.611h-4.611zM461.4 631.5h4.611v4.611h-4.611z"/>
<path fill="#626262" d="M461.4 573.9h8.722v4.611h-8.722zM449 578h4.611v4.611h-4.611zM444.9 582.1h4.611v4.611h-4.611zM481.9 582.1h4.611v4.611h-4.611z"/>
<path fill="#9d9d9d" d="M481.9 573.9h4.611v4.611h-4.611zM486 578h4.611v4.611h-4.611zM494.2 594.5h4.611v4.611h-4.611zM494.2 610.9h4.611v4.611h-4.611zM440.8 627.4h4.611v4.611h-4.611zM486 627.4h4.611v4.611h-4.611zM444.9 631.5h4.611v4.611h-4.611zM453.1 635.6h4.611v4.611h-4.611zM473.7 635.6h4.611v4.611h-4.611z"/>
<path fill="#828282" d="M444.9 578h4.611v4.611h-4.611zM481.9 578h4.611v4.611h-4.611zM440.8 582.1h4.611v4.611h-4.611zM490.1 590.4h4.611v4.611h-4.611z"/>
<path fill="#4c4c4c" d="M453.1 578h4.611v4.611h-4.611zM473.7 578h4.611v4.611h-4.611zM486 610.9h4.611v4.611h-4.611zM481.9 619.1h4.611v4.611h-4.611z"/>
<path fill="#363636" d="M457.2 578h4.611v4.611h-4.611zM469.6 578h4.611v4.611h-4.611zM440.8 598.6h4.611v4.611h-4.611zM486 602.7h4.611v4.611h-4.611zM440.8 606.8h4.611v4.611h-4.611zM461.4 627.4h8.722v4.611h-8.722z"/>
<path fill="#2b2b2b" d="M461.4 578h8.722v4.611h-8.722zM481.9 615h4.611v4.611h-4.611z"/>
<path fill="#3c3c3c" d="M449 582.1h4.611v4.611h-4.611zM477.8 582.1h4.611v4.611h-4.611zM486 598.6h4.611v4.611h-4.611zM486 606.8h4.611v4.611h-4.611z"/>
<path fill="#161616" d="M453.1 582.1h4.611v4.611h-4.611z"/>
<path fill="#000000" d="M457.2 582.1h16.94v4.611h-16.94zM453.1 586.2h25.17v4.611h-25.17zM449 590.4h33.39v4.611h-33.39zM444.9 594.5h37.5v4.611h-37.5zM444.9 598.6h41.61v4.611h-41.61zM444.9 602.7h41.61v4.611h-41.61zM444.9 606.8h41.61v4.611h-41.61zM449 610.9h33.39v4.611h-33.39zM449 615h33.39v4.611h-33.39zM453.1 619.1h25.17v4.611h-25.17zM461.4 623.2h8.722v4.611h-8.722z"/>
<path fill="#1b1b1b" d="M473.7 582.1h4.611v4.611h-4.611zM449 619.1h4.611v4.611h-4.611zM477.8 619.1h4.611v4.611h-4.611z"/>
<path fill="#6d6d6d" d="M440.8 586.2h4.611v4.611h-4.611zM486 586.2h4.611v4.611h-4.611zM490.1 602.7h4.611v4.611h-4.611zM481.9 623.2h4.611v4.611h-4.611zM449 627.4h4.611v4.611h-4.611zM465.5 631.5h4.611v4.611h-4.611z"/>
<path fill="#414141" d="M444.9 586.2h4.611v4.611h-4.611zM481.9 586.2h4.611v4.611h-4.611zM440.8 594.5h4.611v4.611h-4.611zM457.2 627.4h4.611v4.611h-4.611zM469.6 627.4h4.611v4.611h-4.611z"/>
<path fill="#101010" d="M449 586.2h4.611v4.611h-4.611zM477.8 586.2h4.611v4.611h-4.611zM481.9 610.9h4.611v4.611h-4.611z"/>
<path fill="#929292" d="M490.1 586.2h4.611v4.611h-4.611zM457.2 635.6h16.94v4.611h-16.94z"/>
<path fill="#575757" d="M440.8 590.4h4.611v4.611h-4.611zM486 590.4h4.611v4.611h-4.611zM453.1 627.4h4.611v4.611h-4.611zM473.7 627.4h4.611v4.611h-4.611z"/>
<path fill="#212121" d="M444.9 590.4h4.611v4.611h-4.611zM481.9 590.4h4.611v4.611h-4.611z"/>
<path fill="#0b0b0b" d="M481.9 594.5h4.611v4.611h-4.611zM444.9 610.9h4.611v4.611h-4.611zM457.2 623.2h4.611v4.611h-4.611zM469.6 623.2h4.611v4.611h-4.611z"/>
<path fill="#474747" d="M486 594.5h4.611v4.611h-4.611zM440.8 610.9h4.611v4.611h-4.611zM444.9 619.1h4.611v4.611h-4.611zM449 623.2h4.611v4.611h-4.611zM477.8 623.2h4.611v4.611h-4.611z"/>
<path fill="#727272" d="M490.1 598.6h4.611v4.611h-4.611zM490.1 606.8h4.611v4.611h-4.611zM440.8 619.1h4.611v4.611h-4.611zM486 619.1h4.611v4.611h-4.611zM477.8 627.4h4.611v4.611h-4.611zM457.2 631.5h4.611v4.611h-4.611zM469.6 631.5h4.611v4.611h-4.611z"/>
<path fill="#b3b3b3" d="M498.4 598.6h4.611v4.611h-4.611zM498.4 602.7h4.611v4.611h-4.611zM498.4 606.8h4.611v4.611h-4.611zM490.1 627.4h4.611v4.611h-4.611zM486 631.5h4.611v4.611h-4.611zM444.9 635.6h4.611v4.611h-4.611zM481.9 635.6h4.611v4.611h-4.611zM453.1 639.7h4.611v4.611h-4.611zM473.7 639.7h4.611v4.611h-4.611z"/>
<path fill="#313131" d="M440.8 602.7h4.611v4.611h-4.611z"/>
<path fill="#7d7d7d" d="M490.1 610.9h4.611v4.611h-4.611zM453.1 631.5h4.611v4.611h-4.611zM473.7 631.5h4.611v4.611h-4.611z"/>
<path fill="#5c5c5c" d="M440.8 615h4.611v4.611h-4.611zM486 615h4.611v4.611h-4.611z"/>
<path fill="#262626" d="M444.9 615h4.611v4.611h-4.611zM453.1 623.2h4.611v4.611h-4.611zM473.7 623.2h4.611v4.611h-4.611z"/>
<clipPath id="kclip"><rect x="440.8" y="532.8" width="147.5" height="147.5"/></clipPath>
<g clip-path="url(#kclip)"><ellipse cx="0" cy="0" rx="68.5" ry="48.7" transform="translate(473.2,603.3) rotate(-44.4)" fill="none" stroke="#f5d742" stroke-width="1.6"/></g>
<rect x="466.4" y="558.5" width="96" height="96" fill="none" stroke="#ff0000" stroke-width="1.1"/>
<path d="M477.6 606.5H506.4M522.4 606.5H551.2M514.4 569.7V598.5M514.4 614.5V643.3" stroke="#ff0000" stroke-width="1.3"/>
<rect x="440.8" y="532.8" width="147.5" height="147.5" fill="none" stroke="#222" stroke-width="1.1"/>
<line x1="450.4" y1="680.3" x2="450.4" y2="683.8" stroke="#222" stroke-width="1"/>
<line x1="437.3" y1="670.5" x2="440.8" y2="670.5" stroke="#222" stroke-width="1"/>
<line x1="482.4" y1="680.3" x2="482.4" y2="683.8" stroke="#222" stroke-width="1"/>
<line x1="437.3" y1="638.5" x2="440.8" y2="638.5" stroke="#222" stroke-width="1"/>
<line x1="514.4" y1="680.3" x2="514.4" y2="683.8" stroke="#222" stroke-width="1"/>
<line x1="437.3" y1="606.5" x2="440.8" y2="606.5" stroke="#222" stroke-width="1"/>
<line x1="546.4" y1="680.3" x2="546.4" y2="683.8" stroke="#222" stroke-width="1"/>
<line x1="437.3" y1="574.5" x2="440.8" y2="574.5" stroke="#222" stroke-width="1"/>
<line x1="578.4" y1="680.3" x2="578.4" y2="683.8" stroke="#222" stroke-width="1"/>
<line x1="437.3" y1="542.5" x2="440.8" y2="542.5" stroke="#222" stroke-width="1"/></svg>
<div class="t" style="left:70.5px;top:4.3px;font-size:13px;line-height:13px;color:#000;">EW: 0.6±0.2<i>Å</i></div>
<div class="t" style="left:183.6px;top:4.3px;font-size:13px;line-height:13px;color:#000;">P(LAE)/P(OII): 0.398</div>
<div class="s" style="left:341.9px;top:0.6px;font-size:8.8px;line-height:8.8px;letter-spacing:0.55px">0.626</div>
<div class="s" style="left:341.9px;top:9.4px;font-size:8.8px;line-height:8.8px;letter-spacing:0.55px">0.271</div>
<div class="t" style="left:384px;top:4.3px;font-size:13px;line-height:13px;color:#000;">P(Ly<i>α</i>): 0.001  Q(z): 0.00</div>
<div class="s" style="left:581.2px;top:0.6px;font-size:8.8px;line-height:8.8px;letter-spacing:0.55px">0.00</div>
<div class="s" style="left:581.2px;top:9.4px;font-size:8.8px;line-height:8.8px;letter-spacing:0.55px">0.00</div>
<div class="t" style="left:618.3px;top:4.3px;font-size:13px;line-height:13px;color:#000;">z: 0.0670</div>
<div class="s" style="left:690.6px;top:0.6px;font-size:8.8px;line-height:8.8px;letter-spacing:0.55px">0.0670</div>
<div class="s" style="left:690.6px;top:9.4px;font-size:8.8px;line-height:8.8px;letter-spacing:0.55px">0.0670</div>
<div class="t" style="left:730.8px;top:4.3px;font-size:13px;line-height:13px;color:#000;">OII   Flags:0x00000009</div>
<div class="t" style="left:1057.1px;top:6.7px;font-size:13px;line-height:13px;color:#000;">2024-12-30 09:07:55  Version 1.22.3</div>
<div class="t" style="left:70.3px;top:32.4px;font-size:13px;line-height:13px;color:#000;">ID: 3006777753 (3006777753.pdf)</div>
<div class="t" style="left:70.3px;top:47.5px;font-size:13px;line-height:13px;color:#000;">Obs: 20200412v015_3006777753</div>
<div class="t" style="left:70.3px;top:62.0px;font-size:13px;line-height:13px;color:#000;">Primary Spec_Slot_IFU_AMP: 016_104_026_LU</div>
<div class="t" style="left:70.3px;top:77.0px;font-size:13px;line-height:13px;color:#000;">F=1.9&quot;  T=0.143  N=1.24  A=0.93  g=24.8</div>
<div class="t" style="left:70.3px;top:92.1px;font-size:13px;line-height:13px;color:#000;">RA,Dec (178.854034,54.892395)</div>
<div class="t" style="left:70.3px;top:123.9px;font-size:13px;line-height:13px;color:#000;">LineFlux = 1.40(±0.42)e-16</div>
<div class="t" style="left:70.3px;top:138.2px;font-size:13px;line-height:13px;color:#000;">Cont(n) = 3.10(±0.10)e-17</div>
<div class="t" style="left:70.3px;top:156.2px;font-size:13px;line-height:13px;color:#000;">Cont(w) = 6.80(±0.01)e-17 (gmag 19.63</div>
<div class="t" style="left:70.3px;top:192.1px;font-size:13px;line-height:13px;color:#000;">S/N = 5.3(±0.5)</div>
<div class="t" style="left:70.3px;top:208.6px;font-size:13px;line-height:13px;color:#000;">P(LAE)/P(OII): 0.558</div>
<div class="t" style="left:70.3px;top:226.1px;font-size:13px;line-height:13px;color:#000;">LyA z = 2.2719  OII z = 0.0670</div>
<div class="t" style="left:70.3px;top:108.9px;font-size:13px;line-height:13px;color:#000;"><i>λ</i> = 3977.59<i>Å</i>  <i>σ</i> = 4.13(±1.46)<i>Å</i></div>
<div class="s" style="left:364.7px;top:153.2px;font-size:8.8px;line-height:8.8px;letter-spacing:0.55px">19.64</div>
<div class="s" style="left:364.7px;top:162.0px;font-size:8.8px;line-height:8.8px;letter-spacing:0.55px">19.63</div>
<div class="t" style="left:391.7px;top:156.2px;font-size:13px;line-height:13px;color:#000;">)</div>
<div class="t" style="left:205.3px;top:192.1px;font-size:13px;line-height:13px;color:#000;"><i>χ</i></div>
<div class="t" style="left:70.3px;top:174.5px;font-size:13px;line-height:13px;color:#000;">EWr = 1.40(±0.41) (w: 0.65(±0.19))<i>Å</i></div>
<div class="s" style="left:214.0px;top:190.2px;font-size:8.6px;line-height:8.6px">2</div>
<div class="t" style="left:228.4px;top:192.1px;font-size:13px;line-height:13px;color:#000;">= 1.6(±0.2)</div>
<div class="s" style="left:228.4px;top:207.7px;font-size:8.8px;line-height:8.8px;letter-spacing:0.55px">0.782</div>
<div class="s" style="left:228.4px;top:216.5px;font-size:8.8px;line-height:8.8px;letter-spacing:0.55px">0.418</div>
<div class="t" style="left:263.1px;top:208.6px;font-size:13px;line-height:13px;color:#000;">(w: 0.392</div>
<div class="s" style="left:335.1px;top:207.7px;font-size:8.8px;line-height:8.8px;letter-spacing:0.55px">0.668</div>
<div class="s" style="left:335.1px;top:216.5px;font-size:8.8px;line-height:8.8px;letter-spacing:0.55px">0.279</div>
<div class="t" style="left:362px;top:208.6px;font-size:13px;line-height:13px;color:#000;">)</div>
<div class="t" style="left:70.3px;top:488.9px;font-size:13px;line-height:13px;color:#000;">MOSAIC/KPNO : Possible Matches = 0 (within +/- 3&quot;)  P(LAE)/P(OII): 0.3</div>
<div class="s" style="left:617.9px;top:485.9px;font-size:8.8px;line-height:8.8px;letter-spacing:0.55px">0.554</div>
<div class="s" style="left:617.9px;top:494.7px;font-size:8.8px;line-height:8.8px;letter-spacing:0.55px">0.183</div>
<div class="t" style="left:653.6px;top:488.9px;font-size:13px;line-height:13px;color:#000;">(g)</div>
<div class="t" style="left:70.5px;top:878px;font-size:13px;line-height:13px;color:#000;">No matching targets in catalog.</div>
<div class="t" style="left:70.5px;top:893px;font-size:13px;line-height:13px;color:#000;">Row intentionally blank.</div>
<div class="s" style="left:446.5px;top:98.8px;font-size:8px;line-height:8px;letter-spacing:0.5px;color:#222">0.30</div>
<div class="s" style="left:446.5px;top:107.3px;font-size:8px;line-height:8px;letter-spacing:0.5px;color:#222">2.07</div>
<div class="s" style="left:446.5px;top:115.8px;font-size:8px;line-height:8px;letter-spacing:0.5px;color:#222">081</div>
<div class="s" style="left:750.9px;top:95.3px;font-size:6px;line-height:6px;color:#222">0.43&quot;</div>
<div class="s" style="left:750.9px;top:102.6px;font-size:6px;line-height:6px;color:#222">(245, 293)</div>
<div class="s" style="left:750.9px;top:109.9px;font-size:6px;line-height:6px;color:#222">20200412</div>
<div class="s" style="left:750.9px;top:117.2px;font-size:6px;line-height:6px;color:#222">v015_01</div>
<div class="s" style="left:750.9px;top:124.5px;font-size:6px;line-height:6px;color:#222">016_LU_032</div>
<div class="s" style="left:446.5px;top:138.3px;font-size:8px;line-height:8px;letter-spacing:0.5px;color:#222">0.11</div>
<div class="s" style="left:446.5px;top:146.8px;font-size:8px;line-height:8px;letter-spacing:0.5px;color:#222">1.10</div>
<div class="s" style="left:446.5px;top:155.3px;font-size:8px;line-height:8px;letter-spacing:0.5px;color:#222">081</div>
<div class="s" style="left:750.9px;top:134.8px;font-size:6px;line-height:6px;color:#222">1.04&quot;</div>
<div class="s" style="left:750.9px;top:142.1px;font-size:6px;line-height:6px;color:#222">(245, 293)</div>
<div class="s" style="left:750.9px;top:149.4px;font-size:6px;line-height:6px;color:#222">20200412</div>
<div class="s" style="left:750.9px;top:156.7px;font-size:6px;line-height:6px;color:#222">v015_03</div>
<div class="s" style="left:750.9px;top:164.0px;font-size:6px;line-height:6px;color:#222">016_LU_032</div>
<div class="s" style="left:446.5px;top:178.0px;font-size:8px;line-height:8px;letter-spacing:0.5px;color:#222">0.11</div>
<div class="s" style="left:446.5px;top:186.5px;font-size:8px;line-height:8px;letter-spacing:0.5px;color:#222">1.94</div>
<div class="s" style="left:446.5px;top:195.0px;font-size:8px;line-height:8px;letter-spacing:0.5px;color:#222">081</div>
<div class="s" style="left:750.9px;top:174.5px;font-size:6px;line-height:6px;color:#222">1.05&quot;</div>
<div class="s" style="left:750.9px;top:181.8px;font-size:6px;line-height:6px;color:#222">(245, 293)</div>
<div class="s" style="left:750.9px;top:189.1px;font-size:6px;line-height:6px;color:#222">20200412</div>
<div class="s" style="left:750.9px;top:196.4px;font-size:6px;line-height:6px;color:#222">v015_02</div>
<div class="s" style="left:750.9px;top:203.7px;font-size:6px;line-height:6px;color:#222">016_LU_032</div>
<div class="s" style="left:446.5px;top:217.7px;font-size:8px;line-height:8px;letter-spacing:0.5px;color:#222">0.09</div>
<div class="s" style="left:446.5px;top:226.2px;font-size:8px;line-height:8px;letter-spacing:0.5px;color:#222">1.56</div>
<div class="s" style="left:446.5px;top:234.7px;font-size:8px;line-height:8px;letter-spacing:0.5px;color:#222">100</div>
<div class="s" style="left:750.9px;top:214.2px;font-size:6px;line-height:6px;color:#222">1.58&quot;</div>
<div class="s" style="left:750.9px;top:221.5px;font-size:6px;line-height:6px;color:#222">(245, 128)</div>
<div class="s" style="left:750.9px;top:228.8px;font-size:6px;line-height:6px;color:#222">20200412</div>
<div class="s" style="left:750.9px;top:236.1px;font-size:6px;line-height:6px;color:#222">v015_02</div>
<div class="s" style="left:750.9px;top:243.4px;font-size:6px;line-height:6px;color:#222">016_LU_013</div>
<div class="s" style="left:490px;top:35.3px;width:50px;text-align:center;font-size:8px;line-height:8px;color:#222">2D Spec</div>
<div class="s" style="left:578px;top:35.3px;width:60px;text-align:center;font-size:8px;line-height:8px;color:#222">Pixel Flat</div>
<div class="s" style="left:670px;top:35.3px;width:60px;text-align:center;font-size:8px;line-height:8px;color:#222">Smoothed</div>
<div class="s" style="left:748.6px;top:54.6px;font-size:8.2px;line-height:9.2px;color:#111">Weighted<br>Sum</div>
<div class="s" style="left:815.4px;top:39.5px;width:100px;text-align:center;font-size:9.6px;line-height:10.8px;color:#111;transform:scaleX(1.17)">With Sky<br>x, y: 245, 293</div>
<div class="s" style="left:915.9px;top:39.5px;width:100px;text-align:center;font-size:9.6px;line-height:10.8px;color:#111;transform:scaleX(1.17)">Clean Image<br>x, y: 245, 293</div>
<div class="s" style="left:1011.9000000000001px;top:199.6px;width:30px;text-align:right;font-size:9.2px;line-height:9.2px;color:#111">0</div>
<div class="s" style="left:1011.9000000000001px;top:175.6px;width:30px;text-align:right;font-size:9.2px;line-height:9.2px;color:#111">2</div>
<div class="s" style="left:1011.9000000000001px;top:151.6px;width:30px;text-align:right;font-size:9.2px;line-height:9.2px;color:#111">4</div>
<div class="s" style="left:1011.9000000000001px;top:127.6px;width:30px;text-align:right;font-size:9.2px;line-height:9.2px;color:#111">6</div>
<div class="s" style="left:1011.9000000000001px;top:103.6px;width:30px;text-align:right;font-size:9.2px;line-height:9.2px;color:#111">8</div>
<div class="s" style="left:1011.9000000000001px;top:79.6px;width:30px;text-align:right;font-size:9.2px;line-height:9.2px;color:#111">10</div>
<div class="s" style="left:1067.0px;top:217.2px;width:40px;text-align:center;font-size:9.2px;line-height:9.2px;color:#111">3940</div>
<div class="s" style="left:1113.7px;top:217.2px;width:40px;text-align:center;font-size:9.2px;line-height:9.2px;color:#111">3960</div>
<div class="s" style="left:1160.4px;top:217.2px;width:40px;text-align:center;font-size:9.2px;line-height:9.2px;color:#111">3980</div>
<div class="s" style="left:1207.1px;top:217.2px;width:40px;text-align:center;font-size:9.2px;line-height:9.2px;color:#111">4000</div>
<div class="s" style="left:1253.9px;top:217.2px;width:40px;text-align:center;font-size:9.2px;line-height:9.2px;color:#111">4020</div>
<div class="s" style="left:1049.5px;top:62.5px;font-size:9px;line-height:9px;color:#111">e<sup style="font-size:6px;vertical-align:3px">−17</sup>x2<i>Å</i></div>
<div class="s" style="left:61.7px;top:408.4px;width:34px;text-align:right;font-size:10.6px;line-height:10.6px;color:#111;letter-spacing:0.2px">5</div>
<div class="s" style="left:61.7px;top:386.7px;width:34px;text-align:right;font-size:10.6px;line-height:10.6px;color:#111;letter-spacing:0.2px">10</div>
<div class="s" style="left:61.7px;top:365.1px;width:34px;text-align:right;font-size:10.6px;line-height:10.6px;color:#111;letter-spacing:0.2px">15</div>
<div class="s" style="left:82.5px;top:438.6px;width:50px;text-align:center;font-size:10.6px;line-height:10.6px;color:#111;letter-spacing:0.2px">3500</div>
<div class="s" style="left:141.3px;top:438.6px;width:50px;text-align:center;font-size:10.6px;line-height:10.6px;color:#111;letter-spacing:0.2px">3600</div>
<div class="s" style="left:200.2px;top:438.6px;width:50px;text-align:center;font-size:10.6px;line-height:10.6px;color:#111;letter-spacing:0.2px">3700</div>
<div class="s" style="left:259.0px;top:438.6px;width:50px;text-align:center;font-size:10.6px;line-height:10.6px;color:#111;letter-spacing:0.2px">3800</div>
<div class="s" style="left:317.9px;top:438.6px;width:50px;text-align:center;font-size:10.6px;line-height:10.6px;color:#111;letter-spacing:0.2px">3900</div>
<div class="s" style="left:376.7px;top:438.6px;width:50px;text-align:center;font-size:10.6px;line-height:10.6px;color:#111;letter-spacing:0.2px">4000</div>
<div class="s" style="left:435.5px;top:438.6px;width:50px;text-align:center;font-size:10.6px;line-height:10.6px;color:#111;letter-spacing:0.2px">4100</div>
<div class="s" style="left:494.4px;top:438.6px;width:50px;text-align:center;font-size:10.6px;line-height:10.6px;color:#111;letter-spacing:0.2px">4200</div>
<div class="s" style="left:553.2px;top:438.6px;width:50px;text-align:center;font-size:10.6px;line-height:10.6px;color:#111;letter-spacing:0.2px">4300</div>
<div class="s" style="left:612.1px;top:438.6px;width:50px;text-align:center;font-size:10.6px;line-height:10.6px;color:#111;letter-spacing:0.2px">4400</div>
<div class="s" style="left:670.9px;top:438.6px;width:50px;text-align:center;font-size:10.6px;line-height:10.6px;color:#111;letter-spacing:0.2px">4500</div>
<div class="s" style="left:729.7px;top:438.6px;width:50px;text-align:center;font-size:10.6px;line-height:10.6px;color:#111;letter-spacing:0.2px">4600</div>
<div class="s" style="left:788.6px;top:438.6px;width:50px;text-align:center;font-size:10.6px;line-height:10.6px;color:#111;letter-spacing:0.2px">4700</div>
<div class="s" style="left:847.4px;top:438.6px;width:50px;text-align:center;font-size:10.6px;line-height:10.6px;color:#111;letter-spacing:0.2px">4800</div>
<div class="s" style="left:906.3px;top:438.6px;width:50px;text-align:center;font-size:10.6px;line-height:10.6px;color:#111;letter-spacing:0.2px">4900</div>
<div class="s" style="left:965.1px;top:438.6px;width:50px;text-align:center;font-size:10.6px;line-height:10.6px;color:#111;letter-spacing:0.2px">5000</div>
<div class="s" style="left:1023.9px;top:438.6px;width:50px;text-align:center;font-size:10.6px;line-height:10.6px;color:#111;letter-spacing:0.2px">5100</div>
<div class="s" style="left:1082.8px;top:438.6px;width:50px;text-align:center;font-size:10.6px;line-height:10.6px;color:#111;letter-spacing:0.2px">5200</div>
<div class="s" style="left:1141.6px;top:438.6px;width:50px;text-align:center;font-size:10.6px;line-height:10.6px;color:#111;letter-spacing:0.2px">5300</div>
<div class="s" style="left:1200.5px;top:438.6px;width:50px;text-align:center;font-size:10.6px;line-height:10.6px;color:#111;letter-spacing:0.2px">5400</div>
<div class="s" style="left:1259.3px;top:438.6px;width:50px;text-align:center;font-size:10.6px;line-height:10.6px;color:#111;letter-spacing:0.2px">5500</div>
<div class="s" style="left:107.8px;top:337.2px;font-size:10.6px;line-height:10.6px;color:#111;letter-spacing:0.3px">e<sup style="font-size:7px;vertical-align:3.5px">−17</sup>x2<i>Å</i></div>
<div class="s" style="left:503.7px;top:448.2px;font-size:8.4px;line-height:8.4px;color:#333">Lyα</div>
<div class="s" style="left:557.5px;top:448.2px;font-size:8.4px;line-height:8.4px;color:#333">OII</div>
<div class="s" style="left:609.8px;top:448.2px;font-size:8.4px;line-height:8.4px;color:#333">CIV</div>
<div class="s" style="left:665.1px;top:448.2px;font-size:8.4px;line-height:8.4px;color:#333">CIII</div>
<div class="s" style="left:717.3px;top:448.2px;font-size:8.4px;line-height:8.4px;color:#333">MgII</div>
<div class="s" style="left:772.5px;top:448.2px;font-size:8.4px;line-height:8.4px;color:#333">HeII</div>
<div class="s" style="left:827.3px;top:448.2px;font-size:8.4px;line-height:8.4px;color:#333">(K)CaII</div>
<div class="s" style="left:893.1px;top:448.2px;font-size:8.4px;line-height:8.4px;color:#333">(H)CaII</div>
<div class="s" style="left:134.2px;top:538.0px;width:20px;text-align:center;font-size:10.5px;line-height:10.5px;color:#ff0000">N</div>
<div class="s" style="left:71.6px;top:600.9px;width:20px;text-align:center;font-size:10.5px;line-height:10.5px;color:#ff0000">E</div>
<div class="s" style="left:60.2px;top:687.5px;width:40px;text-align:center;font-size:11px;line-height:11px;letter-spacing:0.9px;color:#111">−4</div>
<div class="s" style="left:26.3px;top:664.6px;width:38.5px;text-align:right;font-size:11px;line-height:11px;letter-spacing:0.9px;color:#111">−4</div>
<div class="s" style="left:92.2px;top:687.5px;width:40px;text-align:center;font-size:11px;line-height:11px;letter-spacing:0.9px;color:#111">−2</div>
<div class="s" style="left:26.3px;top:632.6px;width:38.5px;text-align:right;font-size:11px;line-height:11px;letter-spacing:0.9px;color:#111">−2</div>
<div class="s" style="left:124.2px;top:687.5px;width:40px;text-align:center;font-size:11px;line-height:11px;letter-spacing:0.9px;color:#111">0</div>
<div class="s" style="left:26.3px;top:600.6px;width:38.5px;text-align:right;font-size:11px;line-height:11px;letter-spacing:0.9px;color:#111">0</div>
<div class="s" style="left:156.2px;top:687.5px;width:40px;text-align:center;font-size:11px;line-height:11px;letter-spacing:0.9px;color:#111">2</div>
<div class="s" style="left:26.3px;top:568.6px;width:38.5px;text-align:right;font-size:11px;line-height:11px;letter-spacing:0.9px;color:#111">2</div>
<div class="s" style="left:188.2px;top:687.5px;width:40px;text-align:center;font-size:11px;line-height:11px;letter-spacing:0.9px;color:#111">4</div>
<div class="s" style="left:26.3px;top:536.6px;width:38.5px;text-align:right;font-size:11px;line-height:11px;letter-spacing:0.9px;color:#111">4</div>
<div class="s" style="left:44.2px;top:699.7px;width:200px;text-align:center;font-size:10.8px;line-height:10.8px;color:#111;transform:scaleX(1.1)">arcsecs</div>
<div class="s" style="left:44.2px;top:515.3px;width:200px;text-align:center;font-size:12.6px;line-height:12.6px;color:#111;transform:scaleX(1.13)">Fiber Positions</div>
<div class="s" style="left:319.2px;top:537.9px;width:20px;text-align:center;font-size:10.5px;line-height:10.5px;color:#ff0000">N</div>
<div class="s" style="left:256.6px;top:600.8px;width:20px;text-align:center;font-size:10.5px;line-height:10.5px;color:#ff0000">E</div>
<div class="s" style="left:245.2px;top:687.1px;width:40px;text-align:center;font-size:11px;line-height:11px;letter-spacing:0.9px;color:#111">−4</div>
<div class="s" style="left:211.5px;top:664.5px;width:38.5px;text-align:right;font-size:11px;line-height:11px;letter-spacing:0.9px;color:#111">−4</div>
<div class="s" style="left:277.2px;top:687.1px;width:40px;text-align:center;font-size:11px;line-height:11px;letter-spacing:0.9px;color:#111">−2</div>
<div class="s" style="left:211.5px;top:632.5px;width:38.5px;text-align:right;font-size:11px;line-height:11px;letter-spacing:0.9px;color:#111">−2</div>
<div class="s" style="left:309.2px;top:687.1px;width:40px;text-align:center;font-size:11px;line-height:11px;letter-spacing:0.9px;color:#111">0</div>
<div class="s" style="left:211.5px;top:600.5px;width:38.5px;text-align:right;font-size:11px;line-height:11px;letter-spacing:0.9px;color:#111">0</div>
<div class="s" style="left:341.2px;top:687.1px;width:40px;text-align:center;font-size:11px;line-height:11px;letter-spacing:0.9px;color:#111">2</div>
<div class="s" style="left:211.5px;top:568.5px;width:38.5px;text-align:right;font-size:11px;line-height:11px;letter-spacing:0.9px;color:#111">2</div>
<div class="s" style="left:373.2px;top:687.1px;width:40px;text-align:center;font-size:11px;line-height:11px;letter-spacing:0.9px;color:#111">4</div>
<div class="s" style="left:211.5px;top:536.5px;width:38.5px;text-align:right;font-size:11px;line-height:11px;letter-spacing:0.9px;color:#111">4</div>
<div class="s" style="left:229.2px;top:699.3px;width:200px;text-align:center;font-size:10.8px;line-height:10.8px;color:#111;transform:scaleX(1.1)">s/b: 1.88 +/- 0.079</div>
<div class="s" style="left:229.2px;top:515.3px;width:200px;text-align:center;font-size:12.6px;line-height:12.6px;color:#111;transform:scaleX(1.13)">Lineflux Map</div>
<div class="s" style="left:504.4px;top:538.0px;width:20px;text-align:center;font-size:10.5px;line-height:10.5px;color:#ff0000">N</div>
<div class="s" style="left:441.8px;top:600.9px;width:20px;text-align:center;font-size:10.5px;line-height:10.5px;color:#ff0000">E</div>
<div class="s" style="left:430.4px;top:686.9px;width:40px;text-align:center;font-size:11px;line-height:11px;letter-spacing:0.9px;color:#111">−4</div>
<div class="s" style="left:396.8px;top:664.6px;width:38.5px;text-align:right;font-size:11px;line-height:11px;letter-spacing:0.9px;color:#111">−4</div>
<div class="s" style="left:462.4px;top:686.9px;width:40px;text-align:center;font-size:11px;line-height:11px;letter-spacing:0.9px;color:#111">−2</div>
<div class="s" style="left:396.8px;top:632.6px;width:38.5px;text-align:right;font-size:11px;line-height:11px;letter-spacing:0.9px;color:#111">−2</div>
<div class="s" style="left:494.4px;top:686.9px;width:40px;text-align:center;font-size:11px;line-height:11px;letter-spacing:0.9px;color:#111">0</div>
<div class="s" style="left:396.8px;top:600.6px;width:38.5px;text-align:right;font-size:11px;line-height:11px;letter-spacing:0.9px;color:#111">0</div>
<div class="s" style="left:526.4px;top:686.9px;width:40px;text-align:center;font-size:11px;line-height:11px;letter-spacing:0.9px;color:#111">2</div>
<div class="s" style="left:396.8px;top:568.6px;width:38.5px;text-align:right;font-size:11px;line-height:11px;letter-spacing:0.9px;color:#111">2</div>
<div class="s" style="left:558.4px;top:686.9px;width:40px;text-align:center;font-size:11px;line-height:11px;letter-spacing:0.9px;color:#111">4</div>
<div class="s" style="left:396.8px;top:536.6px;width:38.5px;text-align:right;font-size:11px;line-height:11px;letter-spacing:0.9px;color:#111">4</div>
<div class="s" style="left:414.4px;top:699.1px;width:200px;text-align:center;font-size:10.8px;line-height:10.8px;color:#111;transform:scaleX(1.1)">m:16.6  re:3.6&quot;  s:2.6&quot;</div>
<div class="s" style="left:414.4px;top:711.1px;width:200px;text-align:center;font-size:10.8px;line-height:10.8px;color:#111;transform:scaleX(1.1)">EWr: 0, PLAE: 0.3</div>
<div class="s" style="left:414.4px;top:515.3px;width:200px;text-align:center;font-size:12.6px;line-height:12.6px;color:#111;transform:scaleX(1.13)">KPNO(24.7) g</div>
</body></html>
